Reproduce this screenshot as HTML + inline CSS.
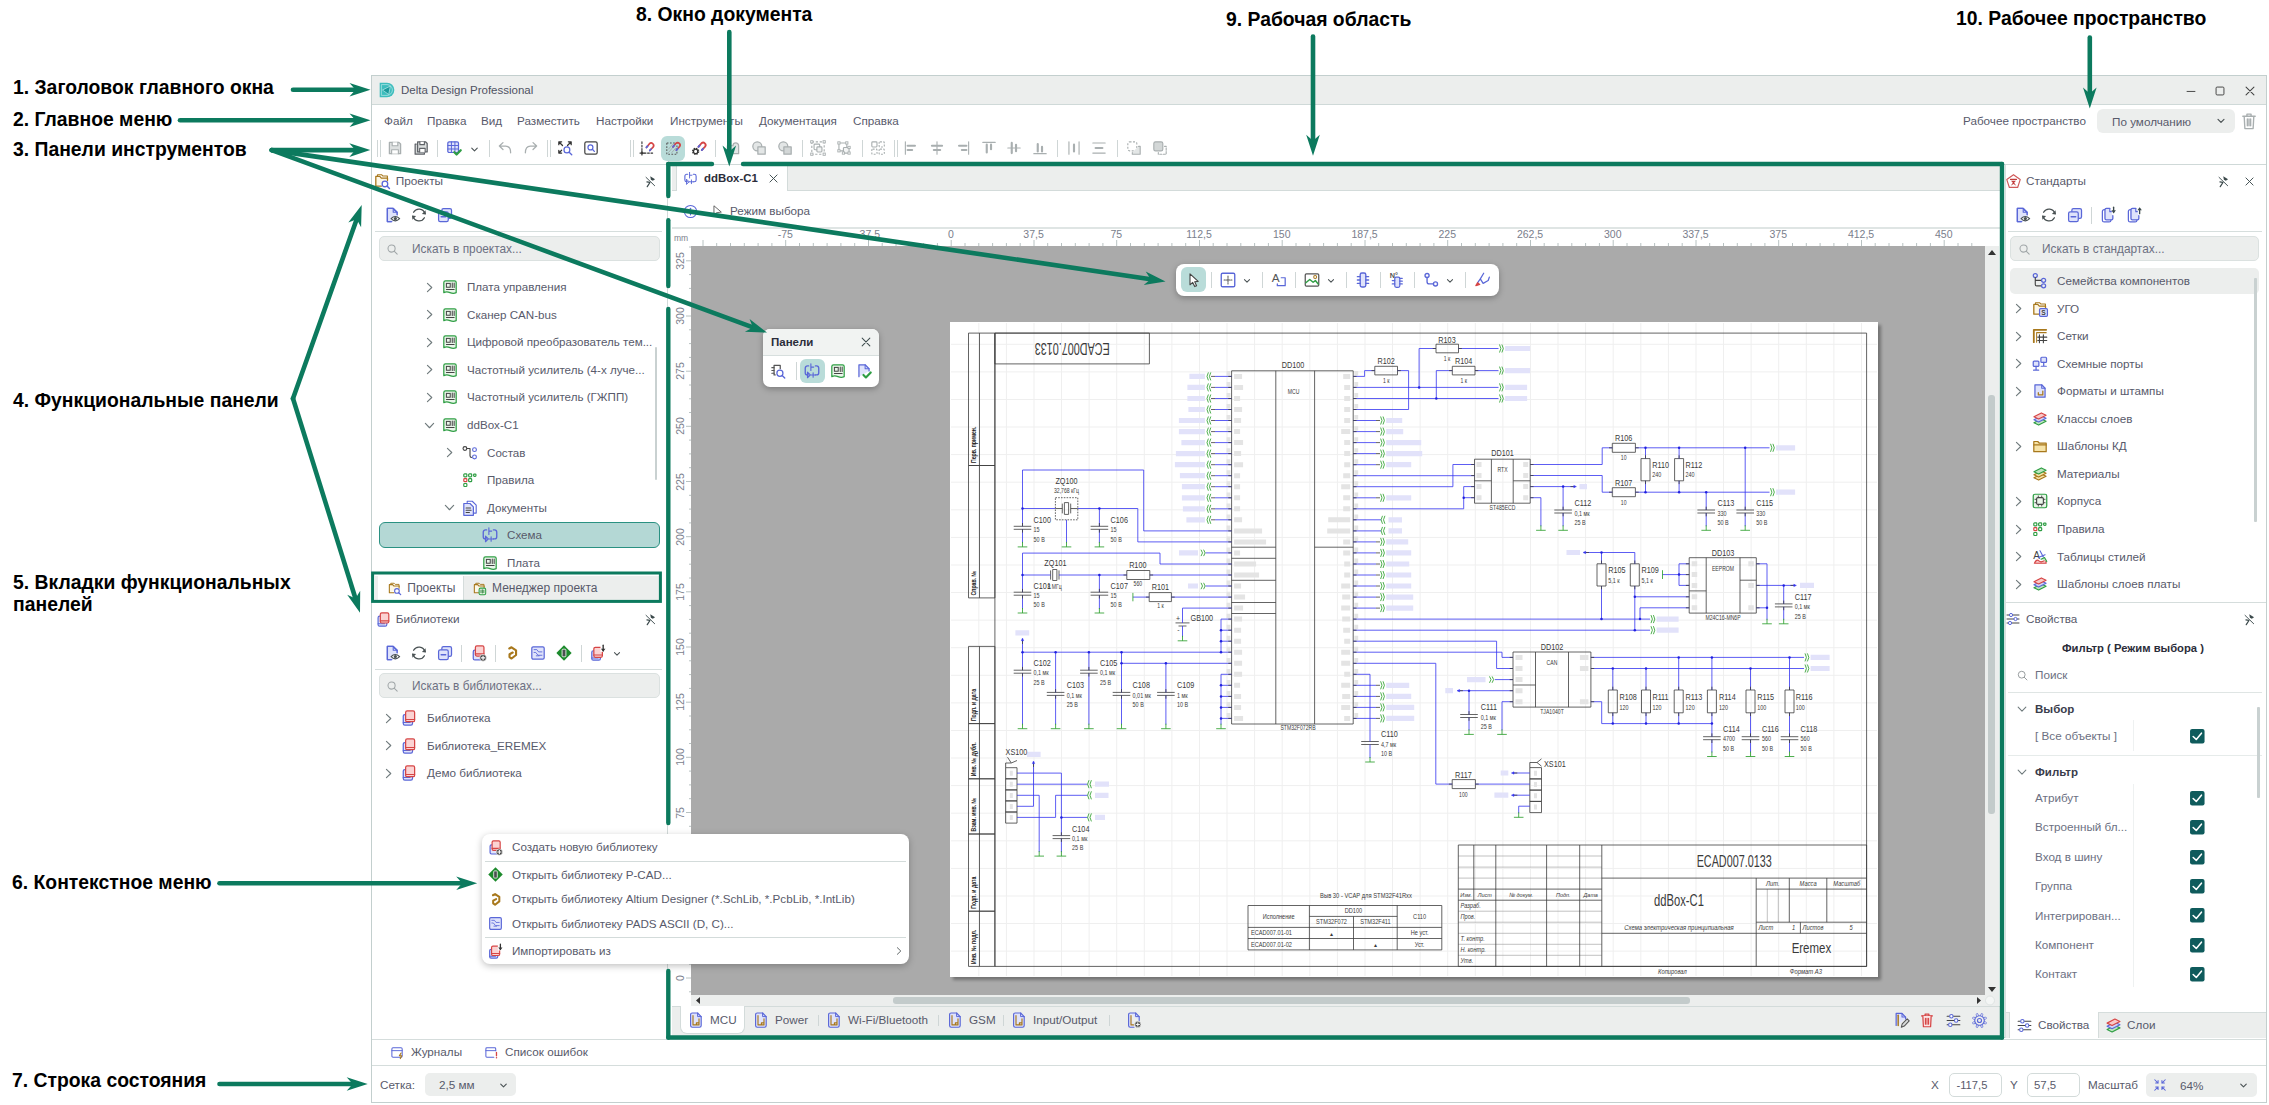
<!DOCTYPE html>
<html lang="ru"><head><meta charset="utf-8"><title>Delta Design Professional</title>
<style>
html,body{margin:0;padding:0;background:#fff;}
body{width:2269px;height:1105px;position:relative;overflow:hidden;font-family:"Liberation Sans",sans-serif;}
.t{position:absolute;white-space:nowrap;}
.r{position:absolute;}
svg{position:absolute;overflow:visible;}
.ic{position:absolute;width:16px;height:16px;}
</style></head><body>
<div class="r" style="left:371px;top:75px;width:1896px;height:1028px;background:#fff;border:1px solid #c3cfce;box-sizing:border-box;"></div>
<div class="r" style="left:372px;top:76px;width:1894px;height:28px;background:#eceeed;"></div>
<div class="r" style="left:372px;top:104px;width:1894px;height:1px;background:#cfd9d8;"></div>
<svg class="ic" style="left:377.5px;top:81.0px;width:18px;height:18px;" viewBox="0 0 16 16"><path d="M1.5 1.5 H8 A6.5 6.5 0 0 1 8 14.5 H1.5 Z" fill="#3dbdbd"/><path d="M4 8 L11 4.5 L9.5 12 Z" fill="#1a9a9c" stroke="#bfeaea" stroke-width="0.6"/><path d="M3 3.2 H8 A4.8 4.8 0 0 1 8 12.8 H3 Z" fill="none" stroke="#bfeaea" stroke-width="0.6"/></svg>
<div class="t" style="top:80.0px;font-size:11.5px;color:#4f5263;line-height:20px;left:401px;">Delta Design Professional</div>
<svg class="ic" style="left:2183.5px;top:83.8px;width:14px;height:14px;" viewBox="0 0 16 16"><path d="M3.5 8.5 L12.5 8.5" stroke="#444" stroke-width="1.1" fill="none" stroke-linecap="round" stroke-linejoin="round" /></svg>
<svg class="ic" style="left:2212.5px;top:83.8px;width:14px;height:14px;" viewBox="0 0 16 16"><rect x="3.5" y="3.5" width="9" height="9" rx="1.2" stroke="#444" stroke-width="1.1" fill="none"/></svg>
<svg class="ic" style="left:2242.5px;top:83.8px;width:14px;height:14px;" viewBox="0 0 16 16"><path d="M3.5 3.5 L12.5 12.5 M12.5 3.5 L3.5 12.5" stroke="#444" stroke-width="1.2" fill="none" stroke-linecap="round" stroke-linejoin="round" /></svg>
<div class="t" style="top:111.0px;font-size:11.7px;color:#585a6b;line-height:20px;left:384px;">Файл</div>
<div class="t" style="top:111.0px;font-size:11.7px;color:#585a6b;line-height:20px;left:427px;">Правка</div>
<div class="t" style="top:111.0px;font-size:11.7px;color:#585a6b;line-height:20px;left:481px;">Вид</div>
<div class="t" style="top:111.0px;font-size:11.7px;color:#585a6b;line-height:20px;left:517px;">Разместить</div>
<div class="t" style="top:111.0px;font-size:11.7px;color:#585a6b;line-height:20px;left:596px;">Настройки</div>
<div class="t" style="top:111.0px;font-size:11.7px;color:#585a6b;line-height:20px;left:670px;">Инструменты</div>
<div class="t" style="top:111.0px;font-size:11.7px;color:#585a6b;line-height:20px;left:759px;">Документация</div>
<div class="t" style="top:111.0px;font-size:11.7px;color:#585a6b;line-height:20px;left:853px;">Справка</div>
<div class="t" style="top:111.0px;font-size:11.7px;color:#585a6b;line-height:20px;left:1963px;">Рабочее пространство</div>
<div class="r" style="left:2097px;top:109px;width:137.5px;height:24px;background:#eceeed;border-radius:6px;"></div>
<div class="t" style="top:111.5px;font-size:11.7px;color:#585a6b;line-height:20px;left:2112px;">По умолчанию</div>
<svg class="ic" style="left:2214.0px;top:114.0px;width:14px;height:14px;" viewBox="0 0 16 16"><path d="M4.6 6.2 L8 9.6 L11.4 6.2" stroke="#4c5456" stroke-width="1.4" fill="none" stroke-linecap="round" stroke-linejoin="round" /></svg>
<svg class="ic" style="left:2237.5px;top:109.8px;width:22px;height:22px;" viewBox="0 0 16 16"><path d="M3.5 4.5 H12.5 M6.5 4.5 V3 H9.5 V4.5 M4.5 4.5 L5 13.5 H11 L11.5 4.5 M6.8 6.5 V11.5 M9.2 6.5 V11.5 M8 6.5 V11.5" stroke="#a9afb0" stroke-width="1.0" fill="none" stroke-linecap="round" stroke-linejoin="round" /></svg>
<div class="r" style="left:377px;top:140px;width:1px;height:17px;background:#cfd6d6;"></div>
<div class="r" style="left:380px;top:140px;width:1px;height:17px;background:#cfd6d6;"></div>
<svg class="ic" style="left:386.0px;top:139.4px;width:18px;height:18px;" viewBox="0 0 16 16"><path d="M3 3 H11.5 L13 4.5 V13 H3 Z" stroke="#a9afb0" stroke-width="1.1" fill="#dde0e0" stroke-linecap="round" stroke-linejoin="round" /><path d="M5.5 3 V6 H10.5 V3" stroke="#a9afb0" stroke-width="1.0" fill="#fff" stroke-linecap="round" stroke-linejoin="round" /><path d="M5 13 V9.5 H11 V13" stroke="#a9afb0" stroke-width="1.0" fill="#fff" stroke-linecap="round" stroke-linejoin="round" /></svg>
<svg class="ic" style="left:412.0px;top:139.4px;width:18px;height:18px;" viewBox="0 0 16 16"><path d="M3.8 4.5 H2.8 V13.5 H11 V12.5" stroke="#5f6368" stroke-width="1.1" fill="#d5d8d8" stroke-linecap="round" stroke-linejoin="round" /><path d="M5 2.5 H12 L13.5 4 V11.5 H5 Z" stroke="#5f6368" stroke-width="1.1" fill="#dde0e0" stroke-linecap="round" stroke-linejoin="round" /><path d="M7 2.5 V5 H11 V2.5" stroke="#5f6368" stroke-width="1.0" fill="#fff" stroke-linecap="round" stroke-linejoin="round" /><path d="M6.8 11.5 V8.3 H11.7 V11.5" stroke="#5f6368" stroke-width="1.0" fill="#fff" stroke-linecap="round" stroke-linejoin="round" /></svg>
<div class="r" style="left:437px;top:140px;width:1px;height:17px;background:#cfd6d6;"></div>
<svg class="ic" style="left:445.0px;top:139.4px;width:18px;height:18px;" viewBox="0 0 16 16"><rect x="2.5" y="2.5" width="9.5" height="9.5" rx="1.2" stroke="#5a67d8" stroke-width="1.1" fill="#dfe3fb"/><path d="M2.5 5.7 H12 M2.5 8.8 H12 M5.7 2.5 V12 M8.8 2.5 V12" stroke="#5a67d8" stroke-width="0.9" fill="none" stroke-linecap="round" stroke-linejoin="round" /><path d="M8.3 11.8 L10.3 13.8 L14 10" stroke="#2f9e44" stroke-width="2.0" fill="none" stroke-linecap="round" stroke-linejoin="round" /></svg>
<svg class="ic" style="left:467.5px;top:143.0px;width:13px;height:13px;" viewBox="0 0 16 16"><path d="M4.6 6.2 L8 9.6 L11.4 6.2" stroke="#4c5456" stroke-width="1.4" fill="none" stroke-linecap="round" stroke-linejoin="round" /></svg>
<div class="r" style="left:489px;top:140px;width:1px;height:17px;background:#cfd6d6;"></div>
<svg class="ic" style="left:496.0px;top:139.4px;width:18px;height:18px;" viewBox="0 0 16 16"><path d="M3 6.3 H8.6 Q13 6.3 13 12.3 M6.2 3.2 L3 6.3 L6.2 9.4" stroke="#a9afb0" stroke-width="1.15" fill="none" stroke-linecap="round" stroke-linejoin="round" /></svg>
<svg class="ic" style="left:522.0px;top:139.4px;width:18px;height:18px;" viewBox="0 0 16 16"><path d="M13 6.3 H7.4 Q3 6.3 3 12.3 M9.8 3.2 L13 6.3 L9.8 9.4" stroke="#a9afb0" stroke-width="1.15" fill="none" stroke-linecap="round" stroke-linejoin="round" /></svg>
<div class="r" style="left:547px;top:140px;width:1px;height:17px;background:#cfd6d6;"></div>
<div class="r" style="left:550px;top:140px;width:1px;height:17px;background:#cfd6d6;"></div>
<svg class="ic" style="left:556.0px;top:139.4px;width:18px;height:18px;" viewBox="0 0 16 16"><path d="M2.5 5 V2.5 H5 M2.7 2.7 L5.8 5.8 M13.5 5 V2.5 H11 M13.3 2.7 L10.2 5.8 M2.5 10 V12.5 H5 M2.7 12.3 L5 10" stroke="#333" stroke-width="1.1" fill="none" stroke-linecap="round" stroke-linejoin="round" /><circle cx="9.7" cy="9.7" r="2.6" stroke="#5a67d8" stroke-width="1.1" fill="none"/><path d="M11.7 11.7 L14 14" stroke="#5a67d8" stroke-width="1.2" fill="none" stroke-linecap="round" stroke-linejoin="round" /></svg>
<svg class="ic" style="left:582.0px;top:139.4px;width:18px;height:18px;" viewBox="0 0 16 16"><rect x="2.5" y="2.5" width="11" height="11" rx="1.5" stroke="#444" stroke-width="1.1" fill="none"/><circle cx="7.5" cy="7.5" r="2.2" stroke="#5a67d8" stroke-width="1.1" fill="none"/><path d="M9.2 9.2 L11 11" stroke="#5a67d8" stroke-width="1.2" fill="none" stroke-linecap="round" stroke-linejoin="round" /></svg>
<div class="r" style="left:630px;top:140px;width:1px;height:17px;background:#cfd6d6;"></div>
<div class="r" style="left:633px;top:140px;width:1px;height:17px;background:#cfd6d6;"></div>
<svg class="ic" style="left:638.0px;top:139.4px;width:18px;height:18px;" viewBox="0 0 16 16"><path d="M3.5 2.5 V12.5 H13" stroke="#333" stroke-width="1.0" fill="none" stroke-linecap="round" stroke-linejoin="round" stroke-dasharray="1.6 1.4"/><path d="M1.8 12.5 H5.2 M3.5 10.8 V14.2" stroke="#333" stroke-width="1.1" fill="none" stroke-linecap="round" stroke-linejoin="round" /><path d="M7.5 7.5 L10.2 4.2 A2.2 2.2 0 0 1 13.4 7.2 L10.5 10.2" stroke="#d64545" stroke-width="1.5" fill="none" stroke-linecap="round" stroke-linejoin="round" /><path d="M7.5 7.5 L8.5 6.3 M10.5 10.2 L11.5 9.1" stroke="#5a67d8" stroke-width="1.6" fill="none" stroke-linecap="round" stroke-linejoin="round" /></svg>
<div class="r" style="left:661.2px;top:136px;width:24.199999999999932px;height:24.599999999999994px;background:#b9dcd9;border-radius:6px;"></div>
<svg class="ic" style="left:664.0px;top:139.4px;width:18px;height:18px;" viewBox="0 0 16 16"><rect x="2.5" y="3.5" width="9" height="10" stroke="#555" stroke-width="0.9" fill="none" stroke-dasharray="1.5 1.3"/><path d="M4 12 L10 5 M4 9 L7.5 5 M7 12 L10.5 8" stroke="#999" stroke-width="0.6" fill="none" stroke-linecap="round" stroke-linejoin="round" /><path d="M8 7 L10.6 3.8 A2.2 2.2 0 0 1 13.8 6.8 L11 9.8" stroke="#d64545" stroke-width="1.5" fill="none" stroke-linecap="round" stroke-linejoin="round" /><path d="M8 7 L9 5.8 M11 9.8 L12 8.7" stroke="#5a67d8" stroke-width="1.6" fill="none" stroke-linecap="round" stroke-linejoin="round" /></svg>
<svg class="ic" style="left:690.0px;top:139.4px;width:18px;height:18px;" viewBox="0 0 16 16"><circle cx="5" cy="11" r="2.4" stroke="#333" stroke-width="1.7" fill="none" stroke-dasharray="1.15 0.73"/><circle cx="5" cy="11" r="1.9" stroke="#333" stroke-width="1.1" fill="none"/><path d="M7.5 7 L10.2 3.8 A2.2 2.2 0 0 1 13.4 6.8 L10.5 9.8" stroke="#d64545" stroke-width="1.6" fill="none" stroke-linecap="round" stroke-linejoin="round" /><path d="M7.5 7 L8.5 5.8 M10.5 9.8 L11.5 8.7" stroke="#5a67d8" stroke-width="1.7" fill="none" stroke-linecap="round" stroke-linejoin="round" /></svg>
<div class="r" style="left:715px;top:140px;width:1px;height:17px;background:#cfd6d6;"></div>
<svg class="ic" style="left:724.0px;top:139.4px;width:18px;height:18px;" viewBox="0 0 16 16"><path d="M3 6 H8 A2.5 2.5 0 0 1 13 6 V13 H3 Z" stroke="#a9afb0" stroke-width="1.1" fill="#e3e6e6" stroke-linecap="round" stroke-linejoin="round" /></svg>
<svg class="ic" style="left:750.0px;top:139.4px;width:18px;height:18px;" viewBox="0 0 16 16"><circle cx="6.5" cy="6.5" r="4" stroke="#a9afb0" stroke-width="1.1" fill="#e3e6e6"/><path d="M7 7 H13.5 V13.5 H7 Z" stroke="#a9afb0" stroke-width="1.1" fill="#e3e6e6" stroke-linecap="round" stroke-linejoin="round" /></svg>
<svg class="ic" style="left:776.0px;top:139.4px;width:18px;height:18px;" viewBox="0 0 16 16"><circle cx="6.5" cy="6.5" r="4" stroke="#a9afb0" stroke-width="1.1" fill="#e3e6e6"/><path d="M7 7 H13.5 V13.5 H7 Z" stroke="#a9afb0" stroke-width="1.1" fill="#d3d7d7" stroke-linecap="round" stroke-linejoin="round" /></svg>
<div class="r" style="left:802px;top:140px;width:1px;height:17px;background:#cfd6d6;"></div>
<svg class="ic" style="left:809.0px;top:139.4px;width:18px;height:18px;" viewBox="0 0 16 16"><rect x="2.5" y="2.5" width="11" height="11" stroke="#a9afb0" stroke-width="1" fill="none" stroke-dasharray="2 1.5"/><rect x="4.5" y="4.5" width="5" height="5" rx="0.8" stroke="#a9afb0" stroke-width="1" fill="none"/><rect x="7" y="7" width="4.5" height="4.5" rx="0.8" stroke="#a9afb0" stroke-width="1" fill="#f3f4f4"/><rect x="1.5" y="1.5" width="2" height="2" fill="#fff" stroke="#a9afb0" stroke-width="0.8"/><rect x="12.5" y="1.5" width="2" height="2" fill="#fff" stroke="#a9afb0" stroke-width="0.8"/><rect x="1.5" y="12.5" width="2" height="2" fill="#fff" stroke="#a9afb0" stroke-width="0.8"/><rect x="12.5" y="12.5" width="2" height="2" fill="#fff" stroke="#a9afb0" stroke-width="0.8"/></svg>
<svg class="ic" style="left:835.0px;top:139.4px;width:18px;height:18px;" viewBox="0 0 16 16"><rect x="3.5" y="3.5" width="7" height="7" rx="0.8" stroke="#a9afb0" stroke-width="1" fill="none"/><rect x="7.5" y="7.5" width="5" height="5" rx="0.8" stroke="#a9afb0" stroke-width="1" fill="#f3f4f4"/><rect x="2.5" y="2.5" width="2" height="2" fill="#fff" stroke="#a9afb0" stroke-width="0.8"/><rect x="9.5" y="2.5" width="2" height="2" fill="#fff" stroke="#a9afb0" stroke-width="0.8"/><rect x="2.5" y="9.5" width="2" height="2" fill="#fff" stroke="#a9afb0" stroke-width="0.8"/><rect x="11.5" y="6.5" width="2" height="2" fill="#fff" stroke="#a9afb0" stroke-width="0.8"/><rect x="11.5" y="11.5" width="2" height="2" fill="#fff" stroke="#a9afb0" stroke-width="0.8"/><rect x="6.5" y="11.5" width="2" height="2" fill="#fff" stroke="#a9afb0" stroke-width="0.8"/></svg>
<div class="r" style="left:862px;top:140px;width:1px;height:17px;background:#cfd6d6;"></div>
<svg class="ic" style="left:869.0px;top:139.4px;width:18px;height:18px;" viewBox="0 0 16 16"><rect x="2.5" y="2.5" width="4.6" height="4.6" rx="0.8" stroke="#a9afb0" stroke-width="1" fill="none"/><rect x="9" y="2.5" width="4.6" height="4.6" rx="0.8" stroke="#a9afb0" stroke-width="1" fill="none" stroke-dasharray="1.7 1.2"/><rect x="2.5" y="9" width="4.6" height="4.6" rx="0.8" stroke="#a9afb0" stroke-width="1" fill="none" stroke-dasharray="1.7 1.2"/><rect x="9" y="9" width="4.6" height="4.6" rx="0.8" stroke="#a9afb0" stroke-width="1" fill="none" stroke-dasharray="1.7 1.2"/></svg>
<div class="r" style="left:894px;top:140px;width:1px;height:17px;background:#cfd6d6;"></div>
<div class="r" style="left:897px;top:140px;width:1px;height:17px;background:#cfd6d6;"></div>
<svg class="ic" style="left:902.0px;top:139.4px;width:18px;height:18px;" viewBox="0 0 16 16"><path d="M3 2.5 V13.5" stroke="#a9afb0" stroke-width="1.0" fill="none" stroke-linecap="round" stroke-linejoin="round" /><path d="M5 6 H11.5 M5 9.8 H9" stroke="#a9afb0" stroke-width="1.9" fill="none" stroke-linecap="round" stroke-linejoin="round" stroke-linecap="butt"/></svg>
<svg class="ic" style="left:928.0px;top:139.4px;width:18px;height:18px;" viewBox="0 0 16 16"><path d="M8 2.5 V13.5" stroke="#a9afb0" stroke-width="1.0" fill="none" stroke-linecap="round" stroke-linejoin="round" /><path d="M3.5 6 H12.5 M5.2 9.8 H10.8" stroke="#a9afb0" stroke-width="1.9" fill="none" stroke-linecap="round" stroke-linejoin="round" stroke-linecap="butt"/></svg>
<svg class="ic" style="left:954.0px;top:139.4px;width:18px;height:18px;" viewBox="0 0 16 16"><path d="M13 2.5 V13.5" stroke="#a9afb0" stroke-width="1.0" fill="none" stroke-linecap="round" stroke-linejoin="round" /><path d="M4.5 6 H11 M7 9.8 H11" stroke="#a9afb0" stroke-width="1.9" fill="none" stroke-linecap="round" stroke-linejoin="round" stroke-linecap="butt"/></svg>
<svg class="ic" style="left:980.0px;top:139.4px;width:18px;height:18px;" viewBox="0 0 16 16"><path d="M2.5 3 H13.5" stroke="#a9afb0" stroke-width="1.0" fill="none" stroke-linecap="round" stroke-linejoin="round" /><path d="M6 5 V12 M9.8 5 V9" stroke="#a9afb0" stroke-width="1.9" fill="none" stroke-linecap="round" stroke-linejoin="round" stroke-linecap="butt"/></svg>
<svg class="ic" style="left:1005.0px;top:139.4px;width:18px;height:18px;" viewBox="0 0 16 16"><path d="M2.5 8 H13.5" stroke="#a9afb0" stroke-width="1.0" fill="none" stroke-linecap="round" stroke-linejoin="round" /><path d="M6 3.5 V12.5 M9.8 5.2 V10.8" stroke="#a9afb0" stroke-width="1.9" fill="none" stroke-linecap="round" stroke-linejoin="round" stroke-linecap="butt"/></svg>
<svg class="ic" style="left:1031.0px;top:139.4px;width:18px;height:18px;" viewBox="0 0 16 16"><path d="M2.5 13 H13.5" stroke="#a9afb0" stroke-width="1.0" fill="none" stroke-linecap="round" stroke-linejoin="round" /><path d="M6 4.5 V11 M9.8 7 V11" stroke="#a9afb0" stroke-width="1.9" fill="none" stroke-linecap="round" stroke-linejoin="round" stroke-linecap="butt"/></svg>
<div class="r" style="left:1057px;top:140px;width:1px;height:17px;background:#cfd6d6;"></div>
<svg class="ic" style="left:1065.0px;top:139.4px;width:18px;height:18px;" viewBox="0 0 16 16"><path d="M3.5 2.5 V13.5 M12.5 2.5 V13.5" stroke="#a9afb0" stroke-width="1.0" fill="none" stroke-linecap="round" stroke-linejoin="round" /><path d="M8 5 V11" stroke="#a9afb0" stroke-width="1.9" fill="none" stroke-linecap="round" stroke-linejoin="round" stroke-linecap="butt"/></svg>
<svg class="ic" style="left:1090.0px;top:139.4px;width:18px;height:18px;" viewBox="0 0 16 16"><path d="M2.5 3.5 H13.5 M2.5 12.5 H13.5" stroke="#a9afb0" stroke-width="1.0" fill="none" stroke-linecap="round" stroke-linejoin="round" /><path d="M5 8 H11" stroke="#a9afb0" stroke-width="1.9" fill="none" stroke-linecap="round" stroke-linejoin="round" stroke-linecap="butt"/></svg>
<div class="r" style="left:1117px;top:140px;width:1px;height:17px;background:#cfd6d6;"></div>
<svg class="ic" style="left:1125.0px;top:139.4px;width:18px;height:18px;" viewBox="0 0 16 16"><rect x="2.5" y="2.5" width="8" height="8" rx="1.5" stroke="#a9afb0" stroke-width="1" fill="none" stroke-dasharray="1.8 1.3"/><path d="M12 6.5 H13.5 V13.5 H6.5 V12" stroke="#a9afb0" stroke-width="1.0" fill="#e3e6e6" stroke-linecap="round" stroke-linejoin="round" /></svg>
<svg class="ic" style="left:1151.0px;top:139.4px;width:18px;height:18px;" viewBox="0 0 16 16"><rect x="2.5" y="2.5" width="8" height="8" rx="1.5" stroke="#a9afb0" stroke-width="1" fill="#d3d7d7"/><path d="M12 6.5 H13.5 V13.5 H6.5 V12" stroke="#a9afb0" stroke-width="1.0" fill="none" stroke-linecap="round" stroke-linejoin="round" stroke-dasharray="1.8 1.3"/></svg>
<div class="r" style="left:372px;top:164px;width:1894px;height:1px;background:#cfd9d8;"></div>
<div class="r" style="left:667px;top:165px;width:1px;height:873px;background:#d3dbda;"></div>
<svg class="ic" style="left:373.0px;top:172.0px;width:18px;height:18px;" viewBox="0 0 16 16"><path d="M4 3.6 V2.4 H7.6 L8.8 3.6 H12.8 V6" stroke="#a8781c" stroke-width="1.0" fill="none" stroke-linecap="round" stroke-linejoin="round" /><path d="M2.5 12.6 V3.9 H6 L7.4 5.4 H12.9 V7.6 M2.5 12.6 H7.4" stroke="#a8781c" stroke-width="1.15" fill="#fdf7e6" stroke-linecap="round" stroke-linejoin="round" /><circle cx="10.6" cy="10.6" r="2.5" stroke="#5a67d8" stroke-width="1.15" fill="#fff"/><path d="M12.5 12.5 L14.6 14.6" stroke="#5a67d8" stroke-width="1.3" fill="none" stroke-linecap="round" stroke-linejoin="round" /></svg>
<div class="t" style="top:171.0px;font-size:11.8px;color:#585a6b;line-height:20px;left:395.7px;">Проекты</div>
<svg class="ic" style="left:643.5px;top:174.5px;width:13px;height:13px;" viewBox="0 0 16 16"><path d="M7.7 1.6 L13.6 5.2 L10.8 7.2 L8.5 5.7 Z" fill="#3c4a4c"/><path d="M2.5 2.9 L13.1 13.2" stroke="#3c4a4c" stroke-width="1.15" fill="none" stroke-linecap="round" stroke-linejoin="round" /><path d="M3.6 8.4 L7.1 9.1" stroke="#3c4a4c" stroke-width="1.5" fill="none" stroke-linecap="round" stroke-linejoin="round" /><path d="M7.1 9.5 L4 14.4" stroke="#3c4a4c" stroke-width="1.5" fill="none" stroke-linecap="round" stroke-linejoin="round" /></svg>
<svg class="ic" style="left:384.0px;top:206.0px;width:18px;height:18px;" viewBox="0 0 16 16"><path d="M3 13.8 V2.2 H8.2 L11.6 5.6 V8 M3 13.8 H7" stroke="#5a67d8" stroke-width="1.15" fill="#dfe3fb" stroke-linecap="round" stroke-linejoin="round" /><path d="M3.2 2.4 H8 V5.8 H11.4 V13.6 H3.2 Z" fill="#dfe3fb"/><path d="M3 13.8 V2.2 H8.2 L11.6 5.6 V7.5 M3 13.8 H6.5" stroke="#5a67d8" stroke-width="1.15" fill="none" stroke-linecap="round" stroke-linejoin="round" /><path d="M8.2 2.2 V5.6 H11.6" stroke="#5a67d8" stroke-width="1.0" fill="none" stroke-linecap="round" stroke-linejoin="round" /><path d="M6.3 11.3 Q10 7.4 13.9 11.3 Q10 15 6.3 11.3 Z" stroke="#4a5254" stroke-width="1.0" fill="#fff" stroke-linecap="round" stroke-linejoin="round" /><circle cx="10.1" cy="11.2" r="1.4" fill="#4a5254"/></svg>
<svg class="ic" style="left:410.0px;top:206.0px;width:18px;height:18px;" viewBox="0 0 16 16"><path d="M13.3 6.8 A5.5 5.5 0 0 0 3.2 5.6" stroke="#4a5254" stroke-width="1.15" fill="none" stroke-linecap="round" stroke-linejoin="round" /><path d="M2.7 9.2 A5.5 5.5 0 0 0 12.8 10.4" stroke="#4a5254" stroke-width="1.15" fill="none" stroke-linecap="round" stroke-linejoin="round" /><path d="M10.6 7.2 L14.2 7.6 L13.8 3.8 Z" fill="#4a5254"/><path d="M5.4 8.8 L1.8 8.4 L2.2 12.2 Z" fill="#4a5254"/></svg>
<svg class="ic" style="left:436.0px;top:206.0px;width:18px;height:18px;" viewBox="0 0 16 16"><rect x="5.2" y="2.3" width="8.6" height="8.6" rx="1.4" stroke="#5a67d8" stroke-width="1.1" fill="#dfe3fb"/><rect x="2.3" y="5.2" width="8.6" height="8.6" rx="1.4" stroke="#5a67d8" stroke-width="1.1" fill="#dfe3fb"/><path d="M4.6 9.5 H8.6" stroke="#5a67d8" stroke-width="1.3" fill="none" stroke-linecap="round" stroke-linejoin="round" /></svg>
<div class="r" style="left:375px;top:231px;width:287px;height:1px;background:#d6dedd;"></div>
<div class="r" style="left:379px;top:236px;width:281px;height:25px;background:#eceeed;border:1px solid #dbe1e0;box-sizing:border-box;border-radius:5px;"></div>
<svg class="ic" style="left:385.0px;top:241.5px;width:15px;height:15px;" viewBox="0 0 16 16"><circle cx="7" cy="7" r="3.8" stroke="#a0a6a8" stroke-width="1.1" fill="none"/><path d="M10 10 L13 13" stroke="#a0a6a8" stroke-width="1.1" fill="none" stroke-linecap="round" stroke-linejoin="round" /></svg>
<div class="t" style="top:238.5px;font-size:11.85px;color:#6c7082;line-height:20px;left:412px;">Искать в проектах...</div>
<div class="r" style="left:379px;top:522px;width:281px;height:26px;background:#b4d8d5;border:1.5px solid #2a9182;box-sizing:border-box;border-radius:6px;"></div>
<svg class="ic" style="left:421.5px;top:279.5px;width:15px;height:15px;" viewBox="0 0 16 16"><path d="M5.8 3.6 L10.4 8 L5.8 12.4" stroke="#6f7a7c" stroke-width="1.2" fill="none" stroke-linecap="round" stroke-linejoin="round" /></svg>
<svg class="ic" style="left:441.0px;top:278.0px;width:18px;height:18px;" viewBox="0 0 16 16"><path d="M2.5 13 V4 A1.5 1.5 0 0 1 4 2.5 H12 A1.5 1.5 0 0 1 13.5 4 V13 Q11 14.3 8 13 Q5 11.8 2.5 13 Z" stroke="#2f9e44" stroke-width="1.1" fill="#eaf6ea" stroke-linecap="round" stroke-linejoin="round" /><rect x="4.8" y="4.8" width="3.4" height="3.4" stroke="#444" stroke-width="0.9" fill="none"/><path d="M10 4.5 V8.5 M11.7 4.5 V8.5 M4.8 10.2 H11.7" stroke="#444" stroke-width="0.9" fill="none" stroke-linecap="round" stroke-linejoin="round" /></svg>
<div class="t" style="top:277.0px;font-size:11.62px;color:#585a6b;line-height:20px;left:467px;">Плата управления</div>
<svg class="ic" style="left:421.5px;top:307.1px;width:15px;height:15px;" viewBox="0 0 16 16"><path d="M5.8 3.6 L10.4 8 L5.8 12.4" stroke="#6f7a7c" stroke-width="1.2" fill="none" stroke-linecap="round" stroke-linejoin="round" /></svg>
<svg class="ic" style="left:441.0px;top:305.6px;width:18px;height:18px;" viewBox="0 0 16 16"><path d="M2.5 13 V4 A1.5 1.5 0 0 1 4 2.5 H12 A1.5 1.5 0 0 1 13.5 4 V13 Q11 14.3 8 13 Q5 11.8 2.5 13 Z" stroke="#2f9e44" stroke-width="1.1" fill="#eaf6ea" stroke-linecap="round" stroke-linejoin="round" /><rect x="4.8" y="4.8" width="3.4" height="3.4" stroke="#444" stroke-width="0.9" fill="none"/><path d="M10 4.5 V8.5 M11.7 4.5 V8.5 M4.8 10.2 H11.7" stroke="#444" stroke-width="0.9" fill="none" stroke-linecap="round" stroke-linejoin="round" /></svg>
<div class="t" style="top:304.6px;font-size:11.62px;color:#585a6b;line-height:20px;left:467px;">Сканер CAN-bus</div>
<svg class="ic" style="left:421.5px;top:334.7px;width:15px;height:15px;" viewBox="0 0 16 16"><path d="M5.8 3.6 L10.4 8 L5.8 12.4" stroke="#6f7a7c" stroke-width="1.2" fill="none" stroke-linecap="round" stroke-linejoin="round" /></svg>
<svg class="ic" style="left:441.0px;top:333.2px;width:18px;height:18px;" viewBox="0 0 16 16"><path d="M2.5 13 V4 A1.5 1.5 0 0 1 4 2.5 H12 A1.5 1.5 0 0 1 13.5 4 V13 Q11 14.3 8 13 Q5 11.8 2.5 13 Z" stroke="#2f9e44" stroke-width="1.1" fill="#eaf6ea" stroke-linecap="round" stroke-linejoin="round" /><rect x="4.8" y="4.8" width="3.4" height="3.4" stroke="#444" stroke-width="0.9" fill="none"/><path d="M10 4.5 V8.5 M11.7 4.5 V8.5 M4.8 10.2 H11.7" stroke="#444" stroke-width="0.9" fill="none" stroke-linecap="round" stroke-linejoin="round" /></svg>
<div class="t" style="top:332.2px;font-size:11.62px;color:#585a6b;line-height:20px;left:467px;">Цифровой преобразователь тем...</div>
<svg class="ic" style="left:421.5px;top:362.3px;width:15px;height:15px;" viewBox="0 0 16 16"><path d="M5.8 3.6 L10.4 8 L5.8 12.4" stroke="#6f7a7c" stroke-width="1.2" fill="none" stroke-linecap="round" stroke-linejoin="round" /></svg>
<svg class="ic" style="left:441.0px;top:360.8px;width:18px;height:18px;" viewBox="0 0 16 16"><path d="M2.5 13 V4 A1.5 1.5 0 0 1 4 2.5 H12 A1.5 1.5 0 0 1 13.5 4 V13 Q11 14.3 8 13 Q5 11.8 2.5 13 Z" stroke="#2f9e44" stroke-width="1.1" fill="#eaf6ea" stroke-linecap="round" stroke-linejoin="round" /><rect x="4.8" y="4.8" width="3.4" height="3.4" stroke="#444" stroke-width="0.9" fill="none"/><path d="M10 4.5 V8.5 M11.7 4.5 V8.5 M4.8 10.2 H11.7" stroke="#444" stroke-width="0.9" fill="none" stroke-linecap="round" stroke-linejoin="round" /></svg>
<div class="t" style="top:359.8px;font-size:11.62px;color:#585a6b;line-height:20px;left:467px;">Частотный усилитель (4-х луче...</div>
<svg class="ic" style="left:421.5px;top:389.9px;width:15px;height:15px;" viewBox="0 0 16 16"><path d="M5.8 3.6 L10.4 8 L5.8 12.4" stroke="#6f7a7c" stroke-width="1.2" fill="none" stroke-linecap="round" stroke-linejoin="round" /></svg>
<svg class="ic" style="left:441.0px;top:388.4px;width:18px;height:18px;" viewBox="0 0 16 16"><path d="M2.5 13 V4 A1.5 1.5 0 0 1 4 2.5 H12 A1.5 1.5 0 0 1 13.5 4 V13 Q11 14.3 8 13 Q5 11.8 2.5 13 Z" stroke="#2f9e44" stroke-width="1.1" fill="#eaf6ea" stroke-linecap="round" stroke-linejoin="round" /><rect x="4.8" y="4.8" width="3.4" height="3.4" stroke="#444" stroke-width="0.9" fill="none"/><path d="M10 4.5 V8.5 M11.7 4.5 V8.5 M4.8 10.2 H11.7" stroke="#444" stroke-width="0.9" fill="none" stroke-linecap="round" stroke-linejoin="round" /></svg>
<div class="t" style="top:387.4px;font-size:11.62px;color:#585a6b;line-height:20px;left:467px;">Частотный усилитель (ГЖПП)</div>
<svg class="ic" style="left:421.5px;top:417.5px;width:15px;height:15px;" viewBox="0 0 16 16"><path d="M3.6 5.8 L8 10.4 L12.4 5.8" stroke="#6f7a7c" stroke-width="1.2" fill="none" stroke-linecap="round" stroke-linejoin="round" /></svg>
<svg class="ic" style="left:441.0px;top:416.0px;width:18px;height:18px;" viewBox="0 0 16 16"><path d="M2.5 13 V4 A1.5 1.5 0 0 1 4 2.5 H12 A1.5 1.5 0 0 1 13.5 4 V13 Q11 14.3 8 13 Q5 11.8 2.5 13 Z" stroke="#2f9e44" stroke-width="1.1" fill="#eaf6ea" stroke-linecap="round" stroke-linejoin="round" /><rect x="4.8" y="4.8" width="3.4" height="3.4" stroke="#444" stroke-width="0.9" fill="none"/><path d="M10 4.5 V8.5 M11.7 4.5 V8.5 M4.8 10.2 H11.7" stroke="#444" stroke-width="0.9" fill="none" stroke-linecap="round" stroke-linejoin="round" /></svg>
<div class="t" style="top:415.0px;font-size:11.62px;color:#585a6b;line-height:20px;left:467px;">ddBox-C1</div>
<svg class="ic" style="left:441.5px;top:445.1px;width:15px;height:15px;" viewBox="0 0 16 16"><path d="M5.8 3.6 L10.4 8 L5.8 12.4" stroke="#6f7a7c" stroke-width="1.2" fill="none" stroke-linecap="round" stroke-linejoin="round" /></svg>
<svg class="ic" style="left:461.0px;top:443.6px;width:18px;height:18px;" viewBox="0 0 16 16"><circle cx="3.5" cy="4" r="1.7" stroke="#444" stroke-width="1" fill="none"/><path d="M5.2 4 H8 V10.5 Q8 12 9.5 12" stroke="#444" stroke-width="1" fill="none" stroke-linecap="round" stroke-linejoin="round" /><circle cx="12" cy="5" r="1.7" stroke="#5a67d8" stroke-width="1" fill="none"/><circle cx="12" cy="11.5" r="1.7" stroke="#5a67d8" stroke-width="1" fill="none"/></svg>
<div class="t" style="top:442.6px;font-size:11.62px;color:#585a6b;line-height:20px;left:487px;">Состав</div>
<svg class="ic" style="left:461.0px;top:471.2px;width:18px;height:18px;" viewBox="0 0 16 16"><rect x="2.5" y="2.5" width="2.7" height="2.7" rx="0.7" stroke="#2f9e44" stroke-width="1.05" fill="none"/><rect x="6.8" y="2.5" width="2.7" height="2.7" rx="0.7" stroke="#2f9e44" stroke-width="1.05" fill="none"/><rect x="11.2" y="2.7" width="2.1" height="2.1" rx="0.7" stroke="#2f9e44" stroke-width="1.05" fill="none"/><rect x="2.5" y="6.8" width="2.7" height="2.7" rx="0.7" stroke="#d64545" stroke-width="1.05" fill="none"/><rect x="6.8" y="6.8" width="2.7" height="2.7" rx="0.7" stroke="#2f9e44" stroke-width="1.05" fill="none"/><rect x="2.5" y="11.1" width="2.7" height="2.7" rx="0.7" stroke="#2f9e44" stroke-width="1.05" fill="none"/></svg>
<div class="t" style="top:470.2px;font-size:11.62px;color:#585a6b;line-height:20px;left:487px;">Правила</div>
<svg class="ic" style="left:441.5px;top:500.3px;width:15px;height:15px;" viewBox="0 0 16 16"><path d="M3.6 5.8 L8 10.4 L12.4 5.8" stroke="#6f7a7c" stroke-width="1.2" fill="none" stroke-linecap="round" stroke-linejoin="round" /></svg>
<svg class="ic" style="left:461.0px;top:498.8px;width:18px;height:18px;" viewBox="0 0 16 16"><path d="M5.5 3 V2 H10 L13.5 5.5 V12.5 H11.5" stroke="#5a67d8" stroke-width="1.0" fill="none" stroke-linecap="round" stroke-linejoin="round" /><path d="M2.5 4 H8 L11 7 V14.5 H2.5 Z" stroke="#5a67d8" stroke-width="1.1" fill="#dfe3fb" stroke-linecap="round" stroke-linejoin="round" /><path d="M4.5 8 H8.5 M4.5 10 H9 M4.5 12 H7.5" stroke="#444" stroke-width="0.9" fill="none" stroke-linecap="round" stroke-linejoin="round" /></svg>
<div class="t" style="top:497.8px;font-size:11.62px;color:#585a6b;line-height:20px;left:487px;">Документы</div>
<svg class="ic" style="left:481.0px;top:526.4px;width:18px;height:18px;" viewBox="0 0 16 16"><path d="M5 3.5 H4 A2 2 0 0 0 2 5.5 V9.5 A2 2 0 0 0 4 11.5 H5 M11 3.5 H12 A2 2 0 0 1 14 5.5 V9.5 A2 2 0 0 1 12 11.5 H11" stroke="#5a67d8" stroke-width="1.2" fill="none" stroke-linecap="round" stroke-linejoin="round" /><path d="M7 1.5 V7.5 M7 4.5 L9.5 4.5 M4 9 L6.5 11.5 L4 14 Z M6.5 11.5 H9 M9 9.5 V13.5 M9 11.5 H11" stroke="#5a67d8" stroke-width="1.0" fill="none" stroke-linecap="round" stroke-linejoin="round" /></svg>
<div class="t" style="top:525.4px;font-size:11.62px;color:#585a6b;line-height:20px;left:507px;">Схема</div>
<svg class="ic" style="left:481.0px;top:554.0px;width:18px;height:18px;" viewBox="0 0 16 16"><path d="M2.5 13 V4 A1.5 1.5 0 0 1 4 2.5 H12 A1.5 1.5 0 0 1 13.5 4 V13 Q11 14.3 8 13 Q5 11.8 2.5 13 Z" stroke="#2f9e44" stroke-width="1.1" fill="#eaf6ea" stroke-linecap="round" stroke-linejoin="round" /><rect x="4.8" y="4.8" width="3.4" height="3.4" stroke="#444" stroke-width="0.9" fill="none"/><path d="M10 4.5 V8.5 M11.7 4.5 V8.5 M4.8 10.2 H11.7" stroke="#444" stroke-width="0.9" fill="none" stroke-linecap="round" stroke-linejoin="round" /></svg>
<div class="t" style="top:553.0px;font-size:11.62px;color:#585a6b;line-height:20px;left:507px;">Плата</div>
<div class="r" style="left:654.5px;top:347px;width:2.5px;height:133px;background:#c9d1d1;border-radius:1px;"></div>
<div class="r" style="left:375px;top:576px;width:285px;height:24px;background:#eceeed;"></div>
<div class="r" style="left:378px;top:576px;width:85px;height:24px;background:#fff;"></div>
<div class="r" style="left:463px;top:576px;width:1px;height:24px;background:#d5dcdb;"></div>
<svg class="ic" style="left:386.5px;top:580.5px;width:15px;height:15px;" viewBox="0 0 16 16"><path d="M4 3.6 V2.4 H7.6 L8.8 3.6 H12.8 V6" stroke="#a8781c" stroke-width="1.0" fill="none" stroke-linecap="round" stroke-linejoin="round" /><path d="M2.5 12.6 V3.9 H6 L7.4 5.4 H12.9 V7.6 M2.5 12.6 H7.4" stroke="#a8781c" stroke-width="1.15" fill="#fdf7e6" stroke-linecap="round" stroke-linejoin="round" /><circle cx="10.6" cy="10.6" r="2.5" stroke="#5a67d8" stroke-width="1.15" fill="#fff"/><path d="M12.5 12.5 L14.6 14.6" stroke="#5a67d8" stroke-width="1.3" fill="none" stroke-linecap="round" stroke-linejoin="round" /></svg>
<div class="t" style="top:578.0px;font-size:12.0px;color:#585a6b;line-height:20px;left:407.3px;">Проекты</div>
<svg class="ic" style="left:471.5px;top:580.5px;width:15px;height:15px;" viewBox="0 0 16 16"><path d="M4 3.6 V2.4 H7.6 L8.8 3.6 H12.8 V6" stroke="#a8781c" stroke-width="1.0" fill="none" stroke-linecap="round" stroke-linejoin="round" /><path d="M2.5 12.6 V3.9 H6 L7.4 5.4 H12.9 V7 M2.5 12.6 H7" stroke="#a8781c" stroke-width="1.15" fill="#fdf7e6" stroke-linecap="round" stroke-linejoin="round" /><rect x="7.6" y="7.6" width="7" height="7" rx="1.4" stroke="#2f9e44" stroke-width="1.1" fill="#dff3df"/><path d="M9.6 9.8 V12.4 M12.6 9.8 V12.4 M11.1 9.4 V12.8" stroke="#2b7a36" stroke-width="0.9" fill="none" stroke-linecap="round" stroke-linejoin="round" /></svg>
<div class="t" style="top:578.0px;font-size:12.0px;color:#585a6b;line-height:20px;left:492px;">Менеджер проекта</div>
<svg class="ic" style="left:374.5px;top:611.0px;width:17px;height:17px;" viewBox="0 0 16 16"><rect x="2.9" y="4.9" width="8.2" height="9.4" rx="1.4" fill="#dfe3fb" stroke="#5a67d8" stroke-width="1.1"/><path d="M2.9 12 H9" stroke="#5a67d8" stroke-width="1.0" fill="none" stroke-linecap="round" stroke-linejoin="round" /><rect x="5" y="1.7" width="8" height="9.6" rx="1.4" fill="#fbd3d3" stroke="#d64545" stroke-width="1.1"/><path d="M5 9.3 H13" stroke="#d64545" stroke-width="1.0" fill="none" stroke-linecap="round" stroke-linejoin="round" /></svg>
<div class="t" style="top:609.0px;font-size:11.8px;color:#585a6b;line-height:20px;left:395.7px;">Библиотеки</div>
<svg class="ic" style="left:643.5px;top:612.5px;width:13px;height:13px;" viewBox="0 0 16 16"><path d="M7.7 1.6 L13.6 5.2 L10.8 7.2 L8.5 5.7 Z" fill="#3c4a4c"/><path d="M2.5 2.9 L13.1 13.2" stroke="#3c4a4c" stroke-width="1.15" fill="none" stroke-linecap="round" stroke-linejoin="round" /><path d="M3.6 8.4 L7.1 9.1" stroke="#3c4a4c" stroke-width="1.5" fill="none" stroke-linecap="round" stroke-linejoin="round" /><path d="M7.1 9.5 L4 14.4" stroke="#3c4a4c" stroke-width="1.5" fill="none" stroke-linecap="round" stroke-linejoin="round" /></svg>
<svg class="ic" style="left:384.0px;top:644.0px;width:18px;height:18px;" viewBox="0 0 16 16"><path d="M3 13.8 V2.2 H8.2 L11.6 5.6 V8 M3 13.8 H7" stroke="#5a67d8" stroke-width="1.15" fill="#dfe3fb" stroke-linecap="round" stroke-linejoin="round" /><path d="M3.2 2.4 H8 V5.8 H11.4 V13.6 H3.2 Z" fill="#dfe3fb"/><path d="M3 13.8 V2.2 H8.2 L11.6 5.6 V7.5 M3 13.8 H6.5" stroke="#5a67d8" stroke-width="1.15" fill="none" stroke-linecap="round" stroke-linejoin="round" /><path d="M8.2 2.2 V5.6 H11.6" stroke="#5a67d8" stroke-width="1.0" fill="none" stroke-linecap="round" stroke-linejoin="round" /><path d="M6.3 11.3 Q10 7.4 13.9 11.3 Q10 15 6.3 11.3 Z" stroke="#4a5254" stroke-width="1.0" fill="#fff" stroke-linecap="round" stroke-linejoin="round" /><circle cx="10.1" cy="11.2" r="1.4" fill="#4a5254"/></svg>
<svg class="ic" style="left:410.0px;top:644.0px;width:18px;height:18px;" viewBox="0 0 16 16"><path d="M13.3 6.8 A5.5 5.5 0 0 0 3.2 5.6" stroke="#4a5254" stroke-width="1.15" fill="none" stroke-linecap="round" stroke-linejoin="round" /><path d="M2.7 9.2 A5.5 5.5 0 0 0 12.8 10.4" stroke="#4a5254" stroke-width="1.15" fill="none" stroke-linecap="round" stroke-linejoin="round" /><path d="M10.6 7.2 L14.2 7.6 L13.8 3.8 Z" fill="#4a5254"/><path d="M5.4 8.8 L1.8 8.4 L2.2 12.2 Z" fill="#4a5254"/></svg>
<svg class="ic" style="left:436.0px;top:644.0px;width:18px;height:18px;" viewBox="0 0 16 16"><rect x="5.2" y="2.3" width="8.6" height="8.6" rx="1.4" stroke="#5a67d8" stroke-width="1.1" fill="#dfe3fb"/><rect x="2.3" y="5.2" width="8.6" height="8.6" rx="1.4" stroke="#5a67d8" stroke-width="1.1" fill="#dfe3fb"/><path d="M4.6 9.5 H8.6" stroke="#5a67d8" stroke-width="1.3" fill="none" stroke-linecap="round" stroke-linejoin="round" /></svg>
<div class="r" style="left:461px;top:645px;width:1px;height:17px;background:#cfd6d6;"></div>
<svg class="ic" style="left:470.0px;top:644.0px;width:18px;height:18px;" viewBox="0 0 16 16"><rect x="2.9" y="5.5" width="7.6" height="8.6" rx="1.3" fill="#dfe3fb" stroke="#5a67d8" stroke-width="1.1"/><rect x="4.8" y="1.7" width="7.6" height="9" rx="1.3" fill="#fbd3d3" stroke="#d64545" stroke-width="1.1"/><path d="M4.8 8.8 H12.4" stroke="#d64545" stroke-width="1.0" fill="none" stroke-linecap="round" stroke-linejoin="round" /><circle cx="11.6" cy="12.3" r="3" fill="#444" stroke="#fff" stroke-width="0.6"/><path d="M11.6 10.7 V13.9 M10 12.3 H13.2" stroke="#fff" stroke-width="1.0" fill="none" stroke-linecap="round" stroke-linejoin="round" /></svg>
<div class="r" style="left:495px;top:645px;width:1px;height:17px;background:#cfd6d6;"></div>
<svg class="ic" style="left:503.0px;top:644.0px;width:18px;height:18px;" viewBox="0 0 16 16"><path d="M5.6 4 L7.6 2.9 L11.6 5.6 L11.6 9.8 L7.6 12.9 L5.8 11.6 L5.8 9.1 L8.6 7.6" stroke="#a8781c" stroke-width="1.9" fill="none" stroke-linecap="round" stroke-linejoin="round" /></svg>
<svg class="ic" style="left:529.0px;top:644.0px;width:18px;height:18px;" viewBox="0 0 16 16"><rect x="2.5" y="2.5" width="11" height="11" rx="1.2" stroke="#5a67d8" stroke-width="1.1" fill="#dfe3fb"/><path d="M4.5 5 H7 L8.5 7 H11.5 M4.5 7.5 H6 L8 10 H11.5 M6.5 10.5 H9" stroke="#5a67d8" stroke-width="0.8" fill="none" stroke-linecap="round" stroke-linejoin="round" /></svg>
<svg class="ic" style="left:555.0px;top:644.0px;width:18px;height:18px;" viewBox="0 0 16 16"><path d="M8 1.2 L14.8 8 L8 14.8 L1.2 8 Z" fill="#1c8a2c"/><rect x="6.3" y="4.6" width="3.4" height="6.8" rx="0.9" fill="#4a4f50" stroke="#e8f5e8" stroke-width="0.8"/></svg>
<div class="r" style="left:581px;top:645px;width:1px;height:17px;background:#cfd6d6;"></div>
<svg class="ic" style="left:589.0px;top:644.0px;width:18px;height:18px;" viewBox="0 0 16 16"><rect x="2.5" y="6" width="7.6" height="8.3" rx="1.3" fill="#dfe3fb" stroke="#5a67d8" stroke-width="1.1"/><path d="M2.5 12.4 H8" stroke="#5a67d8" stroke-width="1.0" fill="none" stroke-linecap="round" stroke-linejoin="round" /><rect x="4.3" y="3" width="7.6" height="8.8" rx="1.3" fill="#fbd3d3" stroke="#d64545" stroke-width="1.1"/><path d="M4.3 9.8 H11.9" stroke="#d64545" stroke-width="1.0" fill="none" stroke-linecap="round" stroke-linejoin="round" /><rect x="10.2" y="0.8" width="5" height="6.2" fill="#fff"/><path d="M12.6 1 V6" stroke="#333" stroke-width="1.2" fill="none" stroke-linecap="round" stroke-linejoin="round" /><path d="M10.6 4.2 L12.6 6.8 L14.6 4.2 Z" fill="#333"/></svg>
<svg class="ic" style="left:611.0px;top:648.0px;width:12px;height:12px;" viewBox="0 0 16 16"><path d="M4.6 6.2 L8 9.6 L11.4 6.2" stroke="#4c5456" stroke-width="1.4" fill="none" stroke-linecap="round" stroke-linejoin="round" /></svg>
<div class="r" style="left:375px;top:668.5px;width:287px;height:1.0px;background:#d6dedd;"></div>
<div class="r" style="left:379px;top:673px;width:281px;height:25px;background:#eceeed;border:1px solid #dbe1e0;box-sizing:border-box;border-radius:5px;"></div>
<svg class="ic" style="left:385.0px;top:678.5px;width:15px;height:15px;" viewBox="0 0 16 16"><circle cx="7" cy="7" r="3.8" stroke="#a0a6a8" stroke-width="1.1" fill="none"/><path d="M10 10 L13 13" stroke="#a0a6a8" stroke-width="1.1" fill="none" stroke-linecap="round" stroke-linejoin="round" /></svg>
<div class="t" style="top:675.5px;font-size:11.85px;color:#6c7082;line-height:20px;left:412px;">Искать в библиотеках...</div>
<svg class="ic" style="left:380.5px;top:710.5px;width:15px;height:15px;" viewBox="0 0 16 16"><path d="M5.8 3.6 L10.4 8 L5.8 12.4" stroke="#6f7a7c" stroke-width="1.2" fill="none" stroke-linecap="round" stroke-linejoin="round" /></svg>
<svg class="ic" style="left:400.0px;top:709.0px;width:18px;height:18px;" viewBox="0 0 16 16"><rect x="2.9" y="4.9" width="8.2" height="9.4" rx="1.4" fill="#dfe3fb" stroke="#5a67d8" stroke-width="1.1"/><path d="M2.9 12 H9" stroke="#5a67d8" stroke-width="1.0" fill="none" stroke-linecap="round" stroke-linejoin="round" /><rect x="5" y="1.7" width="8" height="9.6" rx="1.4" fill="#fbd3d3" stroke="#d64545" stroke-width="1.1"/><path d="M5 9.3 H13" stroke="#d64545" stroke-width="1.0" fill="none" stroke-linecap="round" stroke-linejoin="round" /></svg>
<div class="t" style="top:708.0px;font-size:11.7px;color:#585a6b;line-height:20px;left:427px;">Библиотека</div>
<svg class="ic" style="left:380.5px;top:738.1px;width:15px;height:15px;" viewBox="0 0 16 16"><path d="M5.8 3.6 L10.4 8 L5.8 12.4" stroke="#6f7a7c" stroke-width="1.2" fill="none" stroke-linecap="round" stroke-linejoin="round" /></svg>
<svg class="ic" style="left:400.0px;top:736.6px;width:18px;height:18px;" viewBox="0 0 16 16"><rect x="2.9" y="4.9" width="8.2" height="9.4" rx="1.4" fill="#dfe3fb" stroke="#5a67d8" stroke-width="1.1"/><path d="M2.9 12 H9" stroke="#5a67d8" stroke-width="1.0" fill="none" stroke-linecap="round" stroke-linejoin="round" /><rect x="5" y="1.7" width="8" height="9.6" rx="1.4" fill="#fbd3d3" stroke="#d64545" stroke-width="1.1"/><path d="M5 9.3 H13" stroke="#d64545" stroke-width="1.0" fill="none" stroke-linecap="round" stroke-linejoin="round" /></svg>
<div class="t" style="top:735.6px;font-size:11.7px;color:#585a6b;line-height:20px;left:427px;">Библиотека_EREMEX</div>
<svg class="ic" style="left:380.5px;top:765.7px;width:15px;height:15px;" viewBox="0 0 16 16"><path d="M5.8 3.6 L10.4 8 L5.8 12.4" stroke="#6f7a7c" stroke-width="1.2" fill="none" stroke-linecap="round" stroke-linejoin="round" /></svg>
<svg class="ic" style="left:400.0px;top:764.2px;width:18px;height:18px;" viewBox="0 0 16 16"><rect x="2.9" y="4.9" width="8.2" height="9.4" rx="1.4" fill="#dfe3fb" stroke="#5a67d8" stroke-width="1.1"/><path d="M2.9 12 H9" stroke="#5a67d8" stroke-width="1.0" fill="none" stroke-linecap="round" stroke-linejoin="round" /><rect x="5" y="1.7" width="8" height="9.6" rx="1.4" fill="#fbd3d3" stroke="#d64545" stroke-width="1.1"/><path d="M5 9.3 H13" stroke="#d64545" stroke-width="1.0" fill="none" stroke-linecap="round" stroke-linejoin="round" /></svg>
<div class="t" style="top:763.2px;font-size:11.7px;color:#585a6b;line-height:20px;left:427px;">Демо библиотека</div>
<div class="r" style="left:372px;top:1038.5px;width:1894px;height:1.0px;background:#d5dddc;"></div>
<svg class="ic" style="left:389.5px;top:1044.5px;width:15px;height:15px;" viewBox="0 0 16 16"><rect x="2" y="3" width="11" height="10" rx="1.2" stroke="#5a67d8" stroke-width="1.1" fill="#fff"/><path d="M2 6 H13" stroke="#5a67d8" stroke-width="1.0" fill="none" stroke-linecap="round" stroke-linejoin="round" /><path d="M11.8 8.5 L10 11.5 H12.5 L11 14.5" stroke="#a8781c" stroke-width="1.2" fill="none" stroke-linecap="round" stroke-linejoin="round" /></svg>
<div class="t" style="top:1042.0px;font-size:11.7px;color:#585a6b;line-height:20px;left:411px;">Журналы</div>
<svg class="ic" style="left:483.5px;top:1044.5px;width:15px;height:15px;" viewBox="0 0 16 16"><path d="M12.5 6 V4 A1 1 0 0 0 11.5 3 H3 A1 1 0 0 0 2 4 V12 A1 1 0 0 0 3 13 H10.5" stroke="#5a67d8" stroke-width="1.1" fill="none" stroke-linecap="round" stroke-linejoin="round" /><path d="M2 6 H12.5" stroke="#5a67d8" stroke-width="1.0" fill="none" stroke-linecap="round" stroke-linejoin="round" /><path d="M13.3 8 V11.5" stroke="#d64545" stroke-width="1.4" fill="none" stroke-linecap="round" stroke-linejoin="round" /><circle cx="13.3" cy="13.7" r="0.8" fill="#d64545"/></svg>
<div class="t" style="top:1042.0px;font-size:11.7px;color:#585a6b;line-height:20px;left:505px;">Список ошибок</div>
<div class="r" style="left:372px;top:1065px;width:1894px;height:1px;background:#d5dddc;"></div>
<div class="t" style="top:1075.0px;font-size:11.7px;color:#585a6b;line-height:20px;left:380px;">Сетка:</div>
<div class="r" style="left:424.5px;top:1073.2px;width:91.5px;height:23.200000000000045px;background:#eceeed;border-radius:5px;"></div>
<div class="t" style="top:1075.0px;font-size:11.7px;color:#585a6b;line-height:20px;left:439px;">2,5 мм</div>
<svg class="ic" style="left:496.5px;top:1078.5px;width:13px;height:13px;" viewBox="0 0 16 16"><path d="M4.6 6.2 L8 9.6 L11.4 6.2" stroke="#4c5456" stroke-width="1.4" fill="none" stroke-linecap="round" stroke-linejoin="round" /></svg>
<div class="t" style="top:1075.0px;font-size:11.7px;color:#585a6b;line-height:20px;left:1931px;">X</div>
<div class="r" style="left:1949px;top:1073px;width:53px;height:24px;background:#fff;border:1px solid #d3dbda;box-sizing:border-box;border-radius:5px;"></div>
<div class="t" style="top:1075.0px;font-size:11.2px;color:#585a6b;line-height:20px;left:1956.5px;">-117,5</div>
<div class="t" style="top:1075.0px;font-size:11.7px;color:#585a6b;line-height:20px;left:2010px;">Y</div>
<div class="r" style="left:2027px;top:1073px;width:53px;height:24px;background:#fff;border:1px solid #d3dbda;box-sizing:border-box;border-radius:5px;"></div>
<div class="t" style="top:1075.0px;font-size:11.4px;color:#585a6b;line-height:20px;left:2034px;">57,5</div>
<div class="t" style="top:1075.0px;font-size:11.7px;color:#585a6b;line-height:20px;left:2088px;">Масштаб</div>
<div class="r" style="left:2146px;top:1073px;width:111px;height:24px;background:#eceeed;border-radius:5px;"></div>
<svg class="ic" style="left:2153.0px;top:1078.0px;width:14px;height:14px;" viewBox="0 0 16 16"><path d="M2 2 L5.8 5.8 M5.8 3 V5.8 H3 M14 2 L10.2 5.8 M10.2 3 V5.8 H13 M2 14 L5.8 10.2 M5.8 13 V10.2 H3 M14 14 L10.2 10.2 M10.2 13 V10.2 H13" stroke="#5a67d8" stroke-width="1.2" fill="none" stroke-linecap="round" stroke-linejoin="round" /></svg>
<div class="t" style="top:1075.5px;font-size:11.7px;color:#585a6b;line-height:20px;left:2180px;">64%</div>
<svg class="ic" style="left:2236.5px;top:1078.5px;width:13px;height:13px;" viewBox="0 0 16 16"><path d="M4.6 6.2 L8 9.6 L11.4 6.2" stroke="#4c5456" stroke-width="1.4" fill="none" stroke-linecap="round" stroke-linejoin="round" /></svg>
<div class="r" style="left:2005px;top:165px;width:1px;height:873px;background:#d9e0df;"></div>
<svg class="ic" style="left:2004.5px;top:172.5px;width:17px;height:17px;" viewBox="0 0 16 16"><path d="M8 1.6 L14.3 6.2 L11.9 13.6 H4.1 L1.7 6.2 Z" stroke="#d05a5a" stroke-width="1.1" fill="none" stroke-linecap="round" stroke-linejoin="round" /><path d="M5.2 6 H10.8" stroke="#c23c3c" stroke-width="1.1" fill="none" stroke-linecap="round" stroke-linejoin="round" /><path d="M5.6 7.2 H10.4 L8.6 9.2 L10.6 12 L8 10.4 L5.4 12 L7.4 9.2 Z" fill="#c23c3c"/></svg>
<div class="t" style="top:171.0px;font-size:11.7px;color:#585a6b;line-height:20px;left:2026px;">Стандарты</div>
<svg class="ic" style="left:2216.5px;top:174.5px;width:13px;height:13px;" viewBox="0 0 16 16"><path d="M7.7 1.6 L13.6 5.2 L10.8 7.2 L8.5 5.7 Z" fill="#3c4a4c"/><path d="M2.5 2.9 L13.1 13.2" stroke="#3c4a4c" stroke-width="1.15" fill="none" stroke-linecap="round" stroke-linejoin="round" /><path d="M3.6 8.4 L7.1 9.1" stroke="#3c4a4c" stroke-width="1.5" fill="none" stroke-linecap="round" stroke-linejoin="round" /><path d="M7.1 9.5 L4 14.4" stroke="#3c4a4c" stroke-width="1.5" fill="none" stroke-linecap="round" stroke-linejoin="round" /></svg>
<svg class="ic" style="left:2242.5px;top:174.5px;width:13px;height:13px;" viewBox="0 0 16 16"><path d="M3.6 3.6 L12.4 12.4 M12.4 3.6 L3.6 12.4" stroke="#3c4a4c" stroke-width="1.15" fill="none" stroke-linecap="round" stroke-linejoin="round" /></svg>
<svg class="ic" style="left:2014.0px;top:206.0px;width:18px;height:18px;" viewBox="0 0 16 16"><path d="M3 13.8 V2.2 H8.2 L11.6 5.6 V8 M3 13.8 H7" stroke="#5a67d8" stroke-width="1.15" fill="#dfe3fb" stroke-linecap="round" stroke-linejoin="round" /><path d="M3.2 2.4 H8 V5.8 H11.4 V13.6 H3.2 Z" fill="#dfe3fb"/><path d="M3 13.8 V2.2 H8.2 L11.6 5.6 V7.5 M3 13.8 H6.5" stroke="#5a67d8" stroke-width="1.15" fill="none" stroke-linecap="round" stroke-linejoin="round" /><path d="M8.2 2.2 V5.6 H11.6" stroke="#5a67d8" stroke-width="1.0" fill="none" stroke-linecap="round" stroke-linejoin="round" /><path d="M6.3 11.3 Q10 7.4 13.9 11.3 Q10 15 6.3 11.3 Z" stroke="#4a5254" stroke-width="1.0" fill="#fff" stroke-linecap="round" stroke-linejoin="round" /><circle cx="10.1" cy="11.2" r="1.4" fill="#4a5254"/></svg>
<svg class="ic" style="left:2040.0px;top:206.0px;width:18px;height:18px;" viewBox="0 0 16 16"><path d="M13.3 6.8 A5.5 5.5 0 0 0 3.2 5.6" stroke="#4a5254" stroke-width="1.15" fill="none" stroke-linecap="round" stroke-linejoin="round" /><path d="M2.7 9.2 A5.5 5.5 0 0 0 12.8 10.4" stroke="#4a5254" stroke-width="1.15" fill="none" stroke-linecap="round" stroke-linejoin="round" /><path d="M10.6 7.2 L14.2 7.6 L13.8 3.8 Z" fill="#4a5254"/><path d="M5.4 8.8 L1.8 8.4 L2.2 12.2 Z" fill="#4a5254"/></svg>
<svg class="ic" style="left:2066.0px;top:206.0px;width:18px;height:18px;" viewBox="0 0 16 16"><rect x="5.2" y="2.3" width="8.6" height="8.6" rx="1.4" stroke="#5a67d8" stroke-width="1.1" fill="#dfe3fb"/><rect x="2.3" y="5.2" width="8.6" height="8.6" rx="1.4" stroke="#5a67d8" stroke-width="1.1" fill="#dfe3fb"/><path d="M4.6 9.5 H8.6" stroke="#5a67d8" stroke-width="1.3" fill="none" stroke-linecap="round" stroke-linejoin="round" /></svg>
<div class="r" style="left:2091px;top:207px;width:1px;height:17px;background:#cfd6d6;"></div>
<svg class="ic" style="left:2099.0px;top:206.0px;width:18px;height:18px;" viewBox="0 0 16 16"><path d="M5.5 3.2 H4.6 A1.6 1.6 0 0 0 3 4.8 V12.6 A1.6 1.6 0 0 0 4.6 14.2 H9 A1.6 1.6 0 0 0 10.6 12.6 V11.8" stroke="#5a67d8" stroke-width="1.1" fill="none" stroke-linecap="round" stroke-linejoin="round" /><path d="M9.6 2.2 H6.6 A1.3 1.3 0 0 0 5.3 3.5 V11 A1.3 1.3 0 0 0 6.6 12.3 H11 A1.3 1.3 0 0 0 12.3 11 V8.6" stroke="#5a67d8" stroke-width="1.15" fill="#dfe3fb" stroke-linecap="round" stroke-linejoin="round" /><path d="M9.6 2.2 V5 H11" stroke="#5a67d8" stroke-width="1.0" fill="none" stroke-linecap="round" stroke-linejoin="round" /><path d="M13 1 V5" stroke="#3c4a4c" stroke-width="1.2" fill="none" stroke-linecap="round" stroke-linejoin="round" /><path d="M11 3.8 L13 6.6 L15 3.8 Z" fill="#3c4a4c"/></svg>
<svg class="ic" style="left:2125.0px;top:206.0px;width:18px;height:18px;" viewBox="0 0 16 16"><path d="M5.5 3.2 H4.6 A1.6 1.6 0 0 0 3 4.8 V12.6 A1.6 1.6 0 0 0 4.6 14.2 H9 A1.6 1.6 0 0 0 10.6 12.6 V11.8" stroke="#5a67d8" stroke-width="1.1" fill="none" stroke-linecap="round" stroke-linejoin="round" /><path d="M9.6 2.2 H6.6 A1.3 1.3 0 0 0 5.3 3.5 V11 A1.3 1.3 0 0 0 6.6 12.3 H11 A1.3 1.3 0 0 0 12.3 11 V8.6" stroke="#5a67d8" stroke-width="1.15" fill="#dfe3fb" stroke-linecap="round" stroke-linejoin="round" /><path d="M9.6 2.2 V5 H11" stroke="#5a67d8" stroke-width="1.0" fill="none" stroke-linecap="round" stroke-linejoin="round" /><path d="M13 2.6 V6.8" stroke="#3c4a4c" stroke-width="1.2" fill="none" stroke-linecap="round" stroke-linejoin="round" /><path d="M11 3.8 L13 1 L15 3.8 Z" fill="#3c4a4c"/></svg>
<div class="r" style="left:2008px;top:231px;width:254px;height:1px;background:#d6dedd;"></div>
<div class="r" style="left:2010px;top:236px;width:249px;height:25px;background:#eceeed;border:1px solid #dbe1e0;box-sizing:border-box;border-radius:5px;"></div>
<svg class="ic" style="left:2017.0px;top:241.5px;width:15px;height:15px;" viewBox="0 0 16 16"><circle cx="7" cy="7" r="3.8" stroke="#a0a6a8" stroke-width="1.1" fill="none"/><path d="M10 10 L13 13" stroke="#a0a6a8" stroke-width="1.1" fill="none" stroke-linecap="round" stroke-linejoin="round" /></svg>
<div class="t" style="top:238.5px;font-size:11.85px;color:#6c7082;line-height:20px;left:2042px;">Искать в стандартах...</div>
<div class="r" style="left:2010px;top:268px;width:249px;height:26px;background:#eceeed;border-radius:5px;"></div>
<svg class="ic" style="left:2031.0px;top:272.0px;width:18px;height:18px;" viewBox="0 0 16 16"><circle cx="3.8" cy="3.2" r="1.8" stroke="#5a67d8" stroke-width="1.1" fill="none"/><path d="M3.8 5 V11 Q3.8 12.3 5.1 12.3 H9.3 M3.8 7.4 H9.3" stroke="#444" stroke-width="1.0" fill="none" stroke-linecap="round" stroke-linejoin="round" /><circle cx="11.2" cy="7.4" r="1.8" stroke="#5a67d8" stroke-width="1.1" fill="none"/><circle cx="11.2" cy="12.3" r="1.8" stroke="#5a67d8" stroke-width="1.1" fill="none"/></svg>
<div class="t" style="top:271.0px;font-size:11.7px;color:#585a6b;line-height:20px;left:2057px;">Семейства компонентов</div>
<svg class="ic" style="left:2010.5px;top:301.1px;width:15px;height:15px;" viewBox="0 0 16 16"><path d="M5.8 3.6 L10.4 8 L5.8 12.4" stroke="#6f7a7c" stroke-width="1.2" fill="none" stroke-linecap="round" stroke-linejoin="round" /></svg>
<svg class="ic" style="left:2031.0px;top:299.6px;width:18px;height:18px;" viewBox="0 0 16 16"><path d="M4 3.6 V2.4 H7.6 L8.8 3.6 H12.8 V6" stroke="#a8781c" stroke-width="1.0" fill="none" stroke-linecap="round" stroke-linejoin="round" /><path d="M2.5 12.6 V3.9 H6 L7.4 5.4 H12.9 V7 M2.5 12.6 H7" stroke="#a8781c" stroke-width="1.15" fill="#fdf7e6" stroke-linecap="round" stroke-linejoin="round" /><rect x="7.6" y="7.6" width="7" height="7" rx="1" stroke="#5a67d8" stroke-width="1.1" fill="#dfe3fb"/><text x="11.1" y="13.5" font-size="6" font-family="Liberation Sans,sans-serif" font-weight="700" text-anchor="middle" fill="#444">S</text></svg>
<div class="t" style="top:298.6px;font-size:11.7px;color:#585a6b;line-height:20px;left:2057px;">УГО</div>
<svg class="ic" style="left:2010.5px;top:328.6px;width:15px;height:15px;" viewBox="0 0 16 16"><path d="M5.8 3.6 L10.4 8 L5.8 12.4" stroke="#6f7a7c" stroke-width="1.2" fill="none" stroke-linecap="round" stroke-linejoin="round" /></svg>
<svg class="ic" style="left:2031.0px;top:327.1px;width:18px;height:18px;" viewBox="0 0 16 16"><path d="M2.5 13.5 V2.5 H13.5" stroke="#a8781c" stroke-width="1.6" fill="none" stroke-linecap="round" stroke-linejoin="round" /><path d="M5 5 H13.5 M5 5 V13.5" stroke="#a8781c" stroke-width="0.9" fill="none" stroke-linecap="round" stroke-linejoin="round" /><path d="M7.5 7 V14 M11 7 V14 M6 9 H14 M6 12 H14" stroke="#444" stroke-width="1.0" fill="none" stroke-linecap="round" stroke-linejoin="round" /></svg>
<div class="t" style="top:326.1px;font-size:11.7px;color:#585a6b;line-height:20px;left:2057px;">Сетки</div>
<svg class="ic" style="left:2010.5px;top:356.1px;width:15px;height:15px;" viewBox="0 0 16 16"><path d="M5.8 3.6 L10.4 8 L5.8 12.4" stroke="#6f7a7c" stroke-width="1.2" fill="none" stroke-linecap="round" stroke-linejoin="round" /></svg>
<svg class="ic" style="left:2031.0px;top:354.6px;width:18px;height:18px;" viewBox="0 0 16 16"><rect x="2" y="5.5" width="5" height="4.6" rx="0.8" stroke="#5a67d8" stroke-width="1.1" fill="#dfe3fb"/><rect x="8.8" y="2" width="5" height="4.6" rx="0.8" stroke="#5a67d8" stroke-width="1.1" fill="#dfe3fb"/><path d="M4.5 10.1 V13.3 M2.3 13.5 H6.8 M11.3 6.6 V9.8 M9.1 10 H13.6" stroke="#5a67d8" stroke-width="1.1" fill="none" stroke-linecap="round" stroke-linejoin="round" /></svg>
<div class="t" style="top:353.6px;font-size:11.7px;color:#585a6b;line-height:20px;left:2057px;">Схемные порты</div>
<svg class="ic" style="left:2010.5px;top:383.7px;width:15px;height:15px;" viewBox="0 0 16 16"><path d="M5.8 3.6 L10.4 8 L5.8 12.4" stroke="#6f7a7c" stroke-width="1.2" fill="none" stroke-linecap="round" stroke-linejoin="round" /></svg>
<svg class="ic" style="left:2031.0px;top:382.2px;width:18px;height:18px;" viewBox="0 0 16 16"><path d="M3.5 2.5 H9.5 L12.5 5.5 V13.5 H3.5 Z" stroke="#5a67d8" stroke-width="1.1" fill="#dfe3fb" stroke-linecap="round" stroke-linejoin="round" /><path d="M9.5 2.5 V5.5 H12.5" stroke="#5a67d8" stroke-width="0.9" fill="none" stroke-linecap="round" stroke-linejoin="round" /><path d="M6.5 11.5 H10.5 V8 M6.5 9.5 V11.5" stroke="#a8781c" stroke-width="1.1" fill="none" stroke-linecap="round" stroke-linejoin="round" /></svg>
<div class="t" style="top:381.2px;font-size:11.7px;color:#585a6b;line-height:20px;left:2057px;">Форматы и штампы</div>
<svg class="ic" style="left:2031.0px;top:409.8px;width:18px;height:18px;" viewBox="0 0 16 16"><path d="M2.6 11.4 L9.2 8.0 L13.4 10.0 L6.8 13.4 Z" stroke="#2f9e44" stroke-width="1.0" fill="#bfe6bf" stroke-linecap="round" stroke-linejoin="round" /><path d="M2.6 8.7 L9.2 5.300000000000001 L13.4 7.3 L6.8 10.7 Z" stroke="#5a67d8" stroke-width="1.0" fill="#cfd5f8" stroke-linecap="round" stroke-linejoin="round" /><path d="M2.6 6 L9.2 2.6 L13.4 4.6 L6.8 8 Z" stroke="#d64545" stroke-width="1.0" fill="#f9c9c9" stroke-linecap="round" stroke-linejoin="round" /></svg>
<div class="t" style="top:408.8px;font-size:11.7px;color:#585a6b;line-height:20px;left:2057px;">Классы слоев</div>
<svg class="ic" style="left:2010.5px;top:438.8px;width:15px;height:15px;" viewBox="0 0 16 16"><path d="M5.8 3.6 L10.4 8 L5.8 12.4" stroke="#6f7a7c" stroke-width="1.2" fill="none" stroke-linecap="round" stroke-linejoin="round" /></svg>
<svg class="ic" style="left:2031.0px;top:437.3px;width:18px;height:18px;" viewBox="0 0 16 16"><path d="M2.5 4.5 V13 H13.5 V5.5 H7.5 L6 4 H2.5 Z" stroke="#a8781c" stroke-width="1.1" fill="#f6e3a8" stroke-linecap="round" stroke-linejoin="round" /><path d="M2.5 7 H13.5" stroke="#a8781c" stroke-width="0.9" fill="none" stroke-linecap="round" stroke-linejoin="round" /></svg>
<div class="t" style="top:436.3px;font-size:11.7px;color:#585a6b;line-height:20px;left:2057px;">Шаблоны КД</div>
<svg class="ic" style="left:2031.0px;top:464.9px;width:18px;height:18px;" viewBox="0 0 16 16"><path d="M2.6 11.4 L9.2 8.0 L13.4 10.0 L6.8 13.4 Z" stroke="#a8781c" stroke-width="1.0" fill="#f6e3a8" stroke-linecap="round" stroke-linejoin="round" /><path d="M2.6 8.7 L9.2 5.300000000000001 L13.4 7.3 L6.8 10.7 Z" stroke="#a8781c" stroke-width="1.0" fill="#f6e3a8" stroke-linecap="round" stroke-linejoin="round" /><path d="M2.6 6 L9.2 2.6 L13.4 4.6 L6.8 8 Z" stroke="#2f9e44" stroke-width="1.0" fill="#bfe6bf" stroke-linecap="round" stroke-linejoin="round" /></svg>
<div class="t" style="top:463.9px;font-size:11.7px;color:#585a6b;line-height:20px;left:2057px;">Материалы</div>
<svg class="ic" style="left:2010.5px;top:493.9px;width:15px;height:15px;" viewBox="0 0 16 16"><path d="M5.8 3.6 L10.4 8 L5.8 12.4" stroke="#6f7a7c" stroke-width="1.2" fill="none" stroke-linecap="round" stroke-linejoin="round" /></svg>
<svg class="ic" style="left:2031.0px;top:492.4px;width:18px;height:18px;" viewBox="0 0 16 16"><rect x="2" y="2" width="12" height="12" rx="1.5" stroke="#2f9e44" stroke-width="1.1" fill="#eaf6ea"/><rect x="5" y="5" width="6" height="6" rx="1" stroke="#444" stroke-width="1" fill="none"/><path d="M6.5 3.5 V5 M9.5 3.5 V5 M6.5 11 V12.5 M9.5 11 V12.5 M3.5 6.5 H5 M3.5 9.5 H5 M11 6.5 H12.5 M11 9.5 H12.5" stroke="#444" stroke-width="0.8" fill="none" stroke-linecap="round" stroke-linejoin="round" /></svg>
<div class="t" style="top:491.4px;font-size:11.7px;color:#585a6b;line-height:20px;left:2057px;">Корпуса</div>
<svg class="ic" style="left:2010.5px;top:521.5px;width:15px;height:15px;" viewBox="0 0 16 16"><path d="M5.8 3.6 L10.4 8 L5.8 12.4" stroke="#6f7a7c" stroke-width="1.2" fill="none" stroke-linecap="round" stroke-linejoin="round" /></svg>
<svg class="ic" style="left:2031.0px;top:520.0px;width:18px;height:18px;" viewBox="0 0 16 16"><rect x="2.5" y="2.5" width="2.7" height="2.7" rx="0.7" stroke="#2f9e44" stroke-width="1.05" fill="none"/><rect x="6.8" y="2.5" width="2.7" height="2.7" rx="0.7" stroke="#2f9e44" stroke-width="1.05" fill="none"/><rect x="11.2" y="2.7" width="2.1" height="2.1" rx="0.7" stroke="#2f9e44" stroke-width="1.05" fill="none"/><rect x="2.5" y="6.8" width="2.7" height="2.7" rx="0.7" stroke="#d64545" stroke-width="1.05" fill="none"/><rect x="6.8" y="6.8" width="2.7" height="2.7" rx="0.7" stroke="#2f9e44" stroke-width="1.05" fill="none"/><rect x="2.5" y="11.1" width="2.7" height="2.7" rx="0.7" stroke="#2f9e44" stroke-width="1.05" fill="none"/></svg>
<div class="t" style="top:519.0px;font-size:11.7px;color:#585a6b;line-height:20px;left:2057px;">Правила</div>
<svg class="ic" style="left:2010.5px;top:549.0px;width:15px;height:15px;" viewBox="0 0 16 16"><path d="M5.8 3.6 L10.4 8 L5.8 12.4" stroke="#6f7a7c" stroke-width="1.2" fill="none" stroke-linecap="round" stroke-linejoin="round" /></svg>
<svg class="ic" style="left:2031.0px;top:547.5px;width:18px;height:18px;" viewBox="0 0 16 16"><text x="2" y="9.5" font-size="9" font-family="Liberation Sans,sans-serif" fill="#444">A</text><path d="M8 2.5 L11 8 M6.5 8.5 L12.5 6" stroke="#5a67d8" stroke-width="1.0" fill="none" stroke-linecap="round" stroke-linejoin="round" /><path d="M3 13.5 Q5 9.5 7 11.5 T13 10.5 L13.5 13.5 Z" stroke="#d64545" stroke-width="1.0" fill="#f7c9c9" stroke-linecap="round" stroke-linejoin="round" /><path d="M9 10 L12 8.5 L14 12" stroke="#2f9e44" stroke-width="1.0" fill="#cdeccd" stroke-linecap="round" stroke-linejoin="round" /></svg>
<div class="t" style="top:546.5px;font-size:11.7px;color:#585a6b;line-height:20px;left:2057px;">Таблицы стилей</div>
<svg class="ic" style="left:2010.5px;top:576.5px;width:15px;height:15px;" viewBox="0 0 16 16"><path d="M5.8 3.6 L10.4 8 L5.8 12.4" stroke="#6f7a7c" stroke-width="1.2" fill="none" stroke-linecap="round" stroke-linejoin="round" /></svg>
<svg class="ic" style="left:2031.0px;top:575.0px;width:18px;height:18px;" viewBox="0 0 16 16"><path d="M2.6 11.4 L9.2 8.0 L13.4 10.0 L6.8 13.4 Z" stroke="#2f9e44" stroke-width="1.0" fill="#bfe6bf" stroke-linecap="round" stroke-linejoin="round" /><path d="M2.6 8.7 L9.2 5.300000000000001 L13.4 7.3 L6.8 10.7 Z" stroke="#5a67d8" stroke-width="1.0" fill="#cfd5f8" stroke-linecap="round" stroke-linejoin="round" /><path d="M2.6 6 L9.2 2.6 L13.4 4.6 L6.8 8 Z" stroke="#d64545" stroke-width="1.0" fill="#f9c9c9" stroke-linecap="round" stroke-linejoin="round" /></svg>
<div class="t" style="top:574.0px;font-size:11.7px;color:#585a6b;line-height:20px;left:2057px;">Шаблоны слоев платы</div>
<div class="r" style="left:2254px;top:278px;width:3px;height:244px;background:#c9d1d1;border-radius:1px;"></div>
<div class="r" style="left:2006px;top:602px;width:260px;height:1px;background:#d5dddc;"></div>
<svg class="ic" style="left:2005.0px;top:611.0px;width:16px;height:16px;" viewBox="0 0 16 16"><path d="M2 4 H14 M2 8 H14 M2 12 H14" stroke="#444" stroke-width="1.0" fill="none" stroke-linecap="round" stroke-linejoin="round" /><circle cx="6" cy="4" r="1.6" stroke="#5a67d8" stroke-width="1" fill="#fff"/><circle cx="10.5" cy="8" r="1.6" stroke="#5a67d8" stroke-width="1" fill="#fff"/><circle cx="5" cy="12" r="1.6" stroke="#5a67d8" stroke-width="1" fill="#fff"/></svg>
<div class="t" style="top:609.0px;font-size:11.7px;color:#585a6b;line-height:20px;left:2026px;">Свойства</div>
<svg class="ic" style="left:2242.5px;top:612.5px;width:13px;height:13px;" viewBox="0 0 16 16"><path d="M7.7 1.6 L13.6 5.2 L10.8 7.2 L8.5 5.7 Z" fill="#3c4a4c"/><path d="M2.5 2.9 L13.1 13.2" stroke="#3c4a4c" stroke-width="1.15" fill="none" stroke-linecap="round" stroke-linejoin="round" /><path d="M3.6 8.4 L7.1 9.1" stroke="#3c4a4c" stroke-width="1.5" fill="none" stroke-linecap="round" stroke-linejoin="round" /><path d="M7.1 9.5 L4 14.4" stroke="#3c4a4c" stroke-width="1.5" fill="none" stroke-linecap="round" stroke-linejoin="round" /></svg>
<div class="t" style="top:638.0px;font-size:11.25px;color:#2b2d3a;line-height:20px;font-weight:700;left:1833px;width:600px;text-align:center;">Фильтр ( Режим выбора )</div>
<svg class="ic" style="left:2015.5px;top:668.5px;width:13px;height:13px;" viewBox="0 0 16 16"><circle cx="7" cy="7" r="4.2" stroke="#8c9294" stroke-width="1.1" fill="none"/><path d="M10.2 10.2 L13.5 13.5" stroke="#8c9294" stroke-width="1.1" fill="none" stroke-linecap="round" stroke-linejoin="round" /></svg>
<div class="t" style="top:665.0px;font-size:11.7px;color:#6c7082;line-height:20px;left:2035px;">Поиск</div>
<div class="r" style="left:2008px;top:692px;width:254px;height:1px;background:#dfe5e4;"></div>
<svg class="ic" style="left:2015.0px;top:702.0px;width:14px;height:14px;" viewBox="0 0 16 16"><path d="M3.6 5.8 L8 10.4 L12.4 5.8" stroke="#6f7a7c" stroke-width="1.2" fill="none" stroke-linecap="round" stroke-linejoin="round" /></svg>
<div class="t" style="top:699.0px;font-size:11.5px;color:#3a3d4c;line-height:20px;font-weight:700;left:2035px;">Выбор</div>
<div class="t" style="top:726.0px;font-size:11.7px;color:#6c7082;line-height:20px;left:2035px;">[ Все объекты ]</div>
<svg class="ic" style="left:2189.2px;top:727.7px;width:16.6px;height:16.6px;" viewBox="0 0 16 16"><rect x="1" y="1" width="14" height="14" rx="2" fill="#0f5b5c"/><path d="M4 8.2 L7 11 L12 5" stroke="#fff" stroke-width="1.5" fill="none" stroke-linecap="round" stroke-linejoin="round" /></svg>
<div class="r" style="left:2133px;top:720px;width:1px;height:31px;background:#eef1f1;"></div>
<div class="r" style="left:2008px;top:755px;width:254px;height:1px;background:#e6ebea;"></div>
<svg class="ic" style="left:2015.0px;top:765.0px;width:14px;height:14px;" viewBox="0 0 16 16"><path d="M3.6 5.8 L8 10.4 L12.4 5.8" stroke="#6f7a7c" stroke-width="1.2" fill="none" stroke-linecap="round" stroke-linejoin="round" /></svg>
<div class="t" style="top:762.0px;font-size:11.5px;color:#3a3d4c;line-height:20px;font-weight:700;left:2035px;">Фильтр</div>
<div class="r" style="left:2133px;top:784px;width:1px;height:203px;background:#eef1f1;"></div>
<div class="t" style="top:788.0px;font-size:11.7px;color:#6c7082;line-height:20px;left:2035px;">Атрибут</div>
<svg class="ic" style="left:2189.2px;top:789.7px;width:16.6px;height:16.6px;" viewBox="0 0 16 16"><rect x="1" y="1" width="14" height="14" rx="2" fill="#0f5b5c"/><path d="M4 8.2 L7 11 L12 5" stroke="#fff" stroke-width="1.5" fill="none" stroke-linecap="round" stroke-linejoin="round" /></svg>
<div class="t" style="top:817.4px;font-size:11.7px;color:#6c7082;line-height:20px;left:2035px;">Встроенный бл...</div>
<svg class="ic" style="left:2189.2px;top:819.1px;width:16.6px;height:16.6px;" viewBox="0 0 16 16"><rect x="1" y="1" width="14" height="14" rx="2" fill="#0f5b5c"/><path d="M4 8.2 L7 11 L12 5" stroke="#fff" stroke-width="1.5" fill="none" stroke-linecap="round" stroke-linejoin="round" /></svg>
<div class="t" style="top:846.8px;font-size:11.7px;color:#6c7082;line-height:20px;left:2035px;">Вход в шину</div>
<svg class="ic" style="left:2189.2px;top:848.5px;width:16.6px;height:16.6px;" viewBox="0 0 16 16"><rect x="1" y="1" width="14" height="14" rx="2" fill="#0f5b5c"/><path d="M4 8.2 L7 11 L12 5" stroke="#fff" stroke-width="1.5" fill="none" stroke-linecap="round" stroke-linejoin="round" /></svg>
<div class="t" style="top:876.2px;font-size:11.7px;color:#6c7082;line-height:20px;left:2035px;">Группа</div>
<svg class="ic" style="left:2189.2px;top:877.9px;width:16.6px;height:16.6px;" viewBox="0 0 16 16"><rect x="1" y="1" width="14" height="14" rx="2" fill="#0f5b5c"/><path d="M4 8.2 L7 11 L12 5" stroke="#fff" stroke-width="1.5" fill="none" stroke-linecap="round" stroke-linejoin="round" /></svg>
<div class="t" style="top:905.6px;font-size:11.7px;color:#6c7082;line-height:20px;left:2035px;">Интегрирован...</div>
<svg class="ic" style="left:2189.2px;top:907.3px;width:16.6px;height:16.6px;" viewBox="0 0 16 16"><rect x="1" y="1" width="14" height="14" rx="2" fill="#0f5b5c"/><path d="M4 8.2 L7 11 L12 5" stroke="#fff" stroke-width="1.5" fill="none" stroke-linecap="round" stroke-linejoin="round" /></svg>
<div class="t" style="top:935.0px;font-size:11.7px;color:#6c7082;line-height:20px;left:2035px;">Компонент</div>
<svg class="ic" style="left:2189.2px;top:936.7px;width:16.6px;height:16.6px;" viewBox="0 0 16 16"><rect x="1" y="1" width="14" height="14" rx="2" fill="#0f5b5c"/><path d="M4 8.2 L7 11 L12 5" stroke="#fff" stroke-width="1.5" fill="none" stroke-linecap="round" stroke-linejoin="round" /></svg>
<div class="t" style="top:964.4px;font-size:11.7px;color:#6c7082;line-height:20px;left:2035px;">Контакт</div>
<svg class="ic" style="left:2189.2px;top:966.1px;width:16.6px;height:16.6px;" viewBox="0 0 16 16"><rect x="1" y="1" width="14" height="14" rx="2" fill="#0f5b5c"/><path d="M4 8.2 L7 11 L12 5" stroke="#fff" stroke-width="1.5" fill="none" stroke-linecap="round" stroke-linejoin="round" /></svg>
<div class="r" style="left:2257.3px;top:707px;width:2.699999999999818px;height:91px;background:#c9d1d1;border-radius:1px;"></div>
<div class="r" style="left:2006px;top:1012px;width:260px;height:26px;background:#eceeed;"></div>
<div class="r" style="left:2006px;top:1012px;width:260px;height:1px;background:#d5dddc;"></div>
<div class="r" style="left:2010px;top:1012px;width:88px;height:26px;background:#fff;"></div>
<div class="r" style="left:2098px;top:1012px;width:1px;height:26px;background:#d5dcdb;"></div>
<div class="r" style="left:2009px;top:1012px;width:1px;height:26px;background:#d5dcdb;"></div>
<svg class="ic" style="left:2016.0px;top:1016.5px;width:17px;height:17px;" viewBox="0 0 16 16"><path d="M2 4 H14 M2 8 H14 M2 12 H14" stroke="#444" stroke-width="1.0" fill="none" stroke-linecap="round" stroke-linejoin="round" /><circle cx="6" cy="4" r="1.6" stroke="#5a67d8" stroke-width="1" fill="#fff"/><circle cx="10.5" cy="8" r="1.6" stroke="#5a67d8" stroke-width="1" fill="#fff"/><circle cx="5" cy="12" r="1.6" stroke="#5a67d8" stroke-width="1" fill="#fff"/></svg>
<div class="t" style="top:1015.0px;font-size:11.7px;color:#585a6b;line-height:20px;left:2038px;">Свойства</div>
<svg class="ic" style="left:2104.0px;top:1015.5px;width:19px;height:19px;" viewBox="0 0 16 16"><path d="M2.6 11.4 L9.2 8.0 L13.4 10.0 L6.8 13.4 Z" stroke="#2f9e44" stroke-width="1.0" fill="#bfe6bf" stroke-linecap="round" stroke-linejoin="round" /><path d="M2.6 8.7 L9.2 5.300000000000001 L13.4 7.3 L6.8 10.7 Z" stroke="#5a67d8" stroke-width="1.0" fill="#cfd5f8" stroke-linecap="round" stroke-linejoin="round" /><path d="M2.6 6 L9.2 2.6 L13.4 4.6 L6.8 8 Z" stroke="#d64545" stroke-width="1.0" fill="#f9c9c9" stroke-linecap="round" stroke-linejoin="round" /></svg>
<div class="t" style="top:1015.0px;font-size:11.7px;color:#585a6b;line-height:20px;left:2127px;">Слои</div>
<div class="r" style="left:672px;top:166px;width:1328px;height:25px;background:#eceeed;"></div>
<div class="r" style="left:672px;top:190px;width:1328px;height:1px;background:#d3dbda;"></div>
<div class="r" style="left:677px;top:166px;width:110px;height:25px;background:#fff;"></div>
<div class="r" style="left:787px;top:166px;width:1px;height:25px;background:#d3dbda;"></div>
<div class="r" style="left:676px;top:166px;width:1px;height:25px;background:#d3dbda;"></div>
<svg class="ic" style="left:682.5px;top:170.5px;width:15px;height:15px;" viewBox="0 0 16 16"><path d="M5 3.5 H4 A2 2 0 0 0 2 5.5 V9.5 A2 2 0 0 0 4 11.5 H5 M11 3.5 H12 A2 2 0 0 1 14 5.5 V9.5 A2 2 0 0 1 12 11.5 H11" stroke="#5a67d8" stroke-width="1.2" fill="none" stroke-linecap="round" stroke-linejoin="round" /><path d="M7 1.5 V7.5 M7 4.5 L9.5 4.5 M4 9 L6.5 11.5 L4 14 Z M6.5 11.5 H9 M9 9.5 V13.5 M9 11.5 H11" stroke="#5a67d8" stroke-width="1.0" fill="none" stroke-linecap="round" stroke-linejoin="round" /></svg>
<div class="t" style="top:168.0px;font-size:11.4px;color:#2b2d3a;line-height:20px;font-weight:700;left:704px;">ddBox-C1</div>
<svg class="ic" style="left:766.5px;top:171.5px;width:13px;height:13px;" viewBox="0 0 16 16"><path d="M3.6 3.6 L12.4 12.4 M12.4 3.6 L3.6 12.4" stroke="#3c4a4c" stroke-width="1.15" fill="none" stroke-linecap="round" stroke-linejoin="round" /></svg>
<svg class="ic" style="left:682.5px;top:203.5px;width:15px;height:15px;" viewBox="0 0 16 16"><circle cx="8" cy="8" r="6.5" stroke="#5a67d8" stroke-width="1.1" fill="none"/><circle cx="8" cy="5" r="0.9" fill="#5a67d8"/><path d="M8 7.3 V11.5" stroke="#5a67d8" stroke-width="1.3" fill="none" stroke-linecap="round" stroke-linejoin="round" /></svg>
<svg class="ic" style="left:710.0px;top:204.0px;width:14px;height:14px;" viewBox="0 0 16 16"><path d="M4.5 2.5 L4.5 12.5 L7.3 10 L12.5 9.3 Z" stroke="#555" stroke-width="1.0" fill="none" stroke-linecap="round" stroke-linejoin="round" /></svg>
<div class="t" style="top:201.0px;font-size:11.7px;color:#585a6b;line-height:20px;left:730px;">Режим выбора</div>
<div class="r" style="left:672px;top:227px;width:1328px;height:2px;background:#dfe5e4;"></div>
<div class="t" style="top:227.5px;font-size:8.5px;color:#7a7e8c;line-height:20px;left:381px;width:600px;text-align:center;">mm</div>
<svg style="left:0;top:0;width:2269px;height:1105px" viewBox="0 0 2269 1105"><path d="M703.0 240V246 M716.7 243V246 M730.5 243V246 M744.3 243V246 M758.1 243V246 M771.9 243V246 M785.7 240V246 M799.5 243V246 M813.3 243V246 M827.1 243V246 M840.9 243V246 M854.7 243V246 M868.5 240V246 M882.2 243V246 M896.0 243V246 M909.8 243V246 M923.6 243V246 M937.4 243V246 M951.2 240V246 M965.0 243V246 M978.8 243V246 M992.6 243V246 M1006.4 243V246 M1020.2 243V246 M1034.0 240V246 M1047.7 243V246 M1061.5 243V246 M1075.3 243V246 M1089.1 243V246 M1102.9 243V246 M1116.7 240V246 M1130.5 243V246 M1144.3 243V246 M1158.1 243V246 M1171.9 243V246 M1185.7 243V246 M1199.5 240V246 M1213.2 243V246 M1227.0 243V246 M1240.8 243V246 M1254.6 243V246 M1268.4 243V246 M1282.2 240V246 M1296.0 243V246 M1309.8 243V246 M1323.6 243V246 M1337.4 243V246 M1351.2 243V246 M1365.0 240V246 M1378.7 243V246 M1392.5 243V246 M1406.3 243V246 M1420.1 243V246 M1433.9 243V246 M1447.7 240V246 M1461.5 243V246 M1475.3 243V246 M1489.1 243V246 M1502.9 243V246 M1516.7 243V246 M1530.5 240V246 M1544.2 243V246 M1558.0 243V246 M1571.8 243V246 M1585.6 243V246 M1599.4 243V246 M1613.2 240V246 M1627.0 243V246 M1640.8 243V246 M1654.6 243V246 M1668.4 243V246 M1682.2 243V246 M1696.0 240V246 M1709.7 243V246 M1723.5 243V246 M1737.3 243V246 M1751.1 243V246 M1764.9 243V246 M1778.7 240V246 M1792.5 243V246 M1806.3 243V246 M1820.1 243V246 M1833.9 243V246 M1847.7 243V246 M1861.5 240V246 M1875.2 243V246 M1889.0 243V246 M1902.8 243V246 M1916.6 243V246 M1930.4 243V246 M1944.2 240V246 M1958.0 243V246 M1971.8 243V246 M689 991.8H692 M686 978.0H692 M689 964.2H692 M689 950.4H692 M689 936.6H692 M686 922.8H692 M689 909.0H692 M689 895.2H692 M689 881.5H692 M686 867.7H692 M689 853.9H692 M689 840.1H692 M689 826.3H692 M686 812.5H692 M689 798.7H692 M689 784.9H692 M689 771.1H692 M686 757.3H692 M689 743.5H692 M689 729.8H692 M689 716.0H692 M686 702.2H692 M689 688.4H692 M689 674.6H692 M689 660.8H692 M686 647.0H692 M689 633.2H692 M689 619.4H692 M689 605.6H692 M686 591.8H692 M689 578.0H692 M689 564.2H692 M689 550.5H692 M686 536.7H692 M689 522.9H692 M689 509.1H692 M689 495.3H692 M686 481.5H692 M689 467.7H692 M689 453.9H692 M689 440.1H692 M686 426.3H692 M689 412.5H692 M689 398.8H692 M689 385.0H692 M686 371.2H692 M689 357.4H692 M689 343.6H692 M689 329.8H692 M686 316.0H692 M689 302.2H692 M689 288.4H692 M689 274.6H692 M686 260.8H692 M689 247.0H692" stroke="#b8c2c2" stroke-width="1" fill="none"/></svg>
<div class="t" style="top:224.0px;font-size:10.5px;color:#7a7e8c;line-height:20px;left:485.29999999999995px;width:600px;text-align:center;">-75</div>
<div class="t" style="top:224.0px;font-size:10.5px;color:#7a7e8c;line-height:20px;left:568.05px;width:600px;text-align:center;">-37,5</div>
<div class="t" style="top:224.0px;font-size:10.5px;color:#7a7e8c;line-height:20px;left:650.8px;width:600px;text-align:center;">0</div>
<div class="t" style="top:224.0px;font-size:10.5px;color:#7a7e8c;line-height:20px;left:733.55px;width:600px;text-align:center;">37,5</div>
<div class="t" style="top:224.0px;font-size:10.5px;color:#7a7e8c;line-height:20px;left:816.3px;width:600px;text-align:center;">75</div>
<div class="t" style="top:224.0px;font-size:10.5px;color:#7a7e8c;line-height:20px;left:899.05px;width:600px;text-align:center;">112,5</div>
<div class="t" style="top:224.0px;font-size:10.5px;color:#7a7e8c;line-height:20px;left:981.8px;width:600px;text-align:center;">150</div>
<div class="t" style="top:224.0px;font-size:10.5px;color:#7a7e8c;line-height:20px;left:1064.55px;width:600px;text-align:center;">187,5</div>
<div class="t" style="top:224.0px;font-size:10.5px;color:#7a7e8c;line-height:20px;left:1147.3px;width:600px;text-align:center;">225</div>
<div class="t" style="top:224.0px;font-size:10.5px;color:#7a7e8c;line-height:20px;left:1230.05px;width:600px;text-align:center;">262,5</div>
<div class="t" style="top:224.0px;font-size:10.5px;color:#7a7e8c;line-height:20px;left:1312.8px;width:600px;text-align:center;">300</div>
<div class="t" style="top:224.0px;font-size:10.5px;color:#7a7e8c;line-height:20px;left:1395.55px;width:600px;text-align:center;">337,5</div>
<div class="t" style="top:224.0px;font-size:10.5px;color:#7a7e8c;line-height:20px;left:1478.3px;width:600px;text-align:center;">375</div>
<div class="t" style="top:224.0px;font-size:10.5px;color:#7a7e8c;line-height:20px;left:1561.05px;width:600px;text-align:center;">412,5</div>
<div class="t" style="top:224.0px;font-size:10.5px;color:#7a7e8c;line-height:20px;left:1643.8px;width:600px;text-align:center;">450</div>
<div class="t" style="left:650px;top:968.0px;width:60px;height:20px;line-height:20px;text-align:center;font-size:10.5px;color:#7a7e8c;transform:rotate(-90deg)">0</div>
<div class="t" style="left:650px;top:802.5px;width:60px;height:20px;line-height:20px;text-align:center;font-size:10.5px;color:#7a7e8c;transform:rotate(-90deg)">75</div>
<div class="t" style="left:650px;top:747.3px;width:60px;height:20px;line-height:20px;text-align:center;font-size:10.5px;color:#7a7e8c;transform:rotate(-90deg)">100</div>
<div class="t" style="left:650px;top:692.2px;width:60px;height:20px;line-height:20px;text-align:center;font-size:10.5px;color:#7a7e8c;transform:rotate(-90deg)">125</div>
<div class="t" style="left:650px;top:637.0px;width:60px;height:20px;line-height:20px;text-align:center;font-size:10.5px;color:#7a7e8c;transform:rotate(-90deg)">150</div>
<div class="t" style="left:650px;top:581.8px;width:60px;height:20px;line-height:20px;text-align:center;font-size:10.5px;color:#7a7e8c;transform:rotate(-90deg)">175</div>
<div class="t" style="left:650px;top:526.7px;width:60px;height:20px;line-height:20px;text-align:center;font-size:10.5px;color:#7a7e8c;transform:rotate(-90deg)">200</div>
<div class="t" style="left:650px;top:471.5px;width:60px;height:20px;line-height:20px;text-align:center;font-size:10.5px;color:#7a7e8c;transform:rotate(-90deg)">225</div>
<div class="t" style="left:650px;top:416.3px;width:60px;height:20px;line-height:20px;text-align:center;font-size:10.5px;color:#7a7e8c;transform:rotate(-90deg)">250</div>
<div class="t" style="left:650px;top:361.2px;width:60px;height:20px;line-height:20px;text-align:center;font-size:10.5px;color:#7a7e8c;transform:rotate(-90deg)">275</div>
<div class="t" style="left:650px;top:306.0px;width:60px;height:20px;line-height:20px;text-align:center;font-size:10.5px;color:#7a7e8c;transform:rotate(-90deg)">300</div>
<div class="t" style="left:650px;top:250.8px;width:60px;height:20px;line-height:20px;text-align:center;font-size:10.5px;color:#7a7e8c;transform:rotate(-90deg)">325</div>
<div class="r" style="left:691px;top:246px;width:1294px;height:749px;background:#aaaaaa;"></div>
<div class="r" style="left:1985px;top:246px;width:14px;height:749px;background:#eceeed;"></div>
<div class="r" style="left:1988px;top:395px;width:7px;height:419px;background:#c3cbcb;border-radius:3px;"></div>
<svg style="left:1985px;top:246px;width:14px;height:749px" viewBox="0 0 14 749"><path d="M3 9 L7 4 L11 9 Z M3 741 L7 746 L11 741 Z" fill="#333"/></svg>
<div class="r" style="left:691px;top:995px;width:1308px;height:11px;background:#eceeed;"></div>
<div class="r" style="left:893px;top:997px;width:797px;height:7px;background:#c3cbcb;border-radius:3px;"></div>
<svg style="left:692px;top:995px;width:1307px;height:11px" viewBox="0 0 1307 11"><path d="M8 2 L4 5.5 L8 9 Z M1285 2 L1289 5.5 L1285 9 Z" fill="#333"/><circle cx="1298" cy="5.5" r="4.5" fill="#f4f6f5" stroke="#dfe4e3"/></svg>
<div class="r" style="left:672px;top:1006px;width:1328px;height:1px;background:#d3dbda;"></div>
<div class="r" style="left:672px;top:1007px;width:1328px;height:29px;background:#eceeed;"></div>
<div class="r" style="left:680px;top:1006px;width:65px;height:27.5px;background:#fff;border:1px solid #d3dbda;box-sizing:border-box;border-top:none;border-radius:0 0 7px 7px;"></div>
<svg class="ic" style="left:688.0px;top:1012.0px;width:16px;height:16px;" viewBox="0 0 16 16"><path d="M4.2 1 H9.6 L13.2 4.6 V13.6 A1.6 1.6 0 0 1 11.6 15.2 H4.2 A1.6 1.6 0 0 1 2.6 13.6 V2.6 A1.6 1.6 0 0 1 4.2 1 Z" stroke="#5a67d8" stroke-width="1.15" fill="#dfe3fb" stroke-linecap="round" stroke-linejoin="round" /><path d="M9.6 1 V4.6 H13.2" stroke="#5a67d8" stroke-width="1.0" fill="none" stroke-linecap="round" stroke-linejoin="round" /><path d="M5 3.6 V12.9 H11 V6.8 M8.4 12.9 V10.9 H11" stroke="#a8781c" stroke-width="1.15" fill="none" stroke-linecap="round" stroke-linejoin="round" /></svg>
<div class="t" style="top:1009.8px;font-size:11.7px;color:#585a6b;line-height:20px;left:710px;">MCU</div>
<svg class="ic" style="left:753.0px;top:1012.0px;width:16px;height:16px;" viewBox="0 0 16 16"><path d="M4.2 1 H9.6 L13.2 4.6 V13.6 A1.6 1.6 0 0 1 11.6 15.2 H4.2 A1.6 1.6 0 0 1 2.6 13.6 V2.6 A1.6 1.6 0 0 1 4.2 1 Z" stroke="#5a67d8" stroke-width="1.15" fill="#dfe3fb" stroke-linecap="round" stroke-linejoin="round" /><path d="M9.6 1 V4.6 H13.2" stroke="#5a67d8" stroke-width="1.0" fill="none" stroke-linecap="round" stroke-linejoin="round" /><path d="M5 3.6 V12.9 H11 V6.8 M8.4 12.9 V10.9 H11" stroke="#a8781c" stroke-width="1.15" fill="none" stroke-linecap="round" stroke-linejoin="round" /></svg>
<div class="t" style="top:1009.8px;font-size:11.7px;color:#585a6b;line-height:20px;left:775px;">Power</div>
<svg class="ic" style="left:826.0px;top:1012.0px;width:16px;height:16px;" viewBox="0 0 16 16"><path d="M4.2 1 H9.6 L13.2 4.6 V13.6 A1.6 1.6 0 0 1 11.6 15.2 H4.2 A1.6 1.6 0 0 1 2.6 13.6 V2.6 A1.6 1.6 0 0 1 4.2 1 Z" stroke="#5a67d8" stroke-width="1.15" fill="#dfe3fb" stroke-linecap="round" stroke-linejoin="round" /><path d="M9.6 1 V4.6 H13.2" stroke="#5a67d8" stroke-width="1.0" fill="none" stroke-linecap="round" stroke-linejoin="round" /><path d="M5 3.6 V12.9 H11 V6.8 M8.4 12.9 V10.9 H11" stroke="#a8781c" stroke-width="1.15" fill="none" stroke-linecap="round" stroke-linejoin="round" /></svg>
<div class="t" style="top:1009.8px;font-size:11.7px;color:#585a6b;line-height:20px;left:848px;">Wi-Fi/Bluetooth</div>
<svg class="ic" style="left:947.0px;top:1012.0px;width:16px;height:16px;" viewBox="0 0 16 16"><path d="M4.2 1 H9.6 L13.2 4.6 V13.6 A1.6 1.6 0 0 1 11.6 15.2 H4.2 A1.6 1.6 0 0 1 2.6 13.6 V2.6 A1.6 1.6 0 0 1 4.2 1 Z" stroke="#5a67d8" stroke-width="1.15" fill="#dfe3fb" stroke-linecap="round" stroke-linejoin="round" /><path d="M9.6 1 V4.6 H13.2" stroke="#5a67d8" stroke-width="1.0" fill="none" stroke-linecap="round" stroke-linejoin="round" /><path d="M5 3.6 V12.9 H11 V6.8 M8.4 12.9 V10.9 H11" stroke="#a8781c" stroke-width="1.15" fill="none" stroke-linecap="round" stroke-linejoin="round" /></svg>
<div class="t" style="top:1009.8px;font-size:11.7px;color:#585a6b;line-height:20px;left:969px;">GSM</div>
<svg class="ic" style="left:1011.0px;top:1012.0px;width:16px;height:16px;" viewBox="0 0 16 16"><path d="M4.2 1 H9.6 L13.2 4.6 V13.6 A1.6 1.6 0 0 1 11.6 15.2 H4.2 A1.6 1.6 0 0 1 2.6 13.6 V2.6 A1.6 1.6 0 0 1 4.2 1 Z" stroke="#5a67d8" stroke-width="1.15" fill="#dfe3fb" stroke-linecap="round" stroke-linejoin="round" /><path d="M9.6 1 V4.6 H13.2" stroke="#5a67d8" stroke-width="1.0" fill="none" stroke-linecap="round" stroke-linejoin="round" /><path d="M5 3.6 V12.9 H11 V6.8 M8.4 12.9 V10.9 H11" stroke="#a8781c" stroke-width="1.15" fill="none" stroke-linecap="round" stroke-linejoin="round" /></svg>
<div class="t" style="top:1009.8px;font-size:11.7px;color:#585a6b;line-height:20px;left:1033px;">Input/Output</div>
<div class="r" style="left:818px;top:1015px;width:1px;height:11px;background:#cfd6d6;"></div>
<div class="r" style="left:938px;top:1015px;width:1px;height:11px;background:#cfd6d6;"></div>
<div class="r" style="left:1003px;top:1015px;width:1px;height:11px;background:#cfd6d6;"></div>
<div class="r" style="left:1109px;top:1015px;width:1px;height:11px;background:#cfd6d6;"></div>
<svg class="ic" style="left:1126.0px;top:1012.0px;width:16px;height:16px;" viewBox="0 0 16 16"><path d="M4.2 1 H9.6 L13.2 4.6 V8.5 M8 15.2 H4.2 A1.6 1.6 0 0 1 2.6 13.6 V2.6 A1.6 1.6 0 0 1 4.2 1" stroke="#5a67d8" stroke-width="1.15" fill="#dfe3fb" stroke-linecap="round" stroke-linejoin="round" /><path d="M9.6 1 V4.6 H13.2" stroke="#5a67d8" stroke-width="1.0" fill="none" stroke-linecap="round" stroke-linejoin="round" /><path d="M5 3.6 V12.9 H7.5" stroke="#a8781c" stroke-width="1.15" fill="none" stroke-linecap="round" stroke-linejoin="round" /><circle cx="11.8" cy="12.4" r="3.1" fill="#444" stroke="#eceeed" stroke-width="0.7"/><path d="M11.8 10.7 V14.1 M10.1 12.4 H13.5" stroke="#fff" stroke-width="1.0" fill="none" stroke-linecap="round" stroke-linejoin="round" /></svg>
<svg class="ic" style="left:1893.0px;top:1011.0px;width:18px;height:18px;" viewBox="0 0 16 16"><path d="M2.8 12.8 V2.2 H8 L11.2 5.4 V7" stroke="#5a67d8" stroke-width="1.1" fill="#dfe3fb" stroke-linecap="round" stroke-linejoin="round" /><path d="M8 2.2 V5.4 H11.2" stroke="#5a67d8" stroke-width="0.9" fill="none" stroke-linecap="round" stroke-linejoin="round" /><path d="M4.6 12.8 V3.8" stroke="#a8781c" stroke-width="1.3" fill="none" stroke-linecap="round" stroke-linejoin="round" /><path d="M7.4 14.4 L8.2 11.4 L12.6 7 L14.4 8.8 L10 13.4 Z" stroke="#555" stroke-width="0.95" fill="#d9dcdc" stroke-linecap="round" stroke-linejoin="round" /></svg>
<svg class="ic" style="left:1918.0px;top:1011.0px;width:18px;height:18px;" viewBox="0 0 16 16"><path d="M3.2 4.4 H12.8 M6.3 4.4 V2.8 H9.7 V4.4" stroke="#d64545" stroke-width="1.1" fill="none" stroke-linecap="round" stroke-linejoin="round" /><path d="M4.3 4.4 L4.8 14 H11.2 L11.7 4.4" stroke="#d64545" stroke-width="1.1" fill="#fbe3e3" stroke-linecap="round" stroke-linejoin="round" /><path d="M6.6 6.6 V11.8 M8 6.6 V11.8 M9.4 6.6 V11.8" stroke="#d64545" stroke-width="1.0" fill="none" stroke-linecap="round" stroke-linejoin="round" /></svg>
<svg class="ic" style="left:1944.5px;top:1011.5px;width:17px;height:17px;" viewBox="0 0 16 16"><path d="M2 4 H14 M2 8 H14 M2 12 H14" stroke="#444" stroke-width="1.0" fill="none" stroke-linecap="round" stroke-linejoin="round" /><circle cx="6" cy="4" r="1.6" stroke="#5a67d8" stroke-width="1" fill="#fff"/><circle cx="10.5" cy="8" r="1.6" stroke="#5a67d8" stroke-width="1" fill="#fff"/><circle cx="5" cy="12" r="1.6" stroke="#5a67d8" stroke-width="1" fill="#fff"/></svg>
<svg class="ic" style="left:1970.5px;top:1011.5px;width:17px;height:17px;" viewBox="0 0 16 16"><path d="M12.07 9.68L13.45 10.26M9.68 12.07L10.26 13.45M6.32 12.07L5.74 13.45M3.93 9.68L2.55 10.26M3.93 6.32L2.55 5.74M6.32 3.93L5.74 2.55M9.68 3.93L10.26 2.55M12.07 6.32L13.45 5.74" stroke="#5a67d8" stroke-width="2.5" stroke-linecap="round" fill="none"/><path d="M12.07 9.68L13.45 10.26M9.68 12.07L10.26 13.45M6.32 12.07L5.74 13.45M3.93 9.68L2.55 10.26M3.93 6.32L2.55 5.74M6.32 3.93L5.74 2.55M9.68 3.93L10.26 2.55M12.07 6.32L13.45 5.74" stroke="#eceeed" stroke-width="1.35" stroke-linecap="round" fill="none"/><circle cx="8" cy="8" r="4.5" stroke="#5a67d8" stroke-width="1.05" fill="#eceeed"/><circle cx="8" cy="8" r="1.9" stroke="#5a67d8" stroke-width="1.05" fill="none"/></svg>
<div class="r" style="left:950px;top:322px;width:928px;height:655px;background:#fff;box-shadow:3px 3px 3px rgba(0,0,0,.32);"></div>
<svg style="left:0;top:0;width:2269px;height:1105px" viewBox="0 0 2269 1105" font-family="Liberation Sans, sans-serif"><path d="M978.8 323V976 M1006.4 323V976 M1034.0 323V976 M1061.5 323V976 M1089.1 323V976 M1116.7 323V976 M1144.3 323V976 M1171.9 323V976 M1199.5 323V976 M1227.0 323V976 M1254.6 323V976 M1282.2 323V976 M1309.8 323V976 M1337.4 323V976 M1365.0 323V976 M1392.5 323V976 M1420.1 323V976 M1447.7 323V976 M1475.3 323V976 M1502.9 323V976 M1530.5 323V976 M1558.0 323V976 M1585.6 323V976 M1613.2 323V976 M1640.8 323V976 M1668.4 323V976 M1696.0 323V976 M1723.5 323V976 M1751.1 323V976 M1778.7 323V976 M1806.3 323V976 M1833.9 323V976 M1861.5 323V976 M951 951.1H1877 M951 923.5H1877 M951 896.0H1877 M951 868.4H1877 M951 840.8H1877 M951 813.2H1877 M951 785.6H1877 M951 758.0H1877 M951 730.5H1877 M951 702.9H1877 M951 675.3H1877 M951 647.7H1877 M951 620.1H1877 M951 592.5H1877 M951 565.0H1877 M951 537.4H1877 M951 509.8H1877 M951 482.2H1877 M951 454.6H1877 M951 427.0H1877 M951 399.5H1877 M951 371.9H1877 M951 344.3H1877" stroke="#efefef" stroke-width="1" fill="none"/><path d="M1189.4 373.8H1204.9V379.0H1189.4Z M1187.4 384.8H1204.9V390.0H1187.4Z M1187.4 395.9H1204.9V401.1H1187.4Z M1188.4 406.9H1204.9V412.1H1188.4Z M1178.9 417.9H1204.9V423.1H1178.9Z M1178.9 429.0H1204.9V434.2H1178.9Z M1181.4 440.0H1204.9V445.2H1181.4Z M1175.9 451.0H1204.9V456.2H1175.9Z M1174.9 462.1H1204.9V467.3H1174.9Z M1179.9 473.1H1204.9V478.3H1179.9Z M1181.9 484.1H1204.9V489.3H1181.9Z M1181.9 495.2H1204.9V500.4H1181.9Z M1182.9 506.2H1204.9V511.4H1182.9Z M1186.4 517.2H1204.9V522.4H1186.4Z M1179.0 550.3H1198.0V555.5H1179.0Z M1188.0 583.4H1198.0V588.6H1188.0Z M1015.4 630.2H1029.2V635.4H1015.4Z M1505.1 345.9H1530.1V351.1H1505.1Z M1505.1 368.0H1530.1V373.2H1505.1Z M1505.1 384.8H1527.1V390.0H1505.1Z M1505.1 395.9H1527.1V401.1H1505.1Z M1386.2 417.9H1402.2V423.1H1386.2Z M1386.2 429.0H1403.2V434.2H1386.2Z M1386.2 440.0H1421.2V445.2H1386.2Z M1386.2 451.0H1422.2V456.2H1386.2Z M1386.2 462.1H1411.2V467.3H1386.2Z M1386.2 495.2H1411.2V500.4H1386.2Z M1386.2 539.3H1408.2V544.5H1386.2Z M1386.2 550.3H1411.2V555.5H1386.2Z M1386.2 561.4H1409.2V566.6H1386.2Z M1386.2 572.4H1411.2V577.6H1386.2Z M1386.2 583.4H1411.2V588.6H1386.2Z M1386.2 594.5H1413.2V599.7H1386.2Z M1386.2 605.5H1413.2V610.7H1386.2Z M1386.2 682.7H1409.2V687.9H1386.2Z M1386.2 693.8H1411.2V699.0H1386.2Z M1386.2 704.8H1414.2V710.0H1386.2Z M1386.2 715.8H1414.2V721.0H1386.2Z M1388.5 517.2H1402.0V522.4H1388.5Z M1388.5 528.3H1402.0V533.5H1388.5Z M1776.1 445.2H1795.1V450.4H1776.1Z M1776.1 489.6H1795.1V494.8H1776.1Z M1579.5 484.0H1587.0V489.2H1579.5Z M1656.6 616.5H1678.6V621.7H1656.6Z M1656.6 627.6H1678.6V632.8H1656.6Z M1566.5 549.9H1580.0V555.1H1566.5Z M1800.0 582.8H1814.0V588.0H1800.0Z M1467.0 677.0H1485.5V682.2H1467.0Z M1445.3 688.1H1453.0V693.3H1445.3Z M1810.6 654.8H1829.6V660.0H1810.6Z M1810.6 665.9H1829.6V671.1H1810.6Z M1500.7 770.4H1508.3V775.6H1500.7Z M1494.4 792.6H1508.3V797.8H1494.4Z M1027.0 751.8H1040.6V757.0H1027.0Z M1095.0 814.8H1105.0V820.0H1095.0Z M1095.0 781.6H1109.0V786.8H1095.0Z M1095.0 792.7H1108.5V797.9H1095.0Z" fill="#e2e2fa"/><path d="M1234.1 373.9H1242.1V378.9H1234.1Z M1226.6 371.0H1230.4V375.4H1226.6Z M1343.2 373.9H1350.2V378.9H1343.2Z M1354.4 371.0H1358.2V375.4H1354.4Z M1234.1 384.9H1243.1V389.9H1234.1Z M1226.6 382.0H1230.4V386.4H1226.6Z M1344.2 384.9H1350.2V389.9H1344.2Z M1354.4 382.0H1358.2V386.4H1354.4Z M1234.1 396.0H1240.1V401.0H1234.1Z M1226.6 393.1H1230.4V397.5H1226.6Z M1344.2 396.0H1350.2V401.0H1344.2Z M1354.4 393.1H1358.2V397.5H1354.4Z M1234.1 407.0H1242.1V412.0H1234.1Z M1226.6 404.1H1230.4V408.5H1226.6Z M1344.2 407.0H1350.2V412.0H1344.2Z M1354.4 404.1H1358.2V408.5H1354.4Z M1234.1 418.0H1241.1V423.0H1234.1Z M1226.6 415.1H1230.4V419.5H1226.6Z M1344.2 418.0H1350.2V423.0H1344.2Z M1354.4 415.1H1358.2V419.5H1354.4Z M1234.1 429.1H1240.1V434.1H1234.1Z M1226.6 426.2H1230.4V430.6H1226.6Z M1341.2 429.1H1350.2V434.1H1341.2Z M1354.4 426.2H1358.2V430.6H1354.4Z M1234.1 440.1H1243.1V445.1H1234.1Z M1226.6 437.2H1230.4V441.6H1226.6Z M1344.2 440.1H1350.2V445.1H1344.2Z M1354.4 437.2H1358.2V441.6H1354.4Z M1234.1 451.1H1241.1V456.1H1234.1Z M1226.6 448.2H1230.4V452.6H1226.6Z M1344.2 451.1H1350.2V456.1H1344.2Z M1354.4 448.2H1358.2V452.6H1354.4Z M1234.1 462.2H1243.1V467.2H1234.1Z M1226.6 459.3H1230.4V463.7H1226.6Z M1344.2 462.2H1350.2V467.2H1344.2Z M1354.4 459.3H1358.2V463.7H1354.4Z M1234.1 473.2H1240.1V478.2H1234.1Z M1226.6 470.3H1230.4V474.7H1226.6Z M1343.2 473.2H1350.2V478.2H1343.2Z M1354.4 470.3H1358.2V474.7H1354.4Z M1234.1 484.2H1240.1V489.2H1234.1Z M1226.6 481.3H1230.4V485.7H1226.6Z M1341.2 484.2H1350.2V489.2H1341.2Z M1354.4 481.3H1358.2V485.7H1354.4Z M1234.1 495.3H1240.1V500.3H1234.1Z M1226.6 492.4H1230.4V496.8H1226.6Z M1343.2 495.3H1350.2V500.3H1343.2Z M1354.4 492.4H1358.2V496.8H1354.4Z M1234.1 506.3H1240.1V511.3H1234.1Z M1226.6 503.4H1230.4V507.8H1226.6Z M1343.2 506.3H1350.2V511.3H1343.2Z M1354.4 503.4H1358.2V507.8H1354.4Z M1234.1 517.3H1242.1V522.3H1234.1Z M1226.6 514.4H1230.4V518.8H1226.6Z M1328.2 517.3H1350.2V522.3H1328.2Z M1354.4 514.4H1358.2V518.8H1354.4Z M1234.1 528.4H1262.1V533.4H1234.1Z M1226.6 525.5H1230.4V529.9H1226.6Z M1327.2 528.4H1350.2V533.4H1327.2Z M1354.4 525.5H1358.2V529.9H1354.4Z M1234.1 539.4H1266.1V544.4H1234.1Z M1226.6 536.5H1230.4V540.9H1226.6Z M1343.2 539.4H1350.2V544.4H1343.2Z M1354.4 536.5H1358.2V540.9H1354.4Z M1234.1 550.4H1240.1V555.4H1234.1Z M1226.6 547.5H1230.4V551.9H1226.6Z M1343.2 550.4H1350.2V555.4H1343.2Z M1354.4 547.5H1358.2V551.9H1354.4Z M1234.1 561.5H1256.1V566.5H1234.1Z M1226.6 558.6H1230.4V563.0H1226.6Z M1344.2 561.5H1350.2V566.5H1344.2Z M1354.4 558.6H1358.2V563.0H1354.4Z M1234.1 572.5H1259.1V577.5H1234.1Z M1226.6 569.6H1230.4V574.0H1226.6Z M1344.2 572.5H1350.2V577.5H1344.2Z M1354.4 569.6H1358.2V574.0H1354.4Z M1234.1 583.5H1241.1V588.5H1234.1Z M1226.6 580.6H1230.4V585.0H1226.6Z M1341.2 583.5H1350.2V588.5H1341.2Z M1354.4 580.6H1358.2V585.0H1354.4Z M1234.1 594.6H1245.1V599.6H1234.1Z M1226.6 591.7H1230.4V596.1H1226.6Z M1342.2 594.6H1350.2V599.6H1342.2Z M1354.4 591.7H1358.2V596.1H1354.4Z M1234.1 605.6H1243.1V610.6H1234.1Z M1226.6 602.7H1230.4V607.1H1226.6Z M1341.2 605.6H1350.2V610.6H1341.2Z M1354.4 602.7H1358.2V607.1H1354.4Z M1234.1 616.6H1242.1V621.6H1234.1Z M1226.6 613.7H1230.4V618.1H1226.6Z M1342.2 616.6H1350.2V621.6H1342.2Z M1354.4 613.7H1358.2V618.1H1354.4Z M1234.1 627.7H1241.1V632.7H1234.1Z M1226.6 624.8H1230.4V629.2H1226.6Z M1343.2 627.7H1350.2V632.7H1343.2Z M1354.4 624.8H1358.2V629.2H1354.4Z M1234.1 638.7H1241.1V643.7H1234.1Z M1226.6 635.8H1230.4V640.2H1226.6Z M1344.2 638.7H1350.2V643.7H1344.2Z M1354.4 635.8H1358.2V640.2H1354.4Z M1234.1 649.7H1242.1V654.7H1234.1Z M1226.6 646.8H1230.4V651.2H1226.6Z M1341.2 649.7H1350.2V654.7H1341.2Z M1354.4 646.8H1358.2V651.2H1354.4Z M1234.1 660.8H1242.1V665.8H1234.1Z M1226.6 657.9H1230.4V662.3H1226.6Z M1341.2 660.8H1350.2V665.8H1341.2Z M1354.4 657.9H1358.2V662.3H1354.4Z M1234.1 671.8H1242.1V676.8H1234.1Z M1226.6 668.9H1230.4V673.3H1226.6Z M1344.2 671.8H1350.2V676.8H1344.2Z M1354.4 668.9H1358.2V673.3H1354.4Z M1234.1 682.8H1240.1V687.8H1234.1Z M1226.6 679.9H1230.4V684.3H1226.6Z M1341.2 682.8H1350.2V687.8H1341.2Z M1354.4 679.9H1358.2V684.3H1354.4Z M1234.1 693.9H1241.1V698.9H1234.1Z M1226.6 691.0H1230.4V695.4H1226.6Z M1342.2 693.9H1350.2V698.9H1342.2Z M1354.4 691.0H1358.2V695.4H1354.4Z M1234.1 704.9H1241.1V709.9H1234.1Z M1226.6 702.0H1230.4V706.4H1226.6Z M1341.2 704.9H1350.2V709.9H1341.2Z M1354.4 702.0H1358.2V706.4H1354.4Z M1234.1 715.9H1243.1V720.9H1234.1Z M1226.6 713.0H1230.4V717.4H1226.6Z M1344.2 715.9H1350.2V720.9H1344.2Z M1354.4 713.0H1358.2V717.4H1354.4Z M1476.5 462.0H1481.5V467.0H1476.5Z M1523.2 462.0H1528.2V467.0H1523.2Z M1476.5 473.0H1481.5V478.0H1476.5Z M1523.2 473.0H1528.2V478.0H1523.2Z M1476.5 484.1H1481.5V489.1H1476.5Z M1523.2 484.1H1528.2V489.1H1523.2Z M1476.5 495.2H1481.5V500.2H1476.5Z M1523.2 495.2H1528.2V500.2H1523.2Z M1691.7 561.3H1697.2V566.3H1691.7Z M1691.7 572.1H1697.2V577.1H1691.7Z M1691.7 582.9H1697.2V587.9H1691.7Z M1691.7 594.3H1697.2V599.3H1691.7Z M1691.7 605.3H1697.2V610.3H1691.7Z M1748.3 561.3H1753.8V566.3H1748.3Z M1748.3 582.9H1753.8V587.9H1748.3Z M1748.3 605.3H1753.8V610.3H1748.3Z M1515.5 654.9H1522.5V659.9H1515.5Z M1515.5 666.0H1522.5V671.0H1515.5Z M1515.5 677.1H1522.5V682.1H1515.5Z M1515.5 688.2H1522.5V693.2H1515.5Z M1515.5 699.2H1522.5V704.2H1515.5Z M1579.9 654.9H1588.4V659.9H1579.9Z M1579.9 666.0H1588.4V671.0H1579.9Z M1579.9 699.2H1588.4V704.2H1579.9Z M1534.0 770.7H1537.0V775.7H1534.0Z M1534.0 782.0H1537.0V787.0H1534.0Z M1534.0 793.2H1537.0V798.2H1534.0Z M1534.0 804.5H1537.0V809.5H1534.0Z M1009.8 770.7H1012.8V775.7H1009.8Z M1009.8 781.8H1012.8V786.8H1009.8Z M1009.8 792.9H1012.8V797.9H1009.8Z M1009.8 803.9H1012.8V808.9H1009.8Z M1009.8 815.0H1012.8V820.0H1009.8Z" fill="#e4e4e4"/><path d="M1458.3 856.0H1601.8 M1458.3 867.1H1601.8 M1458.3 878.1H1601.8 M1458.3 911.2H1601.8 M1458.3 922.2H1601.8 M1458.3 933.3H1601.8 M1458.3 944.3H1601.8 M1458.3 955.3H1601.8 M1767.3 889.1V922.2M1778.3 889.1V922.2" stroke="#a8a8a8" stroke-width="0.7" fill="none"/><path d="M994.9 333.1H1866.6V966.4H994.9Z M968.5 333.1H994.9V465.5H968.5Z M979.5 333.1L979.5 465.5 M968.5 465.5H994.9V597.9H968.5Z M979.5 465.5L979.5 597.9 M968.5 646.4H994.9V723.6H968.5Z M979.5 646.4L979.5 723.6 M968.5 723.6H994.9V778.8H968.5Z M979.5 723.6L979.5 778.8 M968.5 778.8H994.9V834.0H968.5Z M979.5 778.8L979.5 834.0 M968.5 834.0H994.9V911.2H968.5Z M979.5 834.0L979.5 911.2 M968.5 911.2H994.9V966.4H968.5Z M979.5 911.2L979.5 966.4 M994.9 333.1H1149.4V363.9H994.9Z M1458.3 845.0H1866.6V966.4H1458.3Z M1473.8 845.0L1473.8 900.2 M1495.8 845.0L1495.8 966.4 M1546.6 845.0L1546.6 966.4 M1579.7 845.0L1579.7 966.4 M1601.8 845.0L1601.8 966.4 M1458.3 889.1H1601.8 M1458.3 900.2H1601.8 M1601.8 878.1L1866.6 878.1 M1601.8 933.3L1866.6 933.3 M1756.2 878.1L1756.2 966.4 M1756.2 889.1L1866.6 889.1 M1756.2 922.2L1866.6 922.2 M1789.3 878.1L1789.3 922.2 M1826.8 878.1L1826.8 922.2 M1800.4 922.2L1800.4 933.3 M1248.0 905.5H1441.8V949.9H1248.0Z M1309.4 905.5L1309.4 949.9 M1397.2 905.5L1397.2 949.9 M1353.5 916.4L1353.5 949.9 M1309.4 916.4L1397.2 916.4 M1248.0 927.4L1441.8 927.4 M1248.0 938.5L1441.8 938.5 M1231.6 370.8H1353.2V724.0H1231.6Z M1275.8 370.8L1275.8 724.0 M1314.6 370.8L1314.6 724.0 M1231.6 547.2L1275.8 547.2 M1231.6 558.3L1275.8 558.3 M1231.6 580.3L1275.8 580.3 M1231.6 602.5L1275.8 602.5 M1231.6 613.5L1275.8 613.5 M1314.6 547.2L1353.2 547.2 M1211.0 376.4L1215.0 376.4 M1211.0 387.4L1215.0 387.4 M1211.0 398.5L1215.0 398.5 M1211.0 409.5L1215.0 409.5 M1211.0 420.5L1215.0 420.5 M1211.0 431.6L1215.0 431.6 M1211.0 442.6L1215.0 442.6 M1211.0 453.6L1215.0 453.6 M1211.0 464.7L1215.0 464.7 M1211.0 475.7L1215.0 475.7 M1211.0 486.7L1215.0 486.7 M1211.0 497.8L1215.0 497.8 M1211.0 508.8L1215.0 508.8 M1211.0 519.8L1215.0 519.8 M1013.7 526.3L1031.3 526.3 M1013.7 529.3L1031.3 529.3 M1090.6 526.3L1108.2 526.3 M1090.6 529.3L1108.2 529.3 M1064.4 502.6H1068.6V514.4H1064.4Z M1062.3 503.6L1062.3 513.4 M1070.7 503.6L1070.7 513.4 M1055.4 508.5L1062.3 508.5 M1070.7 508.5L1077.8 508.5 M1052.7 569.5H1056.9V580.5H1052.7Z M1050.6 570.4L1050.6 579.6 M1059.0 570.4L1059.0 579.6 M1126.8 570.5H1149.8V579.5H1126.8Z M1013.7 592.2L1031.3 592.2 M1013.7 595.2L1031.3 595.2 M1090.6 592.2L1108.2 592.2 M1090.6 595.2L1108.2 595.2 M1149.2 592.6H1171.4V601.6H1149.2Z M1175.5 622.9L1189.5 622.9 M1178.5 626.0L1186.5 626.0 M1013.7 670.2L1031.3 670.2 M1013.7 673.2L1031.3 673.2 M1046.8 692.4L1064.4 692.4 M1046.8 695.4L1064.4 695.4 M1080.1 670.2L1097.7 670.2 M1080.1 673.2L1097.7 673.2 M1112.7 692.4L1130.3 692.4 M1112.7 695.4L1130.3 695.4 M1157.1 692.4L1174.7 692.4 M1157.1 695.4L1174.7 695.4 M1374.8 366.3H1397.5V374.9H1374.8Z M1436.0 344.2H1458.5V352.8H1436.0Z M1452.3 366.3H1475.0V374.9H1452.3Z M1376.0 420.5L1380.0 420.5 M1376.0 431.6L1380.0 431.6 M1376.0 442.6L1380.0 442.6 M1376.0 453.6L1380.0 453.6 M1376.0 464.7L1380.0 464.7 M1376.0 497.8L1380.0 497.8 M1376.0 541.9L1380.0 541.9 M1376.0 552.9L1380.0 552.9 M1376.0 564.0L1380.0 564.0 M1376.0 575.0L1380.0 575.0 M1376.0 586.0L1380.0 586.0 M1376.0 597.1L1380.0 597.1 M1376.0 608.1L1380.0 608.1 M1376.0 685.3L1380.0 685.3 M1376.0 696.4L1380.0 696.4 M1376.0 707.4L1380.0 707.4 M1376.0 718.4L1380.0 718.4 M1474.5 459.2H1530.2V503.2H1474.5Z M1491.4 459.2L1491.4 503.2 M1513.2 459.2L1513.2 503.2 M1474.5 480.8L1491.4 480.8 M1513.2 480.8L1530.2 480.8 M1612.3 443.3H1635.4V452.3H1612.3Z M1612.3 487.7H1635.4V496.7H1612.3Z M1554.3 510.0L1571.9 510.0 M1554.3 513.0L1571.9 513.0 M1641.0 458.6H1650.0V480.8H1641.0Z M1674.6 458.6H1683.6V480.8H1674.6Z M1697.4 510.0L1715.0 510.0 M1697.4 513.0L1715.0 513.0 M1736.4 510.0L1754.0 510.0 M1736.4 513.0L1754.0 513.0 M1689.2 557.7H1756.3V613.1H1689.2Z M1706.2 557.7L1706.2 613.1 M1740.0 557.7L1740.0 613.1 M1689.2 590.9L1706.2 590.9 M1740.0 580.2L1756.3 580.2 M1597.0 563.8H1606.0V586.0H1597.0Z M1630.3 563.8H1639.3V586.0H1630.3Z M1774.9 603.9L1792.5 603.9 M1774.9 606.9L1792.5 606.9 M1513.0 652.0H1590.9V707.1H1513.0Z M1535.5 652.0L1535.5 707.1 M1568.5 652.0L1568.5 707.1 M1513.0 685.0L1535.5 685.0 M1460.2 714.5L1477.8 714.5 M1460.2 717.5L1477.8 717.5 M1608.3 690.0H1617.3V712.8H1608.3Z M1641.5 690.0H1650.5V712.8H1641.5Z M1674.2 690.0H1683.2V712.8H1674.2Z M1707.4 690.0H1716.4V712.8H1707.4Z M1703.1 736.7L1720.7 736.7 M1703.1 739.7L1720.7 739.7 M1746.0 690.0H1755.0V712.8H1746.0Z M1741.7 736.7L1759.3 736.7 M1741.7 739.7L1759.3 739.7 M1785.0 690.0H1794.0V712.8H1785.0Z M1780.7 736.7L1798.3 736.7 M1780.7 739.7L1798.3 739.7 M1452.2 779.6H1475.4V788.6H1452.2Z M1529.8 767.6H1541.5V778.9H1529.8Z M1529.8 778.9H1541.5V790.1H1529.8Z M1529.8 790.1H1541.5V801.4H1529.8Z M1529.8 801.4H1541.5V812.6H1529.8Z M1529.8 767.6L1529.8 762.5L1537.0 762.5L1541.5 758.8 M1537.0 762.5L1541.5 766.2 M1361.2 741.5L1378.8 741.5 M1361.2 744.5L1378.8 744.5 M1005.6 767.7H1017V778.8H1005.6Z M1005.6 778.8H1017V789.9H1005.6Z M1005.6 789.9H1017V800.9H1005.6Z M1005.6 800.9H1017V812.0H1005.6Z M1005.6 812.0H1017V823.1H1005.6Z M1005.6 767.7L1005.6 763.0L1011.3 763.0 M1007.5 757.2L1011.3 763.0L1017.0 760.5 M1052.6 835.6L1070.2 835.6 M1052.6 838.6L1070.2 838.6" stroke="#3c3c3c" stroke-width="0.8" fill="none"/><path d="M1215.0 376.4L1231.6 376.4 M1215.0 387.4L1231.6 387.4 M1215.0 398.5L1231.6 398.5 M1215.0 409.5L1231.6 409.5 M1215.0 420.5L1231.6 420.5 M1215.0 431.6L1231.6 431.6 M1215.0 442.6L1231.6 442.6 M1215.0 453.6L1231.6 453.6 M1215.0 464.7L1231.6 464.7 M1215.0 475.7L1231.6 475.7 M1215.0 486.7L1231.6 486.7 M1215.0 497.8L1231.6 497.8 M1215.0 508.8L1231.6 508.8 M1215.0 519.8L1231.6 519.8 M1022.5 508.5L1022.5 470.0L1143.7 470.0L1143.7 530.9L1231.6 530.9 M1022.5 508.5L1055.4 508.5 M1077.8 508.5L1137.8 508.5L1137.8 541.9L1231.6 541.9 M1022.5 508.5L1022.5 526.3 M1022.5 529.3L1022.5 542.9 M1099.4 508.5L1099.4 526.3 M1099.4 529.3L1099.4 542.9 M1066.5 519.8L1066.5 542.9 M1205.5 552.9L1231.6 552.9 M1205.5 586.0L1231.6 586.0 M1022.5 575.0L1022.5 553.1L1160.0 553.1L1160.0 564.0L1231.6 564.0 M1022.5 575.0L1050.6 575.0 M1059.0 575.0L1126.8 575.0 M1149.8 575.0L1231.6 575.0 M1022.5 575.0L1022.5 592.2 M1022.5 595.2L1022.5 609.0 M1099.4 575.0L1099.4 592.2 M1099.4 595.2L1099.4 609.0 M1132.9 597.1L1149.2 597.1 M1171.4 597.1L1231.6 597.1 M1231.6 608.1L1182.5 608.1L1182.5 622.9 M1182.5 626.0L1182.5 636.8 M1221.0 619.1L1221.0 652.2 M1221.0 619.1L1231.6 619.1 M1221.0 630.2L1231.6 630.2 M1221.0 641.2L1231.6 641.2 M1022.5 652.2L1231.6 652.2 M1022.5 639.0L1022.5 652.2 M1022.5 652.2L1022.5 670.2 M1022.5 673.2L1022.5 724.7 M1055.6 652.2L1055.6 692.4 M1055.6 695.4L1055.6 724.7 M1088.9 652.2L1088.9 670.2 M1088.9 673.2L1088.9 724.7 M1121.5 652.2L1121.5 692.4 M1121.5 695.4L1121.5 724.7 M1121.5 663.3L1231.6 663.3 M1165.9 663.3L1165.9 692.4 M1165.9 695.4L1165.9 724.7 M1231.6 674.3L1221.0 674.3L1221.0 724.7 M1221.0 685.3L1231.6 685.3 M1221.0 696.4L1231.6 696.4 M1221.0 707.4L1231.6 707.4 M1221.0 718.4L1231.6 718.4 M1353.2 376.4L1364.6 376.4L1364.6 370.6L1374.8 370.6 M1397.5 370.6L1408.6 370.6L1408.6 409.5L1353.2 409.5 M1353.2 387.4L1498.5 387.4 M1353.2 398.5L1498.5 398.5 M1419.1 387.4L1419.1 348.5L1436.0 348.5 M1458.5 348.5L1498.5 348.5 M1436.3 398.5L1436.3 370.6L1452.3 370.6 M1475.0 370.6L1498.5 370.6 M1353.2 420.5L1376.0 420.5 M1353.2 431.6L1376.0 431.6 M1353.2 442.6L1376.0 442.6 M1353.2 453.6L1376.0 453.6 M1353.2 464.7L1376.0 464.7 M1353.2 497.8L1376.0 497.8 M1353.2 541.9L1376.0 541.9 M1353.2 552.9L1376.0 552.9 M1353.2 564.0L1376.0 564.0 M1353.2 575.0L1376.0 575.0 M1353.2 586.0L1376.0 586.0 M1353.2 597.1L1376.0 597.1 M1353.2 608.1L1376.0 608.1 M1353.2 685.3L1376.0 685.3 M1353.2 696.4L1376.0 696.4 M1353.2 707.4L1376.0 707.4 M1353.2 718.4L1376.0 718.4 M1353.2 519.8L1381.0 519.8 M1353.2 530.9L1381.0 530.9 M1353.2 475.7L1474.5 475.7 M1353.2 486.7L1452.9 486.7L1452.9 464.5L1474.5 464.5 M1353.2 508.8L1463.7 508.8L1463.7 486.6L1474.5 486.6 M1463.7 497.7L1474.5 497.7 M1530.2 464.5L1602.2 464.5L1602.2 447.8L1612.3 447.8 M1635.4 447.8L1769.5 447.8 M1530.2 475.5L1602.2 475.5L1602.2 492.2L1612.3 492.2 M1635.4 492.2L1769.5 492.2 M1530.2 486.6L1575.0 486.6 M1563.1 486.6L1563.1 510.0 M1563.1 513.0L1563.1 526.3 M1530.2 497.7L1540.9 497.7L1540.9 526.3 M1645.5 447.8L1645.5 458.6 M1645.5 480.8L1645.5 492.2 M1679.1 447.8L1679.1 458.6 M1679.1 480.8L1679.1 492.2 M1706.2 492.2L1706.2 510.0 M1706.2 513.0L1706.2 526.3 M1745.2 447.8L1745.2 510.0 M1745.2 513.0L1745.2 526.3 M1679.0 563.8L1689.2 563.8 M1679.0 585.4L1689.2 585.4 M1679.0 563.8L1679.0 585.4 M1662.5 574.6L1689.2 574.6 M1353.2 619.1L1650.0 619.1 M1353.2 630.2L1650.0 630.2 M1689.2 596.8L1634.8 596.8 M1689.2 607.8L1640.0 607.8L1640.0 619.1 M1585.0 552.5L1634.8 552.5L1634.8 563.8 M1601.5 552.5L1601.5 563.8 M1601.5 586.0L1601.5 619.1 M1634.8 586.0L1634.8 630.2 M1756.3 563.8L1767.0 563.8L1767.0 619.8 M1756.3 607.8L1767.0 607.8 M1756.3 585.4L1795.0 585.4 M1783.7 585.4L1783.7 603.9 M1783.7 606.9L1783.7 619.8 M1353.2 641.2L1496.6 641.2L1496.6 668.5L1513.0 668.5 M1353.2 652.2L1502.0 652.2L1502.0 657.4L1513.0 657.4 M1494.8 679.6L1513.0 679.6 M1459.0 690.7L1513.0 690.7 M1469.0 690.7L1469.0 714.5 M1469.0 717.5L1469.0 730.4 M1513.0 701.7L1502.0 701.7L1502.0 730.4 M1590.9 657.4L1804.0 657.4 M1590.9 668.5L1804.0 668.5 M1590.9 701.7L1601.7 701.7L1601.7 723.6L1711.9 723.6 M1612.8 668.5L1612.8 690.0 M1612.8 712.8L1612.8 723.6 M1646.0 668.5L1646.0 690.0 M1646.0 712.8L1646.0 723.6 M1678.7 657.4L1678.7 690.0 M1678.7 712.8L1678.7 723.6 M1711.9 657.4L1711.9 690.0 M1711.9 712.8L1711.9 723.6 M1711.9 723.6L1711.9 736.7 M1711.9 739.7L1711.9 752.5 M1750.5 668.5L1750.5 690.0 M1750.5 712.8L1750.5 736.7 M1750.5 739.7L1750.5 752.5 M1789.5 657.4L1789.5 690.0 M1789.5 712.8L1789.5 736.7 M1789.5 739.7L1789.5 752.5 M1353.2 663.3L1435.8 663.3L1435.8 784.1L1452.2 784.1 M1475.4 784.1L1529.8 784.1 M1513.5 773.0L1529.8 773.0 M1513.5 795.2L1529.8 795.2 M1529.8 806.2L1518.7 806.2L1518.7 813.3 M1353.2 674.3L1370.0 674.3L1370.0 741.5 M1370.0 744.5L1370.0 758.0 M1017.0 773.1L1061.4 773.1L1061.4 817.4 M1061.4 817.4L1087.5 817.4 M1061.4 817.4L1061.4 835.6 M1061.4 838.6L1061.4 852.1 M1017.0 784.2L1087.5 784.2 M1017.0 795.3L1039.2 795.3L1039.2 852.1 M1017.0 806.3L1033.5 806.3L1033.5 763.0 M1017.0 817.4L1055.6 817.4L1055.6 795.3L1087.5 795.3" stroke="#3434f0" stroke-width="0.8" fill="none" stroke-linejoin="miter"/><path d="M1228.3 376.4L1231.6 376.4 M1353.2 376.4L1356.5 376.4 M1228.3 387.4L1231.6 387.4 M1353.2 387.4L1356.5 387.4 M1228.3 398.5L1231.6 398.5 M1353.2 398.5L1356.5 398.5 M1228.3 409.5L1231.6 409.5 M1353.2 409.5L1356.5 409.5 M1228.3 420.5L1231.6 420.5 M1353.2 420.5L1356.5 420.5 M1228.3 431.6L1231.6 431.6 M1353.2 431.6L1356.5 431.6 M1228.3 442.6L1231.6 442.6 M1353.2 442.6L1356.5 442.6 M1228.3 453.6L1231.6 453.6 M1353.2 453.6L1356.5 453.6 M1228.3 464.7L1231.6 464.7 M1353.2 464.7L1356.5 464.7 M1228.3 475.7L1231.6 475.7 M1353.2 475.7L1356.5 475.7 M1228.3 486.7L1231.6 486.7 M1353.2 486.7L1356.5 486.7 M1228.3 497.8L1231.6 497.8 M1353.2 497.8L1356.5 497.8 M1228.3 508.8L1231.6 508.8 M1353.2 508.8L1356.5 508.8 M1228.3 519.8L1231.6 519.8 M1353.2 519.8L1356.5 519.8 M1228.3 530.9L1231.6 530.9 M1353.2 530.9L1356.5 530.9 M1228.3 541.9L1231.6 541.9 M1353.2 541.9L1356.5 541.9 M1228.3 552.9L1231.6 552.9 M1353.2 552.9L1356.5 552.9 M1228.3 564.0L1231.6 564.0 M1353.2 564.0L1356.5 564.0 M1228.3 575.0L1231.6 575.0 M1353.2 575.0L1356.5 575.0 M1228.3 586.0L1231.6 586.0 M1353.2 586.0L1356.5 586.0 M1228.3 597.1L1231.6 597.1 M1353.2 597.1L1356.5 597.1 M1228.3 608.1L1231.6 608.1 M1353.2 608.1L1356.5 608.1 M1228.3 619.1L1231.6 619.1 M1353.2 619.1L1356.5 619.1 M1228.3 630.2L1231.6 630.2 M1353.2 630.2L1356.5 630.2 M1228.3 641.2L1231.6 641.2 M1353.2 641.2L1356.5 641.2 M1228.3 652.2L1231.6 652.2 M1353.2 652.2L1356.5 652.2 M1228.3 663.3L1231.6 663.3 M1353.2 663.3L1356.5 663.3 M1228.3 674.3L1231.6 674.3 M1353.2 674.3L1356.5 674.3 M1228.3 685.3L1231.6 685.3 M1353.2 685.3L1356.5 685.3 M1228.3 696.4L1231.6 696.4 M1353.2 696.4L1356.5 696.4 M1228.3 707.4L1231.6 707.4 M1353.2 707.4L1356.5 707.4 M1228.3 718.4L1231.6 718.4 M1353.2 718.4L1356.5 718.4 M1022.5 526.3L1022.5 523.0 M1022.5 529.3L1022.5 532.6 M1099.4 526.3L1099.4 523.0 M1099.4 529.3L1099.4 532.6 M1123.5 575.0L1126.8 575.0 M1149.8 575.0L1153.1 575.0 M1022.5 592.2L1022.5 588.9 M1022.5 595.2L1022.5 598.5 M1099.4 592.2L1099.4 588.9 M1099.4 595.2L1099.4 598.5 M1145.9 597.1L1149.2 597.1 M1171.4 597.1L1174.7 597.1 M1022.5 640.7L1022.5 644.0 M1022.5 670.2L1022.5 666.9 M1022.5 673.2L1022.5 676.5 M1055.6 692.4L1055.6 689.1 M1055.6 695.4L1055.6 698.7 M1088.9 670.2L1088.9 666.9 M1088.9 673.2L1088.9 676.5 M1121.5 692.4L1121.5 689.1 M1121.5 695.4L1121.5 698.7 M1165.9 692.4L1165.9 689.1 M1165.9 695.4L1165.9 698.7 M1371.5 370.6L1374.8 370.6 M1397.5 370.6L1400.8 370.6 M1432.7 348.5L1436.0 348.5 M1458.5 348.5L1461.8 348.5 M1449.0 370.6L1452.3 370.6 M1475.0 370.6L1478.3 370.6 M1471.2 464.5L1474.5 464.5 M1530.2 464.5L1533.5 464.5 M1471.2 475.5L1474.5 475.5 M1530.2 475.5L1533.5 475.5 M1471.2 486.6L1474.5 486.6 M1530.2 486.6L1533.5 486.6 M1471.2 497.7L1474.5 497.7 M1530.2 497.7L1533.5 497.7 M1609.0 447.8L1612.3 447.8 M1635.4 447.8L1638.7 447.8 M1609.0 492.2L1612.3 492.2 M1635.4 492.2L1638.7 492.2 M1573.8 486.6L1570.5 486.6 M1563.1 510.0L1563.1 506.7 M1563.1 513.0L1563.1 516.3 M1645.5 455.3L1645.5 458.6 M1645.5 480.8L1645.5 484.1 M1679.1 455.3L1679.1 458.6 M1679.1 480.8L1679.1 484.1 M1706.2 510.0L1706.2 506.7 M1706.2 513.0L1706.2 516.3 M1745.2 510.0L1745.2 506.7 M1745.2 513.0L1745.2 516.3 M1685.9 563.8L1689.2 563.8 M1685.9 574.6L1689.2 574.6 M1685.9 585.4L1689.2 585.4 M1685.9 596.8L1689.2 596.8 M1685.9 607.8L1689.2 607.8 M1756.3 563.8L1759.6 563.8 M1756.3 585.4L1759.6 585.4 M1756.3 607.8L1759.6 607.8 M1585.7 552.5L1589.0 552.5 M1601.5 560.5L1601.5 563.8 M1601.5 586.0L1601.5 589.3 M1634.8 560.5L1634.8 563.8 M1634.8 586.0L1634.8 589.3 M1793.8 585.4L1790.5 585.4 M1783.7 603.9L1783.7 600.6 M1783.7 606.9L1783.7 610.2 M1509.7 657.4L1513.0 657.4 M1509.7 668.5L1513.0 668.5 M1509.7 679.6L1513.0 679.6 M1509.7 690.7L1513.0 690.7 M1509.7 701.7L1513.0 701.7 M1590.9 657.4L1594.2 657.4 M1590.9 668.5L1594.2 668.5 M1590.9 701.7L1594.2 701.7 M1459.6 690.7L1462.9 690.7 M1469.0 714.5L1469.0 711.2 M1469.0 717.5L1469.0 720.8 M1612.8 686.7L1612.8 690.0 M1612.8 712.8L1612.8 716.1 M1646.0 686.7L1646.0 690.0 M1646.0 712.8L1646.0 716.1 M1678.7 686.7L1678.7 690.0 M1678.7 712.8L1678.7 716.1 M1711.9 686.7L1711.9 690.0 M1711.9 712.8L1711.9 716.1 M1711.9 736.7L1711.9 733.4 M1711.9 739.7L1711.9 743.0 M1750.5 686.7L1750.5 690.0 M1750.5 712.8L1750.5 716.1 M1750.5 736.7L1750.5 733.4 M1750.5 739.7L1750.5 743.0 M1789.5 686.7L1789.5 690.0 M1789.5 712.8L1789.5 716.1 M1789.5 736.7L1789.5 733.4 M1789.5 739.7L1789.5 743.0 M1448.9 784.1L1452.2 784.1 M1475.4 784.1L1478.7 784.1 M1514.0 773.0L1517.3 773.0 M1514.0 795.2L1517.3 795.2 M1061.4 835.6L1061.4 832.3 M1061.4 838.6L1061.4 841.9 M1033.5 763.6L1033.5 766.9" stroke="#3c3c3c" stroke-width="0.8" fill="none"/><path d="M1022.5 638.1L1021.3 640.7L1023.7 640.7Z M1576.4 486.6L1573.8 485.4L1573.8 487.8Z M1583.1 552.5L1585.7 551.3L1585.7 553.7Z M1796.4 585.4L1793.8 584.2L1793.8 586.6Z M1457.0 690.7L1459.6 689.5L1459.6 691.9Z M1511.4 773.0L1514.0 771.8L1514.0 774.2Z M1511.4 795.2L1514.0 794.0L1514.0 796.4Z M1033.5 761.0L1032.3 763.6L1034.7 763.6Z" fill="#3434f0" stroke="#3434f0" stroke-width="0.5"/><path d="M1055.4 497.7H1077.8V519.8H1055.4Z" stroke="#3c3c3c" stroke-width="0.8" fill="none" stroke-dasharray="1.6 1.2"/><path d="M1208.4 372.4L1207.0 376.4L1208.4 380.4 M1210.8 372.4L1209.4 376.4L1210.8 380.4 M1208.4 383.4L1207.0 387.4L1208.4 391.4 M1210.8 383.4L1209.4 387.4L1210.8 391.4 M1208.4 394.5L1207.0 398.5L1208.4 402.5 M1210.8 394.5L1209.4 398.5L1210.8 402.5 M1208.4 405.5L1207.0 409.5L1208.4 413.5 M1210.8 405.5L1209.4 409.5L1210.8 413.5 M1208.4 416.5L1207.0 420.5L1208.4 424.5 M1210.8 416.5L1209.4 420.5L1210.8 424.5 M1208.4 427.6L1207.0 431.6L1208.4 435.6 M1210.8 427.6L1209.4 431.6L1210.8 435.6 M1208.4 438.6L1207.0 442.6L1208.4 446.6 M1210.8 438.6L1209.4 442.6L1210.8 446.6 M1208.4 449.6L1207.0 453.6L1208.4 457.6 M1210.8 449.6L1209.4 453.6L1210.8 457.6 M1208.4 460.7L1207.0 464.7L1208.4 468.7 M1210.8 460.7L1209.4 464.7L1210.8 468.7 M1208.4 471.7L1207.0 475.7L1208.4 479.7 M1210.8 471.7L1209.4 475.7L1210.8 479.7 M1208.4 482.7L1207.0 486.7L1208.4 490.7 M1210.8 482.7L1209.4 486.7L1210.8 490.7 M1208.4 493.8L1207.0 497.8L1208.4 501.8 M1210.8 493.8L1209.4 497.8L1210.8 501.8 M1208.4 504.8L1207.0 508.8L1208.4 512.8 M1210.8 504.8L1209.4 508.8L1210.8 512.8 M1208.4 515.8L1207.0 519.8L1208.4 523.8 M1210.8 515.8L1209.4 519.8L1210.8 523.8 M1017.7 546.9L1027.3 546.9 M1022.5 541.9L1022.5 546.9 M1094.6 546.9L1104.2 546.9 M1099.4 541.9L1099.4 546.9 M1061.7 546.9L1071.3 546.9 M1066.5 541.9L1066.5 546.9 M1201.0 549.7L1202.5 552.9L1201.0 556.1 M1203.6 549.7L1205.1 552.9L1203.6 556.1 M1201.0 582.8L1202.5 586.0L1201.0 589.2 M1203.6 582.8L1205.1 586.0L1203.6 589.2 M1017.7 613.0L1027.3 613.0 M1022.5 608.0L1022.5 613.0 M1094.6 613.0L1104.2 613.0 M1099.4 608.0L1099.4 613.0 M1132.9 592.9L1132.9 601.3 M1177.7 640.8L1187.3 640.8 M1182.5 635.8L1182.5 640.8 M1017.7 728.7L1027.3 728.7 M1022.5 723.7L1022.5 728.7 M1050.8 728.7L1060.4 728.7 M1055.6 723.7L1055.6 728.7 M1084.1 728.7L1093.7 728.7 M1088.9 723.7L1088.9 728.7 M1116.7 728.7L1126.3 728.7 M1121.5 723.7L1121.5 728.7 M1161.1 728.7L1170.7 728.7 M1165.9 723.7L1165.9 728.7 M1216.2 728.7L1225.8 728.7 M1221.0 723.7L1221.0 728.7 M1499.5 344.5L1500.9 348.5L1499.5 352.5 M1501.9 344.5L1503.3 348.5L1501.9 352.5 M1499.5 366.6L1500.9 370.6L1499.5 374.6 M1501.9 366.6L1503.3 370.6L1501.9 374.6 M1499.5 383.4L1500.9 387.4L1499.5 391.4 M1501.9 383.4L1503.3 387.4L1501.9 391.4 M1499.5 394.5L1500.9 398.5L1499.5 402.5 M1501.9 394.5L1503.3 398.5L1501.9 402.5 M1380.6 416.5L1382.0 420.5L1380.6 424.5 M1383.0 416.5L1384.4 420.5L1383.0 424.5 M1380.6 427.6L1382.0 431.6L1380.6 435.6 M1383.0 427.6L1384.4 431.6L1383.0 435.6 M1380.6 438.6L1382.0 442.6L1380.6 446.6 M1383.0 438.6L1384.4 442.6L1383.0 446.6 M1380.6 449.6L1382.0 453.6L1380.6 457.6 M1383.0 449.6L1384.4 453.6L1383.0 457.6 M1380.6 460.7L1382.0 464.7L1380.6 468.7 M1383.0 460.7L1384.4 464.7L1383.0 468.7 M1380.6 493.8L1382.0 497.8L1380.6 501.8 M1383.0 493.8L1384.4 497.8L1383.0 501.8 M1380.6 537.9L1382.0 541.9L1380.6 545.9 M1383.0 537.9L1384.4 541.9L1383.0 545.9 M1380.6 548.9L1382.0 552.9L1380.6 556.9 M1383.0 548.9L1384.4 552.9L1383.0 556.9 M1380.6 560.0L1382.0 564.0L1380.6 568.0 M1383.0 560.0L1384.4 564.0L1383.0 568.0 M1380.6 571.0L1382.0 575.0L1380.6 579.0 M1383.0 571.0L1384.4 575.0L1383.0 579.0 M1380.6 582.0L1382.0 586.0L1380.6 590.0 M1383.0 582.0L1384.4 586.0L1383.0 590.0 M1380.6 593.1L1382.0 597.1L1380.6 601.1 M1383.0 593.1L1384.4 597.1L1383.0 601.1 M1380.6 604.1L1382.0 608.1L1380.6 612.1 M1383.0 604.1L1384.4 608.1L1383.0 612.1 M1380.6 681.3L1382.0 685.3L1380.6 689.3 M1383.0 681.3L1384.4 685.3L1383.0 689.3 M1380.6 692.4L1382.0 696.4L1380.6 700.4 M1383.0 692.4L1384.4 696.4L1383.0 700.4 M1380.6 703.4L1382.0 707.4L1380.6 711.4 M1383.0 703.4L1384.4 707.4L1383.0 711.4 M1380.6 714.4L1382.0 718.4L1380.6 722.4 M1383.0 714.4L1384.4 718.4L1383.0 722.4 M1382.5 515.8L1381.1 519.8L1382.5 523.8 M1384.9 515.8L1383.5 519.8L1384.9 523.8 M1382.5 526.9L1381.1 530.9L1382.5 534.9 M1384.9 526.9L1383.5 530.9L1384.9 534.9 M1770.5 443.8L1771.9 447.8L1770.5 451.8 M1772.9 443.8L1774.3 447.8L1772.9 451.8 M1770.5 488.2L1771.9 492.2L1770.5 496.2 M1772.9 488.2L1774.3 492.2L1772.9 496.2 M1558.3 530.3L1567.9 530.3 M1563.1 525.3L1563.1 530.3 M1536.1 530.3L1545.7 530.3 M1540.9 525.3L1540.9 530.3 M1701.4 530.3L1711.0 530.3 M1706.2 525.3L1706.2 530.3 M1740.4 530.3L1750.0 530.3 M1745.2 525.3L1745.2 530.3 M1662.5 570.2L1662.5 579.0 M1651.0 615.1L1652.4 619.1L1651.0 623.1 M1653.4 615.1L1654.8 619.1L1653.4 623.1 M1651.0 626.2L1652.4 630.2L1651.0 634.2 M1653.4 626.2L1654.8 630.2L1653.4 634.2 M1762.2 623.8L1771.8 623.8 M1767.0 618.8L1767.0 623.8 M1778.9 623.8L1788.5 623.8 M1783.7 618.8L1783.7 623.8 M1489.5 676.4L1491.0 679.6L1489.5 682.8 M1492.1 676.4L1493.6 679.6L1492.1 682.8 M1464.2 734.4L1473.8 734.4 M1469.0 729.4L1469.0 734.4 M1497.2 734.4L1506.8 734.4 M1502.0 729.4L1502.0 734.4 M1805.0 653.4L1806.4 657.4L1805.0 661.4 M1807.4 653.4L1808.8 657.4L1807.4 661.4 M1805.0 664.5L1806.4 668.5L1805.0 672.5 M1807.4 664.5L1808.8 668.5L1807.4 672.5 M1707.1 756.5L1716.7 756.5 M1711.9 751.5L1711.9 756.5 M1745.7 756.5L1755.3 756.5 M1750.5 751.5L1750.5 756.5 M1784.7 756.5L1794.3 756.5 M1789.5 751.5L1789.5 756.5 M1513.9 817.3L1523.5 817.3 M1518.7 812.3L1518.7 817.3 M1365.2 762.0L1374.8 762.0 M1370.0 757.0L1370.0 762.0 M1089.0 813.4L1087.6 817.4L1089.0 821.4 M1091.4 813.4L1090.0 817.4L1091.4 821.4 M1056.6 856.1L1066.2 856.1 M1061.4 851.1L1061.4 856.1 M1089.0 780.2L1087.6 784.2L1089.0 788.2 M1091.4 780.2L1090.0 784.2L1091.4 788.2 M1034.4 856.1L1044.0 856.1 M1039.2 851.1L1039.2 856.1 M1089.0 791.3L1087.6 795.3L1089.0 799.3 M1091.4 791.3L1090.0 795.3L1091.4 799.3" stroke="#2fa02f" stroke-width="0.85" fill="none"/><circle cx="1022.5" cy="508.5" r="1.25" fill="#2020e0"/><circle cx="1099.4" cy="508.5" r="1.25" fill="#2020e0"/><circle cx="1022.5" cy="575.0" r="1.25" fill="#2020e0"/><circle cx="1099.4" cy="575.0" r="1.25" fill="#2020e0"/><circle cx="1221.0" cy="630.2" r="1.25" fill="#2020e0"/><circle cx="1221.0" cy="641.2" r="1.25" fill="#2020e0"/><circle cx="1221.0" cy="652.2" r="1.25" fill="#2020e0"/><circle cx="1022.5" cy="652.2" r="1.25" fill="#2020e0"/><circle cx="1055.6" cy="652.2" r="1.25" fill="#2020e0"/><circle cx="1088.9" cy="652.2" r="1.25" fill="#2020e0"/><circle cx="1121.5" cy="652.2" r="1.25" fill="#2020e0"/><circle cx="1121.5" cy="663.3" r="1.25" fill="#2020e0"/><circle cx="1165.9" cy="663.3" r="1.25" fill="#2020e0"/><circle cx="1221.0" cy="685.3" r="1.25" fill="#2020e0"/><circle cx="1221.0" cy="696.4" r="1.25" fill="#2020e0"/><circle cx="1221.0" cy="707.4" r="1.25" fill="#2020e0"/><circle cx="1221.0" cy="718.4" r="1.25" fill="#2020e0"/><circle cx="1419.1" cy="387.4" r="1.25" fill="#2020e0"/><circle cx="1436.3" cy="398.5" r="1.25" fill="#2020e0"/><circle cx="1463.7" cy="497.7" r="1.25" fill="#2020e0"/><circle cx="1563.1" cy="486.6" r="1.25" fill="#2020e0"/><circle cx="1645.5" cy="447.8" r="1.25" fill="#2020e0"/><circle cx="1645.5" cy="492.2" r="1.25" fill="#2020e0"/><circle cx="1679.1" cy="447.8" r="1.25" fill="#2020e0"/><circle cx="1679.1" cy="492.2" r="1.25" fill="#2020e0"/><circle cx="1706.2" cy="492.2" r="1.25" fill="#2020e0"/><circle cx="1745.2" cy="447.8" r="1.25" fill="#2020e0"/><circle cx="1679.0" cy="574.6" r="1.25" fill="#2020e0"/><circle cx="1634.8" cy="596.8" r="1.25" fill="#2020e0"/><circle cx="1634.8" cy="630.2" r="1.25" fill="#2020e0"/><circle cx="1640.0" cy="619.1" r="1.25" fill="#2020e0"/><circle cx="1601.5" cy="619.1" r="1.25" fill="#2020e0"/><circle cx="1601.5" cy="552.5" r="1.25" fill="#2020e0"/><circle cx="1767.0" cy="607.8" r="1.25" fill="#2020e0"/><circle cx="1783.7" cy="585.4" r="1.25" fill="#2020e0"/><circle cx="1469.0" cy="690.7" r="1.25" fill="#2020e0"/><circle cx="1612.8" cy="668.5" r="1.25" fill="#2020e0"/><circle cx="1612.8" cy="723.6" r="1.25" fill="#2020e0"/><circle cx="1646.0" cy="668.5" r="1.25" fill="#2020e0"/><circle cx="1646.0" cy="723.6" r="1.25" fill="#2020e0"/><circle cx="1678.7" cy="657.4" r="1.25" fill="#2020e0"/><circle cx="1678.7" cy="723.6" r="1.25" fill="#2020e0"/><circle cx="1711.9" cy="657.4" r="1.25" fill="#2020e0"/><circle cx="1711.9" cy="723.6" r="1.25" fill="#2020e0"/><circle cx="1750.5" cy="668.5" r="1.25" fill="#2020e0"/><circle cx="1789.5" cy="657.4" r="1.25" fill="#2020e0"/><circle cx="1061.4" cy="817.4" r="1.25" fill="#2020e0"/><text transform="translate(976.3 463.0) rotate(-90) scale(0.76 1)" font-size="6.8" text-anchor="start" fill="#222" font-weight="700">Перв. примен.</text><text transform="translate(976.3 595.4) rotate(-90) scale(0.76 1)" font-size="6.8" text-anchor="start" fill="#222" font-weight="700">Справ. №</text><text transform="translate(976.3 721.1) rotate(-90) scale(0.76 1)" font-size="6.8" text-anchor="start" fill="#222" font-weight="700">Подп. и дата</text><text transform="translate(976.3 776.3) rotate(-90) scale(0.76 1)" font-size="6.8" text-anchor="start" fill="#222" font-weight="700">Инв. № дубл.</text><text transform="translate(976.3 831.5) rotate(-90) scale(0.76 1)" font-size="6.8" text-anchor="start" fill="#222" font-weight="700">Взам. инв. №</text><text transform="translate(976.3 908.7) rotate(-90) scale(0.76 1)" font-size="6.8" text-anchor="start" fill="#222" font-weight="700">Подп. и дата</text><text transform="translate(976.3 963.9) rotate(-90) scale(0.76 1)" font-size="6.8" text-anchor="start" fill="#222" font-weight="700">Инв. № подл.</text><text transform="translate(1072.2 342.7) rotate(180) scale(0.668 1)" font-size="16.2" text-anchor="middle" fill="#3a3a3a">ECAD007.0133</text><text transform="translate(1734.2 867.3) scale(0.668 1)" font-size="16.2" text-anchor="middle" fill="#3a3a3a">ECAD007.0133</text><text transform="translate(1679.0 906.4) scale(0.68 1)" font-size="16.5" text-anchor="middle" fill="#3a3a3a">ddBox-C1</text><text transform="translate(1679.0 930.0) scale(0.93 1)" font-size="6.4" text-anchor="middle" fill="#3a3a3a" font-style="italic">Схема электрическая принципиальная</text><text transform="translate(1811.4 953.4) scale(0.82 1)" font-size="14" text-anchor="middle" fill="#3a3a3a">Eremex</text><text transform="translate(1772.8 885.8) scale(0.9 1)" font-size="6.4" text-anchor="middle" fill="#3a3a3a" font-style="italic">Лит.</text><text transform="translate(1808.1 885.8) scale(0.9 1)" font-size="6.4" text-anchor="middle" fill="#3a3a3a" font-style="italic">Масса</text><text transform="translate(1846.7 885.8) scale(0.9 1)" font-size="6.4" text-anchor="middle" fill="#3a3a3a" font-style="italic">Масштаб</text><text transform="translate(1758.4 930.0) scale(0.9 1)" font-size="6.4" text-anchor="start" fill="#3a3a3a" font-style="italic">Лист</text><text transform="translate(1793.7 930.0) scale(0.9 1)" font-size="6.4" text-anchor="middle" fill="#3a3a3a" font-style="italic">1</text><text transform="translate(1802.6 930.0) scale(0.9 1)" font-size="6.4" text-anchor="start" fill="#3a3a3a" font-style="italic">Листов</text><text transform="translate(1851.1 930.0) scale(0.9 1)" font-size="6.4" text-anchor="middle" fill="#3a3a3a" font-style="italic">5</text><text transform="translate(1466.1 896.9) scale(0.88 1)" font-size="6.2" text-anchor="middle" fill="#3a3a3a" font-style="italic">Изм.</text><text transform="translate(1484.8 896.9) scale(0.88 1)" font-size="6.2" text-anchor="middle" fill="#3a3a3a" font-style="italic">Лист</text><text transform="translate(1521.2 896.9) scale(0.88 1)" font-size="6.2" text-anchor="middle" fill="#3a3a3a" font-style="italic">№ докум.</text><text transform="translate(1563.2 896.9) scale(0.88 1)" font-size="6.2" text-anchor="middle" fill="#3a3a3a" font-style="italic">Подп.</text><text transform="translate(1590.7 896.9) scale(0.88 1)" font-size="6.2" text-anchor="middle" fill="#3a3a3a" font-style="italic">Дата</text><text transform="translate(1460.5 907.9) scale(0.88 1)" font-size="6.4" text-anchor="start" fill="#3a3a3a" font-style="italic">Разраб.</text><text transform="translate(1460.5 918.9) scale(0.88 1)" font-size="6.4" text-anchor="start" fill="#3a3a3a" font-style="italic">Пров.</text><text transform="translate(1460.5 941.0) scale(0.88 1)" font-size="6.4" text-anchor="start" fill="#3a3a3a" font-style="italic">Т. контр.</text><text transform="translate(1460.5 952.0) scale(0.88 1)" font-size="6.4" text-anchor="start" fill="#3a3a3a" font-style="italic">Н. контр.</text><text transform="translate(1460.5 963.1) scale(0.88 1)" font-size="6.4" text-anchor="start" fill="#3a3a3a" font-style="italic">Утв.</text><text transform="translate(1672.4 973.6) scale(0.9 1)" font-size="6.4" text-anchor="middle" fill="#3a3a3a" font-style="italic">Копировал</text><text transform="translate(1805.9 973.6) scale(0.92 1)" font-size="6.4" text-anchor="middle" fill="#3a3a3a" font-style="italic">Формат А3</text><text transform="translate(1366.0 898.2) scale(0.88 1)" font-size="6.6" text-anchor="middle" fill="#3a3a3a">Выв 30 - VCAP для STM32F41Rxx</text><text transform="translate(1278.7 918.6) scale(0.88 1)" font-size="6.4" text-anchor="middle" fill="#3a3a3a">Исполнение</text><text transform="translate(1353.4 913.0) scale(0.88 1)" font-size="6.4" text-anchor="middle" fill="#3a3a3a">DD100</text><text transform="translate(1331.5 924.2) scale(0.88 1)" font-size="6.4" text-anchor="middle" fill="#3a3a3a">STM32F072</text><text transform="translate(1375.4 924.2) scale(0.88 1)" font-size="6.4" text-anchor="middle" fill="#3a3a3a">STM32F411</text><text transform="translate(1419.6 918.6) scale(0.88 1)" font-size="6.4" text-anchor="middle" fill="#3a3a3a">C110</text><text transform="translate(1251.0 935.2) scale(0.88 1)" font-size="6.4" text-anchor="start" fill="#3a3a3a">ECAD007.01-01</text><text transform="translate(1251.0 946.5) scale(0.88 1)" font-size="6.4" text-anchor="start" fill="#3a3a3a">ECAD007.01-02</text><text transform="translate(1331.5 935.6) scale(1 1)" font-size="6" text-anchor="middle" fill="#3a3a3a">▴</text><text transform="translate(1375.4 946.9) scale(1 1)" font-size="6" text-anchor="middle" fill="#3a3a3a">▴</text><text transform="translate(1419.6 935.2) scale(0.88 1)" font-size="6.4" text-anchor="middle" fill="#3a3a3a">Не уст.</text><text transform="translate(1419.6 946.5) scale(0.88 1)" font-size="6.4" text-anchor="middle" fill="#3a3a3a">Уст.</text><text transform="translate(1293.0 368.2) scale(0.78 1)" font-size="9.3" text-anchor="middle" fill="#3a3a3a">DD100</text><text transform="translate(1293.5 394.4) scale(0.8 1)" font-size="6.4" text-anchor="middle" fill="#3a3a3a">MCU</text><text transform="translate(1298.0 730.4) scale(0.8 1)" font-size="6.4" text-anchor="middle" fill="#3a3a3a">STM32F072RB</text><text transform="translate(1066.5 484.0) scale(0.78 1)" font-size="9.3" text-anchor="middle" fill="#3a3a3a">ZQ100</text><text transform="translate(1066.5 493.0) scale(0.8 1)" font-size="6.4" text-anchor="middle" fill="#3a3a3a">32,768 кГц</text><text transform="translate(1033.6 523.1) scale(0.78 1)" font-size="9.3" text-anchor="start" fill="#3a3a3a">C100</text><text transform="translate(1033.6 532.4) scale(0.8 1)" font-size="6.8" text-anchor="start" fill="#3a3a3a">15</text><text transform="translate(1033.6 541.6) scale(0.8 1)" font-size="6.8" text-anchor="start" fill="#3a3a3a">50 В</text><text transform="translate(1110.6 523.1) scale(0.78 1)" font-size="9.3" text-anchor="start" fill="#3a3a3a">C106</text><text transform="translate(1110.6 532.4) scale(0.8 1)" font-size="6.8" text-anchor="start" fill="#3a3a3a">15</text><text transform="translate(1110.6 541.6) scale(0.8 1)" font-size="6.8" text-anchor="start" fill="#3a3a3a">50 В</text><text transform="translate(1055.4 566.3) scale(0.78 1)" font-size="9.3" text-anchor="middle" fill="#3a3a3a">ZQ101</text><text transform="translate(1054.5 588.6) scale(0.8 1)" font-size="6.4" text-anchor="middle" fill="#3a3a3a">8 МГц</text><text transform="translate(1033.6 588.7) scale(0.78 1)" font-size="9.3" text-anchor="start" fill="#3a3a3a">C101</text><text transform="translate(1033.6 598.0) scale(0.8 1)" font-size="6.8" text-anchor="start" fill="#3a3a3a">15</text><text transform="translate(1033.6 607.2) scale(0.8 1)" font-size="6.8" text-anchor="start" fill="#3a3a3a">50 В</text><text transform="translate(1110.6 588.7) scale(0.78 1)" font-size="9.3" text-anchor="start" fill="#3a3a3a">C107</text><text transform="translate(1110.6 598.0) scale(0.8 1)" font-size="6.8" text-anchor="start" fill="#3a3a3a">15</text><text transform="translate(1110.6 607.2) scale(0.8 1)" font-size="6.8" text-anchor="start" fill="#3a3a3a">50 В</text><text transform="translate(1137.8 568.1) scale(0.78 1)" font-size="9.3" text-anchor="middle" fill="#3a3a3a">R100</text><text transform="translate(1137.8 586.0) scale(0.8 1)" font-size="6.4" text-anchor="middle" fill="#3a3a3a">560</text><text transform="translate(1160.4 590.2) scale(0.78 1)" font-size="9.3" text-anchor="middle" fill="#3a3a3a">R101</text><text transform="translate(1160.4 608.3) scale(0.8 1)" font-size="6.4" text-anchor="middle" fill="#3a3a3a">1 к</text><text transform="translate(1178.0 620.6) scale(1 1)" font-size="7" text-anchor="middle" fill="#3a3a3a">+</text><text transform="translate(1178.5 631.6) scale(1 1)" font-size="7" text-anchor="middle" fill="#3a3a3a">-</text><text transform="translate(1190.5 621.0) scale(0.78 1)" font-size="9.3" text-anchor="start" fill="#3a3a3a">GB100</text><text transform="translate(1033.5 666.1) scale(0.78 1)" font-size="9.3" text-anchor="start" fill="#3a3a3a">C102</text><text transform="translate(1033.5 675.4) scale(0.8 1)" font-size="6.8" text-anchor="start" fill="#3a3a3a">0,1 мк</text><text transform="translate(1033.5 684.6) scale(0.8 1)" font-size="6.8" text-anchor="start" fill="#3a3a3a">25 В</text><text transform="translate(1066.7 688.3) scale(0.78 1)" font-size="9.3" text-anchor="start" fill="#3a3a3a">C103</text><text transform="translate(1066.7 697.6) scale(0.8 1)" font-size="6.8" text-anchor="start" fill="#3a3a3a">0,1 мк</text><text transform="translate(1066.7 706.8) scale(0.8 1)" font-size="6.8" text-anchor="start" fill="#3a3a3a">25 В</text><text transform="translate(1100.0 666.1) scale(0.78 1)" font-size="9.3" text-anchor="start" fill="#3a3a3a">C105</text><text transform="translate(1100.0 675.4) scale(0.8 1)" font-size="6.8" text-anchor="start" fill="#3a3a3a">0,1 мк</text><text transform="translate(1100.0 684.6) scale(0.8 1)" font-size="6.8" text-anchor="start" fill="#3a3a3a">25 В</text><text transform="translate(1132.6 688.3) scale(0.78 1)" font-size="9.3" text-anchor="start" fill="#3a3a3a">C108</text><text transform="translate(1132.6 697.6) scale(0.8 1)" font-size="6.8" text-anchor="start" fill="#3a3a3a">0,01 мк</text><text transform="translate(1132.6 706.8) scale(0.8 1)" font-size="6.8" text-anchor="start" fill="#3a3a3a">50 В</text><text transform="translate(1177.0 688.3) scale(0.78 1)" font-size="9.3" text-anchor="start" fill="#3a3a3a">C109</text><text transform="translate(1177.0 697.6) scale(0.8 1)" font-size="6.8" text-anchor="start" fill="#3a3a3a">1 мк</text><text transform="translate(1177.0 706.8) scale(0.8 1)" font-size="6.8" text-anchor="start" fill="#3a3a3a">10 В</text><text transform="translate(1386.2 364.1) scale(0.78 1)" font-size="9.3" text-anchor="middle" fill="#3a3a3a">R102</text><text transform="translate(1386.2 382.5) scale(0.8 1)" font-size="6.4" text-anchor="middle" fill="#3a3a3a">1 к</text><text transform="translate(1447.0 342.5) scale(0.78 1)" font-size="9.3" text-anchor="middle" fill="#3a3a3a">R103</text><text transform="translate(1447.0 360.6) scale(0.8 1)" font-size="6.4" text-anchor="middle" fill="#3a3a3a">1 к</text><text transform="translate(1463.7 364.1) scale(0.78 1)" font-size="9.3" text-anchor="middle" fill="#3a3a3a">R104</text><text transform="translate(1463.7 382.5) scale(0.8 1)" font-size="6.4" text-anchor="middle" fill="#3a3a3a">1 к</text><text transform="translate(1502.5 456.4) scale(0.78 1)" font-size="9.3" text-anchor="middle" fill="#3a3a3a">DD101</text><text transform="translate(1502.5 471.6) scale(0.8 1)" font-size="6.4" text-anchor="middle" fill="#3a3a3a">RTX</text><text transform="translate(1502.5 510.0) scale(0.8 1)" font-size="6.4" text-anchor="middle" fill="#3a3a3a">ST485ECD</text><text transform="translate(1623.7 441.0) scale(0.78 1)" font-size="9.3" text-anchor="middle" fill="#3a3a3a">R106</text><text transform="translate(1623.7 460.0) scale(0.8 1)" font-size="6.4" text-anchor="middle" fill="#3a3a3a">10</text><text transform="translate(1623.7 485.6) scale(0.78 1)" font-size="9.3" text-anchor="middle" fill="#3a3a3a">R107</text><text transform="translate(1623.7 504.6) scale(0.8 1)" font-size="6.4" text-anchor="middle" fill="#3a3a3a">10</text><text transform="translate(1652.3 468.1) scale(0.78 1)" font-size="9.3" text-anchor="start" fill="#3a3a3a">R110</text><text transform="translate(1652.3 477.4) scale(0.8 1)" font-size="6.8" text-anchor="start" fill="#3a3a3a">240</text><text transform="translate(1685.5 468.1) scale(0.78 1)" font-size="9.3" text-anchor="start" fill="#3a3a3a">R112</text><text transform="translate(1685.5 477.4) scale(0.8 1)" font-size="6.8" text-anchor="start" fill="#3a3a3a">240</text><text transform="translate(1574.5 506.2) scale(0.78 1)" font-size="9.3" text-anchor="start" fill="#3a3a3a">C112</text><text transform="translate(1574.5 515.5) scale(0.8 1)" font-size="6.8" text-anchor="start" fill="#3a3a3a">0,1 мк</text><text transform="translate(1574.5 524.7) scale(0.8 1)" font-size="6.8" text-anchor="start" fill="#3a3a3a">25 В</text><text transform="translate(1717.5 506.2) scale(0.78 1)" font-size="9.3" text-anchor="start" fill="#3a3a3a">C113</text><text transform="translate(1717.5 515.5) scale(0.8 1)" font-size="6.8" text-anchor="start" fill="#3a3a3a">330</text><text transform="translate(1717.5 524.7) scale(0.8 1)" font-size="6.8" text-anchor="start" fill="#3a3a3a">50 В</text><text transform="translate(1756.3 506.2) scale(0.78 1)" font-size="9.3" text-anchor="start" fill="#3a3a3a">C115</text><text transform="translate(1756.3 515.5) scale(0.8 1)" font-size="6.8" text-anchor="start" fill="#3a3a3a">330</text><text transform="translate(1756.3 524.7) scale(0.8 1)" font-size="6.8" text-anchor="start" fill="#3a3a3a">50 В</text><text transform="translate(1723.0 555.8) scale(0.78 1)" font-size="9.3" text-anchor="middle" fill="#3a3a3a">DD103</text><text transform="translate(1723.0 571.2) scale(0.8 1)" font-size="6.4" text-anchor="middle" fill="#3a3a3a">EEPROM</text><text transform="translate(1723.0 620.0) scale(0.8 1)" font-size="6.4" text-anchor="middle" fill="#3a3a3a">M24C16-MN6P</text><text transform="translate(1608.3 573.3) scale(0.78 1)" font-size="9.3" text-anchor="start" fill="#3a3a3a">R105</text><text transform="translate(1608.3 582.6) scale(0.8 1)" font-size="6.8" text-anchor="start" fill="#3a3a3a">5,1 к</text><text transform="translate(1641.5 573.3) scale(0.78 1)" font-size="9.3" text-anchor="start" fill="#3a3a3a">R109</text><text transform="translate(1641.5 582.6) scale(0.8 1)" font-size="6.8" text-anchor="start" fill="#3a3a3a">5,1 к</text><text transform="translate(1794.8 600.1) scale(0.78 1)" font-size="9.3" text-anchor="start" fill="#3a3a3a">C117</text><text transform="translate(1794.8 609.4) scale(0.8 1)" font-size="6.8" text-anchor="start" fill="#3a3a3a">0,1 мк</text><text transform="translate(1794.8 618.6) scale(0.8 1)" font-size="6.8" text-anchor="start" fill="#3a3a3a">25 В</text><text transform="translate(1552.0 649.5) scale(0.78 1)" font-size="9.3" text-anchor="middle" fill="#3a3a3a">DD102</text><text transform="translate(1552.0 665.0) scale(0.8 1)" font-size="6.4" text-anchor="middle" fill="#3a3a3a">CAN</text><text transform="translate(1552.0 714.2) scale(0.8 1)" font-size="6.4" text-anchor="middle" fill="#3a3a3a">TJA1040T</text><text transform="translate(1480.7 710.4) scale(0.78 1)" font-size="9.3" text-anchor="start" fill="#3a3a3a">C111</text><text transform="translate(1480.7 719.7) scale(0.8 1)" font-size="6.8" text-anchor="start" fill="#3a3a3a">0,1 мк</text><text transform="translate(1480.7 728.9) scale(0.8 1)" font-size="6.8" text-anchor="start" fill="#3a3a3a">25 В</text><text transform="translate(1619.4 700.3) scale(0.78 1)" font-size="9.3" text-anchor="start" fill="#3a3a3a">R108</text><text transform="translate(1619.4 709.6) scale(0.8 1)" font-size="6.8" text-anchor="start" fill="#3a3a3a">120</text><text transform="translate(1652.4 700.3) scale(0.78 1)" font-size="9.3" text-anchor="start" fill="#3a3a3a">R111</text><text transform="translate(1652.4 709.6) scale(0.8 1)" font-size="6.8" text-anchor="start" fill="#3a3a3a">120</text><text transform="translate(1685.6 700.3) scale(0.78 1)" font-size="9.3" text-anchor="start" fill="#3a3a3a">R113</text><text transform="translate(1685.6 709.6) scale(0.8 1)" font-size="6.8" text-anchor="start" fill="#3a3a3a">120</text><text transform="translate(1718.9 700.3) scale(0.78 1)" font-size="9.3" text-anchor="start" fill="#3a3a3a">R114</text><text transform="translate(1718.9 709.6) scale(0.8 1)" font-size="6.8" text-anchor="start" fill="#3a3a3a">120</text><text transform="translate(1757.2 700.3) scale(0.78 1)" font-size="9.3" text-anchor="start" fill="#3a3a3a">R115</text><text transform="translate(1757.2 709.6) scale(0.8 1)" font-size="6.8" text-anchor="start" fill="#3a3a3a">100</text><text transform="translate(1795.8 700.3) scale(0.78 1)" font-size="9.3" text-anchor="start" fill="#3a3a3a">R116</text><text transform="translate(1795.8 709.6) scale(0.8 1)" font-size="6.8" text-anchor="start" fill="#3a3a3a">100</text><text transform="translate(1723.0 732.0) scale(0.78 1)" font-size="9.3" text-anchor="start" fill="#3a3a3a">C114</text><text transform="translate(1723.0 741.3) scale(0.8 1)" font-size="6.8" text-anchor="start" fill="#3a3a3a">4700</text><text transform="translate(1723.0 750.5) scale(0.8 1)" font-size="6.8" text-anchor="start" fill="#3a3a3a">50 В</text><text transform="translate(1761.9 732.0) scale(0.78 1)" font-size="9.3" text-anchor="start" fill="#3a3a3a">C116</text><text transform="translate(1761.9 741.3) scale(0.8 1)" font-size="6.8" text-anchor="start" fill="#3a3a3a">560</text><text transform="translate(1761.9 750.5) scale(0.8 1)" font-size="6.8" text-anchor="start" fill="#3a3a3a">50 В</text><text transform="translate(1800.6 732.0) scale(0.78 1)" font-size="9.3" text-anchor="start" fill="#3a3a3a">C118</text><text transform="translate(1800.6 741.3) scale(0.8 1)" font-size="6.8" text-anchor="start" fill="#3a3a3a">560</text><text transform="translate(1800.6 750.5) scale(0.8 1)" font-size="6.8" text-anchor="start" fill="#3a3a3a">50 В</text><text transform="translate(1463.3 777.9) scale(0.78 1)" font-size="9.3" text-anchor="middle" fill="#3a3a3a">R117</text><text transform="translate(1463.3 796.5) scale(0.8 1)" font-size="6.4" text-anchor="middle" fill="#3a3a3a">100</text><text transform="translate(1544.0 766.8) scale(0.78 1)" font-size="9.3" text-anchor="start" fill="#3a3a3a">XS101</text><text transform="translate(1381.0 737.4) scale(0.78 1)" font-size="9.3" text-anchor="start" fill="#3a3a3a">C110</text><text transform="translate(1381.0 746.7) scale(0.8 1)" font-size="6.8" text-anchor="start" fill="#3a3a3a">4,7 мк</text><text transform="translate(1381.0 755.9) scale(0.8 1)" font-size="6.8" text-anchor="start" fill="#3a3a3a">10 В</text><text transform="translate(1005.6 754.6) scale(0.78 1)" font-size="9.3" text-anchor="start" fill="#3a3a3a">XS100</text><text transform="translate(1072.1 831.8) scale(0.78 1)" font-size="9.3" text-anchor="start" fill="#3a3a3a">C104</text><text transform="translate(1072.1 841.1) scale(0.8 1)" font-size="6.8" text-anchor="start" fill="#3a3a3a">0,1 мк</text><text transform="translate(1072.1 850.3) scale(0.8 1)" font-size="6.8" text-anchor="start" fill="#3a3a3a">25 В</text></svg>
<div class="r" style="left:1176px;top:264px;width:323px;height:32px;background:#fff;border-radius:8px;box-shadow:0 2px 6px rgba(0,0,0,.28);"></div>
<div class="r" style="left:1181px;top:267px;width:25px;height:25px;background:#b9dcd9;border-radius:6px;"></div>
<svg class="ic" style="left:1186.0px;top:272.0px;width:16px;height:16px;" viewBox="0 0 16 16"><path d="M4 1.8 L4 12.8 L6.7 10.4 L8.7 14.6 L10.6 13.7 L8.7 9.7 L12.2 9.4 Z" stroke="#444" stroke-width="1.1" fill="#fff" stroke-linecap="round" stroke-linejoin="round" /></svg>
<div class="r" style="left:1211px;top:272px;width:1px;height:16px;background:#cfd6d6;"></div>
<div class="r" style="left:1262px;top:272px;width:1px;height:16px;background:#cfd6d6;"></div>
<div class="r" style="left:1295px;top:272px;width:1px;height:16px;background:#cfd6d6;"></div>
<div class="r" style="left:1346px;top:272px;width:1px;height:16px;background:#cfd6d6;"></div>
<div class="r" style="left:1380px;top:272px;width:1px;height:16px;background:#cfd6d6;"></div>
<div class="r" style="left:1414px;top:272px;width:1px;height:16px;background:#cfd6d6;"></div>
<div class="r" style="left:1465px;top:272px;width:1px;height:16px;background:#cfd6d6;"></div>
<svg class="ic" style="left:1219.0px;top:271.0px;width:18px;height:18px;" viewBox="0 0 16 16"><rect x="2" y="2" width="12" height="12" rx="1.2" stroke="#5a67d8" stroke-width="1.2" fill="#fff"/><path d="M8 4.5 V11.5 M4.5 8 H11.5" stroke="#555" stroke-width="0.9" fill="none" stroke-linecap="round" stroke-linejoin="round" stroke-dasharray="1.2 0.9"/></svg>
<svg class="ic" style="left:1241.0px;top:275.0px;width:12px;height:12px;" viewBox="0 0 16 16"><path d="M4.6 6.2 L8 9.6 L11.4 6.2" stroke="#4c5456" stroke-width="1.4" fill="none" stroke-linecap="round" stroke-linejoin="round" /></svg>
<svg class="ic" style="left:1270.0px;top:271.0px;width:18px;height:18px;" viewBox="0 0 16 16"><text x="1.5" y="10" font-size="10.5" font-family="Liberation Sans,sans-serif" fill="#555">A</text><path d="M10 6 H13.5 V13 H6.5 V11.5" stroke="#5a67d8" stroke-width="1.1" fill="none" stroke-linecap="round" stroke-linejoin="round" /></svg>
<svg class="ic" style="left:1303.0px;top:271.0px;width:18px;height:18px;" viewBox="0 0 16 16"><rect x="2" y="2.5" width="12" height="11" rx="1" stroke="#555" stroke-width="1.1" fill="#fff"/><path d="M2.5 10.5 L6 7.5 L9 10 L11 8.5 L13.5 11.5" stroke="#2f9e44" stroke-width="1.3" fill="none" stroke-linecap="round" stroke-linejoin="round" /><circle cx="10.8" cy="5.3" r="1.3" stroke="#a8781c" stroke-width="0.9" fill="none"/></svg>
<svg class="ic" style="left:1325.0px;top:275.0px;width:12px;height:12px;" viewBox="0 0 16 16"><path d="M4.6 6.2 L8 9.6 L11.4 6.2" stroke="#4c5456" stroke-width="1.4" fill="none" stroke-linecap="round" stroke-linejoin="round" /></svg>
<svg class="ic" style="left:1354.0px;top:271.0px;width:18px;height:18px;" viewBox="0 0 16 16"><rect x="5.5" y="1.8" width="5" height="12.4" rx="1.5" stroke="#5a67d8" stroke-width="1.2" fill="#dfe3fb"/><path d="M3 5 H5.5 M3 8 H5.5 M3 11 H5.5 M10.5 5 H13 M10.5 8 H13 M10.5 11 H13" stroke="#5a67d8" stroke-width="1.2" fill="none" stroke-linecap="round" stroke-linejoin="round" /></svg>
<svg class="ic" style="left:1388.0px;top:271.0px;width:18px;height:18px;" viewBox="0 0 16 16"><text x="1.5" y="6.5" font-size="6.5" font-weight="700" font-family="Liberation Sans,sans-serif" fill="#555">N°</text><rect x="6" y="5.5" width="4.5" height="9" rx="1.3" stroke="#5a67d8" stroke-width="1.1" fill="#dfe3fb"/><path d="M3.8 8.5 H6 M3.8 11.5 H6 M10.5 6.5 H12.7 M10.5 9 H12.7 M10.5 11.5 H12.7" stroke="#5a67d8" stroke-width="1.1" fill="none" stroke-linecap="round" stroke-linejoin="round" /></svg>
<svg class="ic" style="left:1422.0px;top:271.0px;width:18px;height:18px;" viewBox="0 0 16 16"><circle cx="4.5" cy="4" r="1.8" stroke="#5a67d8" stroke-width="1.2" fill="none"/><circle cx="12" cy="11.5" r="1.8" stroke="#5a67d8" stroke-width="1.2" fill="none"/><path d="M4.5 5.8 V9.5 Q4.5 11.5 6.5 11.5 H10.2" stroke="#5a67d8" stroke-width="1.2" fill="none" stroke-linecap="round" stroke-linejoin="round" /></svg>
<svg class="ic" style="left:1444.0px;top:275.0px;width:12px;height:12px;" viewBox="0 0 16 16"><path d="M4.6 6.2 L8 9.6 L11.4 6.2" stroke="#4c5456" stroke-width="1.4" fill="none" stroke-linecap="round" stroke-linejoin="round" /></svg>
<svg class="ic" style="left:1473.0px;top:271.0px;width:18px;height:18px;" viewBox="0 0 16 16"><path d="M9.5 2 L6.5 7 L9 11 L13.5 8.5 L14.5 5.5 M6.5 7 L4 10.5" stroke="#5a67d8" stroke-width="1.1" fill="none" stroke-linecap="round" stroke-linejoin="round" /><path d="M2.5 13 L4 10.5 L6 12 Z" stroke="#d64545" stroke-width="1.0" fill="#d64545" stroke-linecap="round" stroke-linejoin="round" /></svg>
<div class="r" style="left:763px;top:329px;width:116px;height:58px;background:#fff;border-radius:7px;box-shadow:0 2px 6px rgba(0,0,0,.28);"></div>
<div class="r" style="left:763px;top:329px;width:116px;height:26px;background:#f1f3f2;border-radius:7px 7px 0 0;"></div>
<div class="r" style="left:763px;top:355px;width:116px;height:1px;background:#d7dfde;"></div>
<div class="t" style="top:332.0px;font-size:11.5px;color:#2b2d3a;line-height:20px;font-weight:700;left:771px;">Панели</div>
<svg class="ic" style="left:859.0px;top:335.0px;width:14px;height:14px;" viewBox="0 0 16 16"><path d="M3.6 3.6 L12.4 12.4 M12.4 3.6 L3.6 12.4" stroke="#3c4a4c" stroke-width="1.15" fill="none" stroke-linecap="round" stroke-linejoin="round" /></svg>
<svg class="ic" style="left:769.0px;top:362.0px;width:18px;height:18px;" viewBox="0 0 16 16"><path d="M5.5 11.5 H4.5 V3 H10 V6" stroke="#555" stroke-width="1.1" fill="none" stroke-linecap="round" stroke-linejoin="round" /><path d="M2.5 5 H4.5 M2.5 7.5 H4.5 M2.5 10 H4.5" stroke="#555" stroke-width="1.0" fill="none" stroke-linecap="round" stroke-linejoin="round" /><circle cx="9.7" cy="10" r="2.7" stroke="#5a67d8" stroke-width="1.1" fill="#fff"/><path d="M11.7 12 L14 14.3" stroke="#5a67d8" stroke-width="1.2" fill="none" stroke-linecap="round" stroke-linejoin="round" /></svg>
<div class="r" style="left:796px;top:362px;width:1px;height:18px;background:#cfd6d6;"></div>
<div class="r" style="left:800px;top:359px;width:25px;height:24px;background:#b9dcd9;border-radius:6px;"></div>
<svg class="ic" style="left:803.0px;top:362.0px;width:18px;height:18px;" viewBox="0 0 16 16"><path d="M5 3.5 H4 A2 2 0 0 0 2 5.5 V9.5 A2 2 0 0 0 4 11.5 H5 M11 3.5 H12 A2 2 0 0 1 14 5.5 V9.5 A2 2 0 0 1 12 11.5 H11" stroke="#5a67d8" stroke-width="1.2" fill="none" stroke-linecap="round" stroke-linejoin="round" /><path d="M7 1.5 V7.5 M7 4.5 L9.5 4.5 M4 9 L6.5 11.5 L4 14 Z M6.5 11.5 H9 M9 9.5 V13.5 M9 11.5 H11" stroke="#5a67d8" stroke-width="1.0" fill="none" stroke-linecap="round" stroke-linejoin="round" /></svg>
<svg class="ic" style="left:829.0px;top:362.0px;width:18px;height:18px;" viewBox="0 0 16 16"><path d="M2.5 13 V4 A1.5 1.5 0 0 1 4 2.5 H12 A1.5 1.5 0 0 1 13.5 4 V13 Q11 14.3 8 13 Q5 11.8 2.5 13 Z" stroke="#2f9e44" stroke-width="1.1" fill="#eaf6ea" stroke-linecap="round" stroke-linejoin="round" /><rect x="4.8" y="4.8" width="3.4" height="3.4" stroke="#444" stroke-width="0.9" fill="none"/><path d="M10 4.5 V8.5 M11.7 4.5 V8.5 M4.8 10.2 H11.7" stroke="#444" stroke-width="0.9" fill="none" stroke-linecap="round" stroke-linejoin="round" /></svg>
<svg class="ic" style="left:855.0px;top:362.0px;width:18px;height:18px;" viewBox="0 0 16 16"><path d="M3.5 13 V2.5 H9 L12.5 6 V8" stroke="#5a67d8" stroke-width="1.1" fill="#dfe3fb" stroke-linecap="round" stroke-linejoin="round" /><path d="M9 2.5 V6 H12.5" stroke="#5a67d8" stroke-width="0.9" fill="none" stroke-linecap="round" stroke-linejoin="round" /><path d="M7.5 11.5 L9.7 13.7 L14 9.3" stroke="#2f9e44" stroke-width="1.9" fill="none" stroke-linecap="round" stroke-linejoin="round" /></svg>
<div class="r" style="left:482px;top:834px;width:427px;height:130px;background:#fff;border-radius:8px;box-shadow:0 2px 7px rgba(0,0,0,.25);"></div>
<svg class="ic" style="left:486.5px;top:838.5px;width:17px;height:17px;" viewBox="0 0 16 16"><rect x="2.9" y="5.5" width="7.6" height="8.6" rx="1.3" fill="#dfe3fb" stroke="#5a67d8" stroke-width="1.1"/><rect x="4.8" y="1.7" width="7.6" height="9" rx="1.3" fill="#fbd3d3" stroke="#d64545" stroke-width="1.1"/><path d="M4.8 8.8 H12.4" stroke="#d64545" stroke-width="1.0" fill="none" stroke-linecap="round" stroke-linejoin="round" /><circle cx="11.6" cy="12.3" r="3" fill="#444" stroke="#fff" stroke-width="0.6"/><path d="M11.6 10.7 V13.9 M10 12.3 H13.2" stroke="#fff" stroke-width="1.0" fill="none" stroke-linecap="round" stroke-linejoin="round" /></svg>
<div class="t" style="top:837.0px;font-size:11.65px;color:#585a6b;line-height:20px;left:512px;">Создать новую библиотеку</div>
<svg class="ic" style="left:486.5px;top:866.0px;width:17px;height:17px;" viewBox="0 0 16 16"><path d="M8 1.2 L14.8 8 L8 14.8 L1.2 8 Z" fill="#1c8a2c"/><rect x="6.3" y="4.6" width="3.4" height="6.8" rx="0.9" fill="#4a4f50" stroke="#e8f5e8" stroke-width="0.8"/></svg>
<div class="t" style="top:864.5px;font-size:11.65px;color:#585a6b;line-height:20px;left:512px;">Открыть библиотеку P-CAD...</div>
<svg class="ic" style="left:486.5px;top:890.5px;width:17px;height:17px;" viewBox="0 0 16 16"><path d="M5.6 4 L7.6 2.9 L11.6 5.6 L11.6 9.8 L7.6 12.9 L5.8 11.6 L5.8 9.1 L8.6 7.6" stroke="#a8781c" stroke-width="1.9" fill="none" stroke-linecap="round" stroke-linejoin="round" /></svg>
<div class="t" style="top:889.0px;font-size:11.65px;color:#585a6b;line-height:20px;left:512px;">Открыть библиотеку Altium Designer (*.SchLib, *.PcbLib, *.IntLib)</div>
<svg class="ic" style="left:486.5px;top:915.0px;width:17px;height:17px;" viewBox="0 0 16 16"><rect x="2.5" y="2.5" width="11" height="11" rx="1.2" stroke="#5a67d8" stroke-width="1.1" fill="#dfe3fb"/><path d="M4.5 5 H7 L8.5 7 H11.5 M4.5 7.5 H6 L8 10 H11.5 M6.5 10.5 H9" stroke="#5a67d8" stroke-width="0.8" fill="none" stroke-linecap="round" stroke-linejoin="round" /></svg>
<div class="t" style="top:913.5px;font-size:11.65px;color:#585a6b;line-height:20px;left:512px;">Открыть библиотеку PADS ASCII (D, C)...</div>
<svg class="ic" style="left:486.5px;top:942.5px;width:17px;height:17px;" viewBox="0 0 16 16"><rect x="2.5" y="6" width="7.6" height="8.3" rx="1.3" fill="#dfe3fb" stroke="#5a67d8" stroke-width="1.1"/><path d="M2.5 12.4 H8" stroke="#5a67d8" stroke-width="1.0" fill="none" stroke-linecap="round" stroke-linejoin="round" /><rect x="4.3" y="3" width="7.6" height="8.8" rx="1.3" fill="#fbd3d3" stroke="#d64545" stroke-width="1.1"/><path d="M4.3 9.8 H11.9" stroke="#d64545" stroke-width="1.0" fill="none" stroke-linecap="round" stroke-linejoin="round" /><rect x="10.2" y="0.8" width="5" height="6.2" fill="#fff"/><path d="M12.6 1 V6" stroke="#333" stroke-width="1.2" fill="none" stroke-linecap="round" stroke-linejoin="round" /><path d="M10.6 4.2 L12.6 6.8 L14.6 4.2 Z" fill="#333"/></svg>
<div class="t" style="top:941.0px;font-size:11.65px;color:#585a6b;line-height:20px;left:512px;">Импортировать из</div>
<div class="r" style="left:485px;top:860.5px;width:421px;height:1.0px;background:#d3dbda;"></div>
<div class="r" style="left:485px;top:936.5px;width:421px;height:1.0px;background:#d3dbda;"></div>
<svg class="ic" style="left:893.0px;top:945.0px;width:12px;height:12px;filter:brightness(.7);" viewBox="0 0 16 16"><path d="M5.8 3.6 L10.4 8 L5.8 12.4" stroke="#6f7a7c" stroke-width="1.2" fill="none" stroke-linecap="round" stroke-linejoin="round" /></svg>
<svg style="left:0;top:0;width:2269px;height:1105px" viewBox="0 0 2269 1105"><path d="M668.3 164L712 164" stroke="#0c7a5e" stroke-width="4.4" stroke-linecap="round" fill="none"/><path d="M743 164L2002 164" stroke="#0c7a5e" stroke-width="4.4" stroke-linecap="round" fill="none"/><path d="M668.3 164L668.3 196" stroke="#0c7a5e" stroke-width="4.4" stroke-linecap="round" fill="none"/><path d="M668.3 220.2L668.3 286" stroke="#0c7a5e" stroke-width="4.4" stroke-linecap="round" fill="none"/><path d="M668.3 309L668.3 823" stroke="#0c7a5e" stroke-width="4.4" stroke-linecap="round" fill="none"/><path d="M668.3 971L668.3 1037.5" stroke="#0c7a5e" stroke-width="4.4" stroke-linecap="round" fill="none"/><path d="M668.3 1037.5L2002 1037.5" stroke="#0c7a5e" stroke-width="4.4" stroke-linecap="round" fill="none"/><path d="M2002 164L2002 1037.5" stroke="#0c7a5e" stroke-width="4.4" stroke-linecap="round" fill="none"/><rect x="372.6" y="573" width="287.8" height="28.4" fill="none" stroke="#0c7a5e" stroke-width="3"/><path d="M293.0 89.7L355.5 89.7" stroke="#0c7a5e" stroke-width="4.6" stroke-linecap="round" fill="none"/><path d="M370.5 89.7L349.5 96.5L355.5 89.7L349.5 82.9Z" fill="#0c7a5e"/><path d="M180.0 120.2L355.5 120.2" stroke="#0c7a5e" stroke-width="4.6" stroke-linecap="round" fill="none"/><path d="M370.5 120.2L349.5 127.0L355.5 120.2L349.5 113.4Z" fill="#0c7a5e"/><path d="M271.7 150.1L355.3 150.1" stroke="#0c7a5e" stroke-width="4.6" stroke-linecap="round" fill="none"/><path d="M370.3 150.1L349.3 156.9L355.3 150.1L349.3 143.3Z" fill="#0c7a5e"/><path d="M271.7 150.1L1150.7 279.2" stroke="#0c7a5e" stroke-width="4.6" stroke-linecap="round" fill="none"/><path d="M1165.5 281.4L1143.7 285.1L1150.7 279.2L1145.7 271.6Z" fill="#0c7a5e"/><path d="M271.7 150.1L752.9 327.4" stroke="#0c7a5e" stroke-width="4.6" stroke-linecap="round" fill="none"/><path d="M767.0 332.6L744.9 331.7L752.9 327.4L749.6 319.0Z" fill="#0c7a5e"/><path d="M293.0 398.5L356.7 219.2" stroke="#0c7a5e" stroke-width="4.6" stroke-linecap="round" fill="none"/><path d="M361.7 205.1L361.1 227.2L356.7 219.2L348.3 222.6Z" fill="#0c7a5e"/><path d="M293.0 398.5L355.5 598.5" stroke="#0c7a5e" stroke-width="4.6" stroke-linecap="round" fill="none"/><path d="M360.0 612.8L347.2 594.8L355.5 598.5L360.2 590.7Z" fill="#0c7a5e"/><path d="M219.5 883.3L462.2 883.3" stroke="#0c7a5e" stroke-width="4.6" stroke-linecap="round" fill="none"/><path d="M477.2 883.3L456.2 890.1L462.2 883.3L456.2 876.5Z" fill="#0c7a5e"/><path d="M219.5 1084.0L352.7 1084.0" stroke="#0c7a5e" stroke-width="4.6" stroke-linecap="round" fill="none"/><path d="M367.7 1084.0L346.7 1090.8L352.7 1084.0L346.7 1077.2Z" fill="#0c7a5e"/><path d="M729.3 32.0L729.3 151.4" stroke="#0c7a5e" stroke-width="4.6" stroke-linecap="round" fill="none"/><path d="M729.3 166.4L722.5 145.4L729.3 151.4L736.1 145.4Z" fill="#0c7a5e"/><path d="M1313.0 36.5L1313.0 140.7" stroke="#0c7a5e" stroke-width="4.6" stroke-linecap="round" fill="none"/><path d="M1313.0 155.7L1306.2 134.7L1313.0 140.7L1319.8 134.7Z" fill="#0c7a5e"/><path d="M2089.8 37.5L2089.8 93.4" stroke="#0c7a5e" stroke-width="4.6" stroke-linecap="round" fill="none"/><path d="M2089.8 108.4L2083.0 87.4L2089.8 93.4L2096.6 87.4Z" fill="#0c7a5e"/></svg>
<div class="t" style="top:76.9px;font-size:19.35px;color:#000;line-height:20px;font-weight:700;left:13px;">1. Заголовок главного окна</div>
<div class="t" style="top:108.9px;font-size:19.35px;color:#000;line-height:20px;font-weight:700;left:13px;">2. Главное меню</div>
<div class="t" style="top:138.9px;font-size:19.35px;color:#000;line-height:20px;font-weight:700;left:13px;">3. Панели инструментов</div>
<div class="t" style="top:389.9px;font-size:19.35px;color:#000;line-height:20px;font-weight:700;left:13px;">4. Функциональные панели</div>
<div class="t" style="top:571.9px;font-size:19.35px;color:#000;line-height:20px;font-weight:700;left:13px;">5. Вкладки функциональных</div>
<div class="t" style="top:593.9px;font-size:19.35px;color:#000;line-height:20px;font-weight:700;left:13px;">панелей</div>
<div class="t" style="top:871.9px;font-size:19.35px;color:#000;line-height:20px;font-weight:700;left:12px;">6. Контекстное меню</div>
<div class="t" style="top:1069.9px;font-size:19.35px;color:#000;line-height:20px;font-weight:700;left:12px;">7. Строка состояния</div>
<div class="t" style="top:3.9px;font-size:19.35px;color:#000;line-height:20px;font-weight:700;left:636px;">8. Окно документа</div>
<div class="t" style="top:8.9px;font-size:19.35px;color:#000;line-height:20px;font-weight:700;left:1226px;">9. Рабочая область</div>
<div class="t" style="top:7.9px;font-size:19.35px;color:#000;line-height:20px;font-weight:700;left:1956px;">10. Рабочее пространство</div>
</body></html>
